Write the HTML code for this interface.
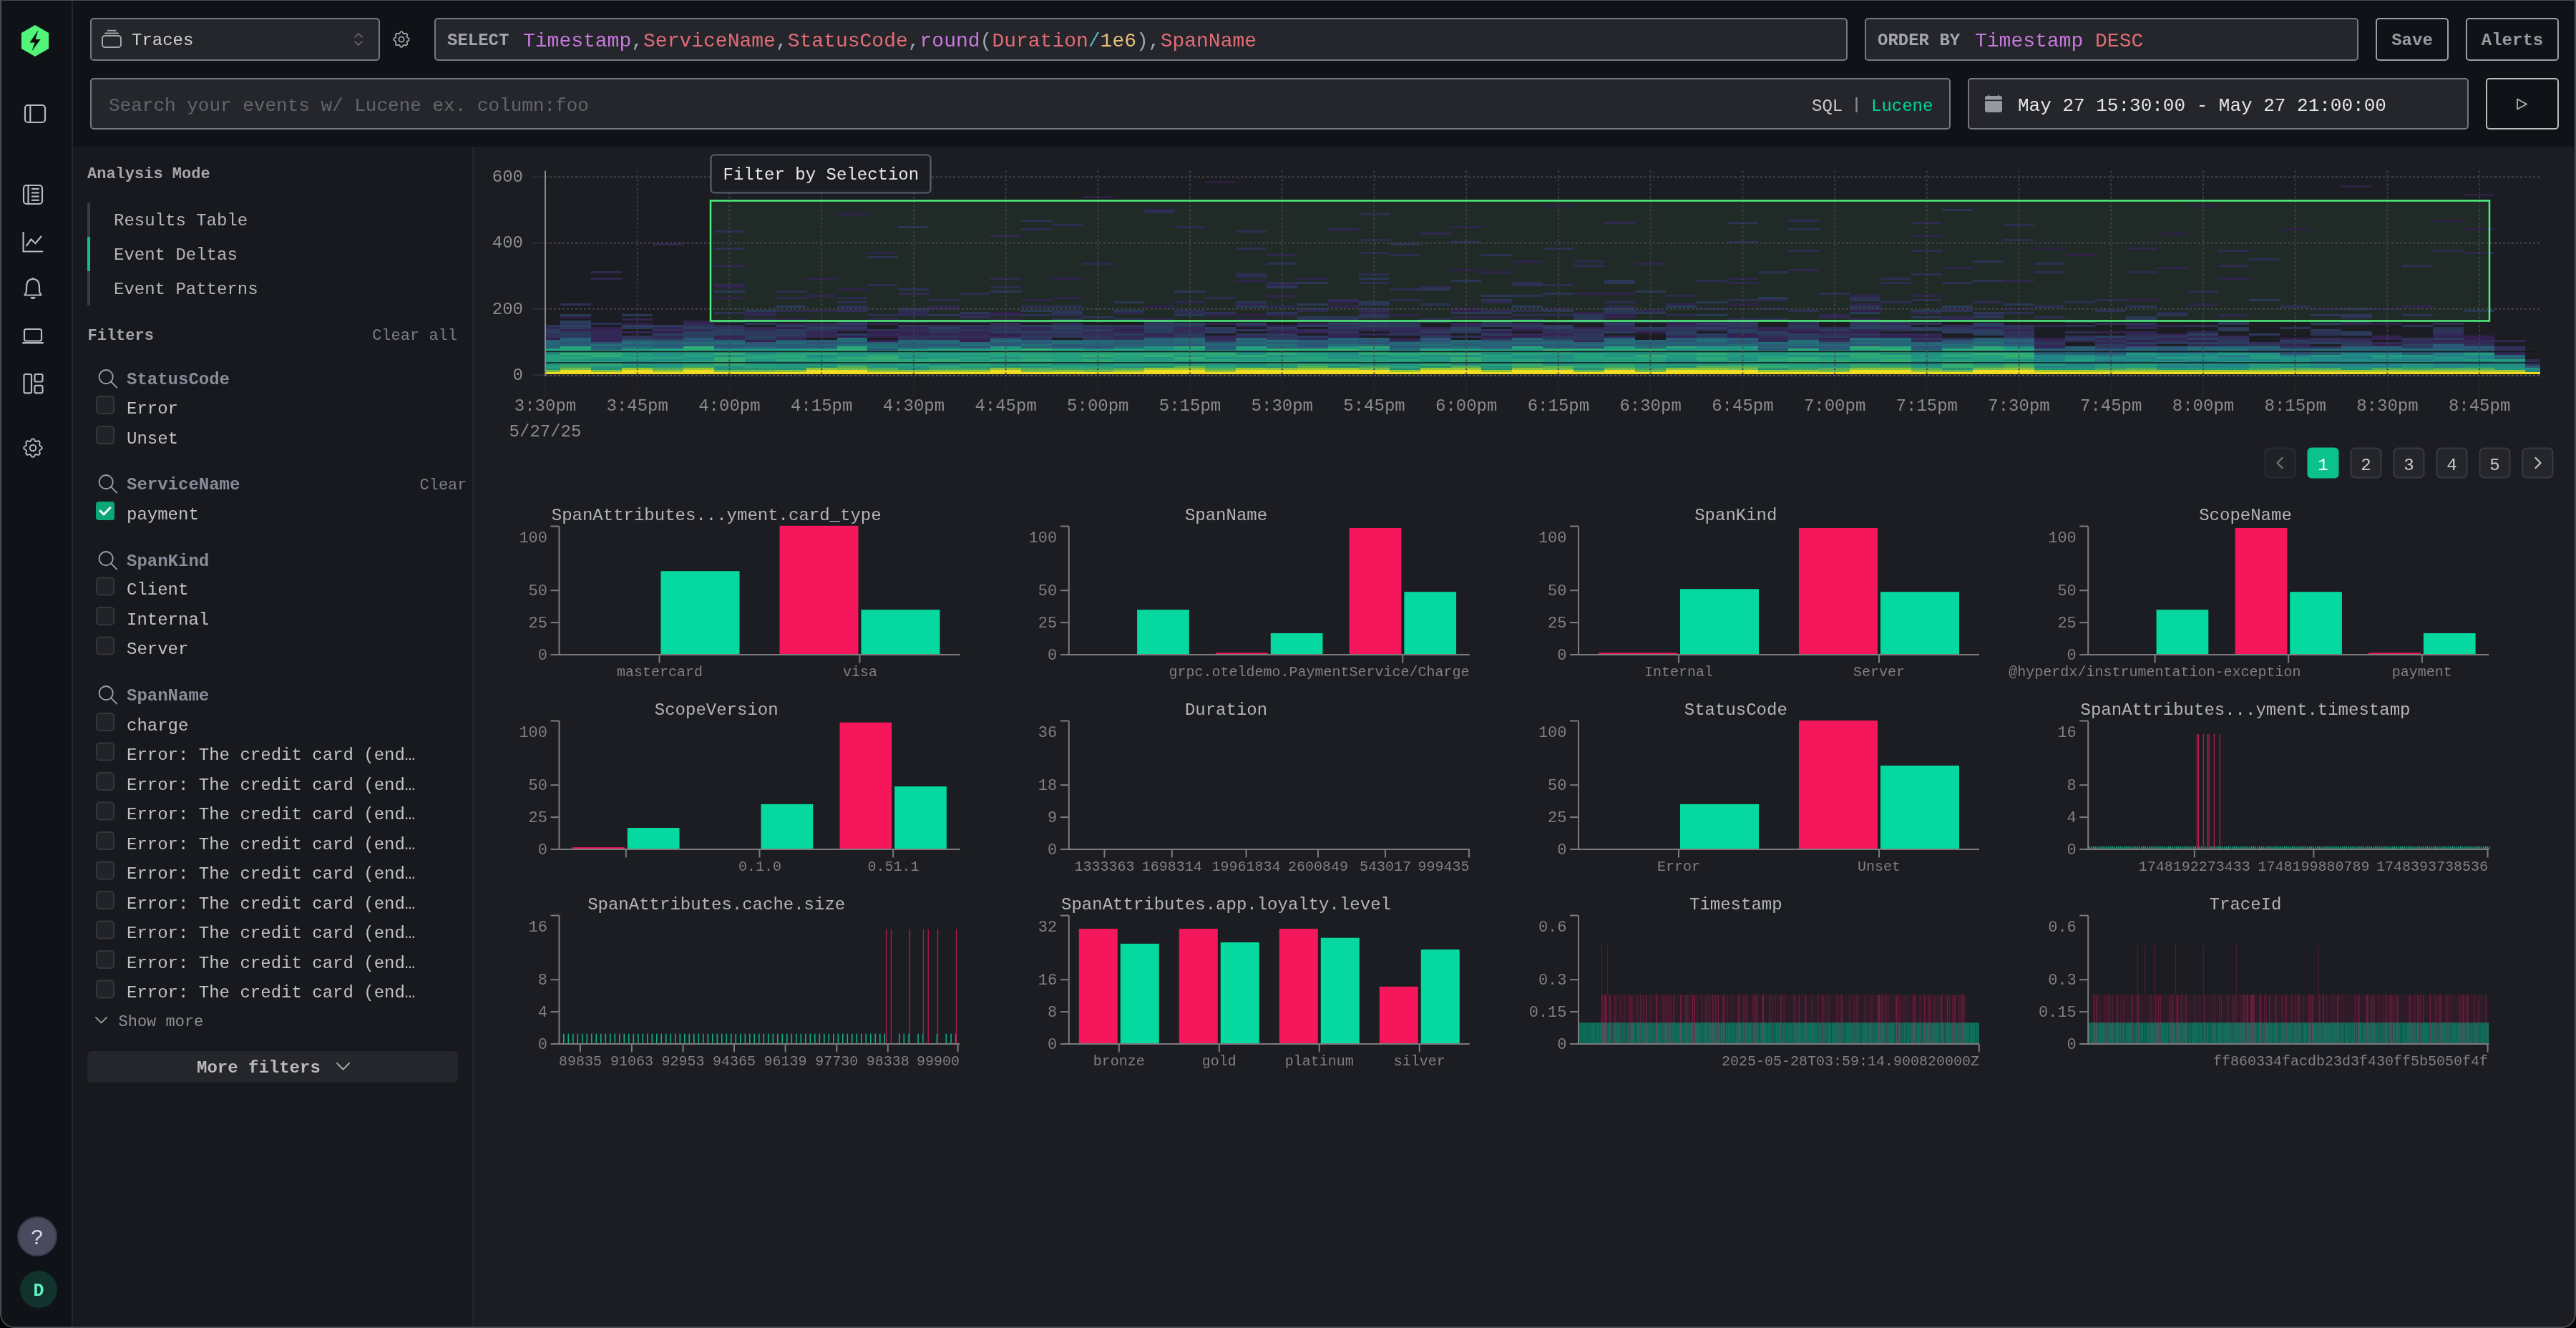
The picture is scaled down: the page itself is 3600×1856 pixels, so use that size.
<!DOCTYPE html>
<html><head><meta charset="utf-8"><title>HyperDX Search</title>
<style>html,body{margin:0;padding:0;background:#000;overflow:hidden;width:100%;height:100%}text{font-family:'Liberation Mono',monospace}</style>
</head><body>
<svg width="100%" height="100%" viewBox="0 0 3600 1856" preserveAspectRatio="xMidYMid meet" style="display:block;will-change:transform"><rect x="0" y="0" width="3600" height="1856" fill="#000"/>
<path d="M0 0 H3600 V1836 A20 20 0 0 1 3580 1856 H20 A20 20 0 0 1 0 1836 Z" fill="#4a4b50"/>
<path d="M2 1 H3598 V1836 A18 18 0 0 1 3580 1854 H20 A18 18 0 0 1 2 1836 Z" fill="#1c1d22"/>
<path d="M2 1 H100 V1854 H20 A18 18 0 0 1 2 1836 Z" fill="#0f1217"/>
<rect x="100.0" y="1.0" width="2.0" height="1853.0" fill="#24262b" stroke="none" stroke-width="0" rx="0" />
<rect x="102.0" y="1.0" width="3496.0" height="204.0" fill="#0f1217" stroke="none" stroke-width="0" rx="0" />
<rect x="102.0" y="205.0" width="558.0" height="1649.0" fill="#18191e" stroke="none" stroke-width="0" rx="0" />
<rect x="660.0" y="205.0" width="2.0" height="1649.0" fill="#24262b" stroke="none" stroke-width="0" rx="0" />
<polygon points="49.0,79.0 29.9,68.0 29.9,46.0 49.0,35.0 68.1,46.0 68.1,68.0" fill="#50f57a"/>
<path d="M53.5 42 L41.5 59.5 L48.5 59.5 L44.5 71.5 L56.5 55 L49.5 55 Z" fill="#0d0f12"/>
<rect x="35.0" y="147.0" width="28.0" height="24.0" fill="none" stroke="#b4bac3" stroke-width="2.2" rx="4" />
<line x1="42.3" y1="147.0" x2="42.3" y2="171.0" stroke="#b4bac3" stroke-width="2.2" />
<rect x="33.0" y="259.0" width="26.0" height="26.0" fill="none" stroke="#b4bac3" stroke-width="2.2" rx="4" />
<line x1="39.5" y1="259.0" x2="39.5" y2="285.0" stroke="#b4bac3" stroke-width="2.2" />
<line x1="44.0" y1="264.0" x2="54.7" y2="264.0" stroke="#b4bac3" stroke-width="2.2" />
<line x1="44.0" y1="269.4" x2="54.7" y2="269.4" stroke="#b4bac3" stroke-width="2.2" />
<line x1="44.0" y1="274.6" x2="54.7" y2="274.6" stroke="#b4bac3" stroke-width="2.2" />
<line x1="44.0" y1="279.8" x2="54.7" y2="279.8" stroke="#b4bac3" stroke-width="2.2" />
<path d="M32.6 324 V351.5 H60.2" fill="none" stroke="#b4bac3" stroke-width="2.2"/>
<path d="M36.7 344.2 L43.4 334.5 L49.5 340.2 L57.9 330" fill="none" stroke="#b4bac3" stroke-width="2.2"/>
<path d="M46 390 C39 390 37 396 37 402 V407 C37 409 35 411 34.5 412.5 H57.5 C57 411 55 409 55 407 V402 C55 396 53 390 46 390 Z" fill="none" stroke="#b4bac3" stroke-width="2.2" stroke-linejoin="round"/>
<circle cx="46" cy="389.5" r="1.6" fill="#b4bac3"/>
<path d="M42.5 415 A3.5 3 0 0 0 49.5 415 Z" fill="#b4bac3"/>
<rect x="34.0" y="460.0" width="24.0" height="16.5" fill="none" stroke="#b4bac3" stroke-width="2.2" rx="2.5" />
<line x1="32.4" y1="479.2" x2="59.7" y2="479.2" stroke="#b4bac3" stroke-width="2.6" stroke-linecap="round"/>
<rect x="33.5" y="523.0" width="10.5" height="26.3" fill="none" stroke="#b4bac3" stroke-width="2.2" rx="2" />
<rect x="48.5" y="523.0" width="11.0" height="10.5" fill="none" stroke="#b4bac3" stroke-width="2.2" rx="2" />
<rect x="48.5" y="538.8" width="11.0" height="10.5" fill="none" stroke="#b4bac3" stroke-width="2.2" rx="2" />
<g transform="translate(28.96,608.96) scale(1.42)" fill="none" stroke="#b4bac3" stroke-width="1.408"><path d="M10.325 4.317c.426 -1.756 2.924 -1.756 3.35 0a1.724 1.724 0 0 0 2.573 1.066c1.543 -.94 3.31 .826 2.37 2.37a1.724 1.724 0 0 0 1.065 2.572c1.756 .426 1.756 2.924 0 3.35a1.724 1.724 0 0 0 -1.066 2.573c.94 1.543 -.826 3.31 -2.37 2.37a1.724 1.724 0 0 0 -2.572 1.065c-.426 1.756 -2.924 1.756 -3.35 0a1.724 1.724 0 0 0 -2.573 -1.066c-1.543 .94 -3.31 -.826 -2.37 -2.37a1.724 1.724 0 0 0 -1.065 -2.572c-1.756 -.426 -1.756 -2.924 0 -3.35a1.724 1.724 0 0 0 1.066 -2.573c-.94 -1.543 .826 -3.31 2.37 -2.37c1 .608 2.296 .07 2.572 -1.065z"/><circle cx="12" cy="12" r="3"/></g>
<circle cx="52" cy="1728" r="27" fill="#4a4a5e" stroke="#38384a" stroke-width="2"/>
<text x="52.0" y="1739.0" font-size="30" fill="#dcdce6" font-weight="normal" text-anchor="middle" font-family="'Liberation Sans', sans-serif" >?</text>
<circle cx="54" cy="1802" r="26" fill="#12332d"/>
<text x="54.0" y="1811.0" font-size="25" fill="#63f0c4" font-weight="bold" text-anchor="middle" font-family="'Liberation Sans', sans-serif" >D</text>
<rect x="127.0" y="26.0" width="403.0" height="58.0" fill="#25262b" stroke="#777682" stroke-width="2" rx="4" />
<rect x="143.0" y="50.0" width="26.0" height="16.0" fill="none" stroke="#a4a5aa" stroke-width="2" rx="3.5" />
<line x1="147.0" y1="46.5" x2="165.0" y2="46.5" stroke="#a4a5aa" stroke-width="2" stroke-linecap="round"/>
<line x1="150.5" y1="42.8" x2="161.5" y2="42.8" stroke="#a4a5aa" stroke-width="2" stroke-linecap="round"/>
<text x="184.0" y="63.0" font-size="24" fill="#d0d1d4" font-weight="normal" text-anchor="start" font-family="'Liberation Mono', monospace" >Traces</text>
<path d="M496 52 L501 47 L506 52 M496 58 L501 63 L506 58" fill="none" stroke="#74757c" stroke-width="1.4" stroke-linecap="round" stroke-linejoin="round"/>
<g transform="translate(546.60,40.60) scale(1.2)" fill="none" stroke="#a4a5aa" stroke-width="1.500"><path d="M10.325 4.317c.426 -1.756 2.924 -1.756 3.35 0a1.724 1.724 0 0 0 2.573 1.066c1.543 -.94 3.31 .826 2.37 2.37a1.724 1.724 0 0 0 1.065 2.572c1.756 .426 1.756 2.924 0 3.35a1.724 1.724 0 0 0 -1.066 2.573c.94 1.543 -.826 3.31 -2.37 2.37a1.724 1.724 0 0 0 -2.572 1.065c-.426 1.756 -2.924 1.756 -3.35 0a1.724 1.724 0 0 0 -2.573 -1.066c-1.543 .94 -3.31 -.826 -2.37 -2.37a1.724 1.724 0 0 0 -1.065 -2.572c-1.756 -.426 -1.756 -2.924 0 -3.35a1.724 1.724 0 0 0 1.066 -2.573c-.94 -1.543 .826 -3.31 2.37 -2.37c1 .608 2.296 .07 2.572 -1.065z"/><circle cx="12" cy="12" r="3"/></g>
<rect x="608.0" y="26.0" width="1973.0" height="58.0" fill="#25262b" stroke="#777682" stroke-width="2" rx="4" />
<text x="625.0" y="62.5" font-size="24" fill="#a5a6ad" font-weight="bold" text-anchor="start" font-family="'Liberation Mono', monospace" >SELECT</text>
<text x="731" y="64.5" font-size="28" font-family="'Liberation Mono', monospace" xml:space="preserve"><tspan fill="#c678dd">Timestamp</tspan><tspan fill="#9da5b4">,</tspan><tspan fill="#e06c75">ServiceName</tspan><tspan fill="#9da5b4">,</tspan><tspan fill="#e06c75">StatusCode</tspan><tspan fill="#9da5b4">,</tspan><tspan fill="#c678dd">round</tspan><tspan fill="#9da5b4">(</tspan><tspan fill="#e06c75">Duration</tspan><tspan fill="#56b6c2">/</tspan><tspan fill="#e5c07b">1e6</tspan><tspan fill="#9da5b4">)</tspan><tspan fill="#9da5b4">,</tspan><tspan fill="#e06c75">SpanName</tspan></text>
<rect x="2607.0" y="26.0" width="688.0" height="58.0" fill="#25262b" stroke="#777682" stroke-width="2" rx="4" />
<text x="2624.0" y="62.5" font-size="24" fill="#a5a6ad" font-weight="bold" text-anchor="start" font-family="'Liberation Mono', monospace" >ORDER BY</text>
<text x="2760" y="64.5" font-size="28" font-family="'Liberation Mono', monospace" xml:space="preserve"><tspan fill="#c678dd">Timestamp </tspan><tspan fill="#e06c75">DESC</tspan></text>
<rect x="3321.0" y="26.0" width="100.0" height="58.0" fill="#0f1217" stroke="#9c9ea3" stroke-width="2" rx="4" />
<text x="3371.0" y="62.5" font-size="24" fill="#9a9ca1" font-weight="bold" text-anchor="middle" font-family="'Liberation Mono', monospace" >Save</text>
<rect x="3447.0" y="26.0" width="128.0" height="58.0" fill="#0f1217" stroke="#9c9ea3" stroke-width="2" rx="4" />
<text x="3511.0" y="62.5" font-size="24" fill="#9a9ca1" font-weight="bold" text-anchor="middle" font-family="'Liberation Mono', monospace" >Alerts</text>
<rect x="127.0" y="110.0" width="2598.0" height="70.0" fill="#25262b" stroke="#777682" stroke-width="2" rx="4" />
<text x="152.0" y="155.0" font-size="26" fill="#63656b" font-weight="normal" text-anchor="start" font-family="'Liberation Mono', monospace" >Search your events w/ Lucene ex. column:foo</text>
<text x="2532.0" y="155.0" font-size="24" fill="#c9cacd" font-weight="normal" text-anchor="start" font-family="'Liberation Mono', monospace" >SQL</text>
<line x1="2594.5" y1="136.0" x2="2594.5" y2="157.0" stroke="#85868b" stroke-width="2.5" />
<text x="2615.0" y="155.0" font-size="24" fill="#00d69a" font-weight="normal" text-anchor="start" font-family="'Liberation Mono', monospace" >Lucene</text>
<rect x="2751.0" y="110.0" width="698.0" height="70.0" fill="#25262b" stroke="#777682" stroke-width="2" rx="4" />
<rect x="2774.0" y="134.0" width="24.0" height="23.0" fill="#96989d" stroke="none" stroke-width="0" rx="3" />
<rect x="2774.0" y="139.5" width="24.0" height="1.6" fill="#25262b" stroke="none" stroke-width="0" rx="0" />
<rect x="2778.5" y="132.5" width="1.6" height="3.0" fill="#96989d" stroke="none" stroke-width="0" rx="0" />
<rect x="2792.0" y="132.5" width="1.6" height="3.0" fill="#96989d" stroke="none" stroke-width="0" rx="0" />
<text x="2820.0" y="155.0" font-size="26" fill="#e4e5e8" font-weight="normal" text-anchor="start" font-family="'Liberation Mono', monospace" >May 27 15:30:00 - May 27 21:00:00</text>
<rect x="3475.0" y="110.0" width="100.0" height="70.0" fill="#0f1217" stroke="#b9bbbf" stroke-width="2" rx="4" />
<path d="M3518 138.5 L3531 145.5 L3518 152.5 Z" fill="none" stroke="#b0b2b6" stroke-width="1.8" stroke-linejoin="round"/>
<text x="122.0" y="248.5" font-size="22" fill="#a5a6ab" font-weight="bold" text-anchor="start" font-family="'Liberation Mono', monospace" >Analysis Mode</text>
<rect x="122.0" y="283.0" width="4.0" height="144.0" fill="#3a3b40" stroke="none" stroke-width="0" rx="0" />
<rect x="122.0" y="331.0" width="4.0" height="48.0" fill="#0bc18e" stroke="none" stroke-width="0" rx="0" />
<text x="159.0" y="315.0" font-size="24" fill="#b5b6ba" font-weight="normal" text-anchor="start" font-family="'Liberation Mono', monospace" >Results Table</text>
<text x="159.0" y="363.0" font-size="24" fill="#b5b6ba" font-weight="normal" text-anchor="start" font-family="'Liberation Mono', monospace" >Event Deltas</text>
<text x="159.0" y="411.0" font-size="24" fill="#b5b6ba" font-weight="normal" text-anchor="start" font-family="'Liberation Mono', monospace" >Event Patterns</text>
<text x="122.5" y="475.0" font-size="22" fill="#a5a6ab" font-weight="bold" text-anchor="start" font-family="'Liberation Mono', monospace" >Filters</text>
<text x="639.0" y="475.0" font-size="22" fill="#7c7e84" font-weight="normal" text-anchor="end" font-family="'Liberation Mono', monospace" >Clear all</text>
<g transform="translate(134.49,512.89) scale(1.37)" fill="none" stroke="#9c9ea6" stroke-width="1.387" stroke-linecap="round"><circle cx="10" cy="10" r="7"/><path d="M21 21l-6 -6"/></g>
<text x="177.0" y="536.5" font-size="24" fill="#8a8c9a" font-weight="bold" text-anchor="start" font-family="'Liberation Mono', monospace" >StatusCode</text>
<rect x="135.0" y="554.0" width="24.0" height="24.0" fill="#222328" stroke="#34363b" stroke-width="2" rx="4" />
<text x="177.0" y="577.5" font-size="24" fill="#c1c2c5" font-weight="normal" text-anchor="start" font-family="'Liberation Mono', monospace" >Error</text>
<rect x="135.0" y="596.0" width="24.0" height="24.0" fill="#222328" stroke="#34363b" stroke-width="2" rx="4" />
<text x="177.0" y="619.5" font-size="24" fill="#c1c2c5" font-weight="normal" text-anchor="start" font-family="'Liberation Mono', monospace" >Unset</text>
<g transform="translate(134.49,659.89) scale(1.37)" fill="none" stroke="#9c9ea6" stroke-width="1.387" stroke-linecap="round"><circle cx="10" cy="10" r="7"/><path d="M21 21l-6 -6"/></g>
<text x="177.0" y="683.5" font-size="24" fill="#8a8c9a" font-weight="bold" text-anchor="start" font-family="'Liberation Mono', monospace" >ServiceName</text>
<text x="652.5" y="683.5" font-size="22" fill="#7c7e84" font-weight="normal" text-anchor="end" font-family="'Liberation Mono', monospace" >Clear</text>
<rect x="134.0" y="701.0" width="26.0" height="26.0" fill="#0ca678" stroke="none" stroke-width="0" rx="4" />
<path d="M140 714 L145 719 L154 709.5" fill="none" stroke="#fff" stroke-width="3" stroke-linecap="round" stroke-linejoin="round"/>
<text x="177.0" y="725.5" font-size="24" fill="#c1c2c5" font-weight="normal" text-anchor="start" font-family="'Liberation Mono', monospace" >payment</text>
<g transform="translate(134.49,766.89) scale(1.37)" fill="none" stroke="#9c9ea6" stroke-width="1.387" stroke-linecap="round"><circle cx="10" cy="10" r="7"/><path d="M21 21l-6 -6"/></g>
<text x="177.0" y="790.5" font-size="24" fill="#8a8c9a" font-weight="bold" text-anchor="start" font-family="'Liberation Mono', monospace" >SpanKind</text>
<rect x="135.0" y="807.5" width="24.0" height="24.0" fill="#222328" stroke="#34363b" stroke-width="2" rx="4" />
<text x="177.0" y="831.0" font-size="24" fill="#c1c2c5" font-weight="normal" text-anchor="start" font-family="'Liberation Mono', monospace" >Client</text>
<rect x="135.0" y="849.0" width="24.0" height="24.0" fill="#222328" stroke="#34363b" stroke-width="2" rx="4" />
<text x="177.0" y="872.5" font-size="24" fill="#c1c2c5" font-weight="normal" text-anchor="start" font-family="'Liberation Mono', monospace" >Internal</text>
<rect x="135.0" y="890.5" width="24.0" height="24.0" fill="#222328" stroke="#34363b" stroke-width="2" rx="4" />
<text x="177.0" y="914.0" font-size="24" fill="#c1c2c5" font-weight="normal" text-anchor="start" font-family="'Liberation Mono', monospace" >Server</text>
<g transform="translate(134.49,954.89) scale(1.37)" fill="none" stroke="#9c9ea6" stroke-width="1.387" stroke-linecap="round"><circle cx="10" cy="10" r="7"/><path d="M21 21l-6 -6"/></g>
<text x="177.0" y="978.5" font-size="24" fill="#8a8c9a" font-weight="bold" text-anchor="start" font-family="'Liberation Mono', monospace" >SpanName</text>
<rect x="135.0" y="997.0" width="24.0" height="24.0" fill="#222328" stroke="#34363b" stroke-width="2" rx="4" />
<text x="177.0" y="1020.5" font-size="24" fill="#c1c2c5" font-weight="normal" text-anchor="start" font-family="'Liberation Mono', monospace" >charge</text>
<rect x="135.0" y="1038.5" width="24.0" height="24.0" fill="#222328" stroke="#34363b" stroke-width="2" rx="4" />
<text x="177.0" y="1062.0" font-size="24" fill="#c1c2c5" font-weight="normal" text-anchor="start" font-family="'Liberation Mono', monospace" >Error: The credit card (end…</text>
<rect x="135.0" y="1080.0" width="24.0" height="24.0" fill="#222328" stroke="#34363b" stroke-width="2" rx="4" />
<text x="177.0" y="1103.5" font-size="24" fill="#c1c2c5" font-weight="normal" text-anchor="start" font-family="'Liberation Mono', monospace" >Error: The credit card (end…</text>
<rect x="135.0" y="1121.5" width="24.0" height="24.0" fill="#222328" stroke="#34363b" stroke-width="2" rx="4" />
<text x="177.0" y="1145.0" font-size="24" fill="#c1c2c5" font-weight="normal" text-anchor="start" font-family="'Liberation Mono', monospace" >Error: The credit card (end…</text>
<rect x="135.0" y="1163.0" width="24.0" height="24.0" fill="#222328" stroke="#34363b" stroke-width="2" rx="4" />
<text x="177.0" y="1186.5" font-size="24" fill="#c1c2c5" font-weight="normal" text-anchor="start" font-family="'Liberation Mono', monospace" >Error: The credit card (end…</text>
<rect x="135.0" y="1204.5" width="24.0" height="24.0" fill="#222328" stroke="#34363b" stroke-width="2" rx="4" />
<text x="177.0" y="1228.0" font-size="24" fill="#c1c2c5" font-weight="normal" text-anchor="start" font-family="'Liberation Mono', monospace" >Error: The credit card (end…</text>
<rect x="135.0" y="1246.0" width="24.0" height="24.0" fill="#222328" stroke="#34363b" stroke-width="2" rx="4" />
<text x="177.0" y="1269.5" font-size="24" fill="#c1c2c5" font-weight="normal" text-anchor="start" font-family="'Liberation Mono', monospace" >Error: The credit card (end…</text>
<rect x="135.0" y="1287.5" width="24.0" height="24.0" fill="#222328" stroke="#34363b" stroke-width="2" rx="4" />
<text x="177.0" y="1311.0" font-size="24" fill="#c1c2c5" font-weight="normal" text-anchor="start" font-family="'Liberation Mono', monospace" >Error: The credit card (end…</text>
<rect x="135.0" y="1329.0" width="24.0" height="24.0" fill="#222328" stroke="#34363b" stroke-width="2" rx="4" />
<text x="177.0" y="1352.5" font-size="24" fill="#c1c2c5" font-weight="normal" text-anchor="start" font-family="'Liberation Mono', monospace" >Error: The credit card (end…</text>
<rect x="135.0" y="1370.5" width="24.0" height="24.0" fill="#222328" stroke="#34363b" stroke-width="2" rx="4" />
<text x="177.0" y="1394.0" font-size="24" fill="#c1c2c5" font-weight="normal" text-anchor="start" font-family="'Liberation Mono', monospace" >Error: The credit card (end…</text>
<path d="M134 1422 L141.5 1429.5 L149 1422" fill="none" stroke="#909296" stroke-width="2" stroke-linecap="round" stroke-linejoin="round"/>
<text x="165.5" y="1433.5" font-size="22" fill="#8e9095" font-weight="normal" text-anchor="start" font-family="'Liberation Mono', monospace" >Show more</text>
<rect x="122.0" y="1469.0" width="518.0" height="44.0" fill="#25262b" stroke="none" stroke-width="0" rx="6" />
<text x="275.0" y="1499.0" font-size="24" fill="#b9babe" font-weight="bold" text-anchor="start" font-family="'Liberation Mono', monospace" >More filters</text>
<path d="M471 1486 L479.5 1494.5 L488 1486" fill="none" stroke="#a6a7ab" stroke-width="2" stroke-linecap="round" stroke-linejoin="round"/>
<line x1="743.0" y1="247.4" x2="762.0" y2="247.4" stroke="#2a2c31" stroke-width="2" />
<line x1="743.0" y1="339.5" x2="762.0" y2="339.5" stroke="#2a2c31" stroke-width="2" />
<line x1="743.0" y1="431.7" x2="762.0" y2="431.7" stroke="#2a2c31" stroke-width="2" />
<line x1="743.0" y1="524.0" x2="762.0" y2="524.0" stroke="#2a2c31" stroke-width="2" />
<rect x="993.0" y="280.5" width="2486.0" height="168.0" fill="rgba(80,245,120,0.07)" stroke="none" stroke-width="0" rx="0" />
<g shape-rendering="crispEdges"><rect x="762.0" y="520.0" width="21.4" height="3.0" fill="#f1dc24"/><rect x="762.0" y="517.0" width="21.4" height="3.0" fill="#70bd4b"/><rect x="762.0" y="514.0" width="21.4" height="3.0" fill="#249472"/><rect x="762.0" y="511.0" width="21.4" height="3.0" fill="#24a07e"/><rect x="762.0" y="508.0" width="21.4" height="3.0" fill="#229482"/><rect x="762.0" y="505.0" width="21.4" height="3.0" fill="#239b7f"/><rect x="762.0" y="502.0" width="21.4" height="3.0" fill="#249f7e"/><rect x="762.0" y="499.0" width="21.4" height="3.0" fill="#24a07e"/><rect x="762.0" y="496.0" width="21.4" height="3.0" fill="#25a17d"/><rect x="762.0" y="493.0" width="21.4" height="3.0" fill="#218f84"/><rect x="762.0" y="490.0" width="21.4" height="3.0" fill="#218f84"/><rect x="762.0" y="487.0" width="21.4" height="3.0" fill="#24a07e"/><rect x="762.0" y="484.0" width="21.4" height="3.0" fill="#285f77"/><rect x="762.0" y="481.0" width="21.4" height="3.0" fill="#276477"/><rect x="762.0" y="478.0" width="21.4" height="3.0" fill="#256777"/><rect x="762.0" y="475.0" width="21.4" height="3.0" fill="#276477"/><rect x="762.0" y="472.0" width="21.4" height="3.0" fill="#332251"/><rect x="762.0" y="469.0" width="21.4" height="3.0" fill="#2f335a"/><rect x="762.0" y="466.0" width="21.4" height="3.0" fill="#303159"/><rect x="762.0" y="463.0" width="21.4" height="3.0" fill="#2c3b5e"/><rect x="762.0" y="460.0" width="21.4" height="3.0" fill="#2a3f5e"/><rect x="762.0" y="457.0" width="21.4" height="3.0" fill="#332855"/><rect x="762.0" y="454.0" width="21.4" height="3.0" fill="#2a3755"/><rect x="783.4" y="520.0" width="42.9" height="3.0" fill="#f1dc24"/><rect x="783.4" y="517.0" width="42.9" height="3.0" fill="#f1dc24"/><rect x="783.4" y="514.0" width="42.9" height="3.0" fill="#70bd4b"/><rect x="783.4" y="511.0" width="42.9" height="3.0" fill="#3ea363"/><rect x="783.4" y="508.0" width="42.9" height="3.0" fill="#25a17d"/><rect x="783.4" y="505.0" width="42.9" height="3.0" fill="#27a57b"/><rect x="783.4" y="502.0" width="42.9" height="3.0" fill="#229581"/><rect x="783.4" y="499.0" width="42.9" height="3.0" fill="#2aa779"/><rect x="783.4" y="496.0" width="42.9" height="3.0" fill="#249d7f"/><rect x="783.4" y="493.0" width="42.9" height="3.0" fill="#35ad72"/><rect x="783.4" y="490.0" width="42.9" height="3.0" fill="#249d7f"/><rect x="783.4" y="487.0" width="42.9" height="3.0" fill="#25a17d"/><rect x="783.4" y="484.0" width="42.9" height="3.0" fill="#2aa779"/><rect x="783.4" y="481.0" width="42.9" height="3.0" fill="#295d77"/><rect x="783.4" y="478.0" width="42.9" height="3.0" fill="#2c5676"/><rect x="783.4" y="475.0" width="42.9" height="3.0" fill="#276077"/><rect x="783.4" y="472.0" width="42.9" height="3.0" fill="#276077"/><rect x="783.4" y="469.0" width="42.9" height="3.0" fill="#2e355b"/><rect x="783.4" y="466.0" width="42.9" height="3.0" fill="#2b3e5e"/><rect x="783.4" y="463.0" width="42.9" height="3.0" fill="#2e365b"/><rect x="783.4" y="460.0" width="42.9" height="3.0" fill="#332453"/><rect x="783.4" y="457.0" width="42.9" height="3.0" fill="#2d395c"/><rect x="783.4" y="454.0" width="42.9" height="3.0" fill="#2b3e5e"/><rect x="783.4" y="451.0" width="42.9" height="3.0" fill="#2e365b"/><rect x="783.4" y="448.0" width="42.9" height="3.0" fill="#2a3f5e"/><rect x="783.4" y="442.0" width="42.9" height="3.0" fill="#30214b"/><rect x="783.4" y="439.0" width="42.9" height="3.0" fill="#283c56"/><rect x="783.4" y="424.0" width="42.9" height="3.0" fill="#2d3052"/><rect x="826.3" y="520.0" width="42.9" height="3.0" fill="#f1dc24"/><rect x="826.3" y="517.0" width="42.9" height="3.0" fill="#8bc43a"/><rect x="826.3" y="514.0" width="42.9" height="3.0" fill="#249472"/><rect x="826.3" y="511.0" width="42.9" height="3.0" fill="#229681"/><rect x="826.3" y="508.0" width="42.9" height="3.0" fill="#31ab75"/><rect x="826.3" y="505.0" width="42.9" height="3.0" fill="#25a37c"/><rect x="826.3" y="502.0" width="42.9" height="3.0" fill="#218f84"/><rect x="826.3" y="499.0" width="42.9" height="3.0" fill="#239b7f"/><rect x="826.3" y="496.0" width="42.9" height="3.0" fill="#32ab74"/><rect x="826.3" y="493.0" width="42.9" height="3.0" fill="#2aa779"/><rect x="826.3" y="490.0" width="42.9" height="3.0" fill="#2ea977"/><rect x="826.3" y="487.0" width="42.9" height="3.0" fill="#236c77"/><rect x="826.3" y="484.0" width="42.9" height="3.0" fill="#295c77"/><rect x="826.3" y="481.0" width="42.9" height="3.0" fill="#236e77"/><rect x="826.3" y="478.0" width="42.9" height="3.0" fill="#2b5777"/><rect x="826.3" y="475.0" width="42.9" height="3.0" fill="#332855"/><rect x="826.3" y="472.0" width="42.9" height="3.0" fill="#332554"/><rect x="826.3" y="469.0" width="42.9" height="3.0" fill="#332754"/><rect x="826.3" y="466.0" width="42.9" height="3.0" fill="#322a56"/><rect x="826.3" y="463.0" width="42.9" height="3.0" fill="#322955"/><rect x="826.3" y="460.0" width="42.9" height="3.0" fill="#332554"/><rect x="826.3" y="457.0" width="42.9" height="3.0" fill="#33204f"/><rect x="826.3" y="451.0" width="42.9" height="3.0" fill="#2c3052"/><rect x="826.3" y="388.0" width="42.9" height="3.0" fill="#2f284e"/><rect x="826.3" y="379.0" width="42.9" height="3.0" fill="#2e2b50"/><rect x="869.2" y="520.0" width="42.9" height="3.0" fill="#f1dc24"/><rect x="869.2" y="517.0" width="42.9" height="3.0" fill="#f1dc24"/><rect x="869.2" y="514.0" width="42.9" height="3.0" fill="#9bc830"/><rect x="869.2" y="511.0" width="42.9" height="3.0" fill="#249472"/><rect x="869.2" y="508.0" width="42.9" height="3.0" fill="#239780"/><rect x="869.2" y="505.0" width="42.9" height="3.0" fill="#218e84"/><rect x="869.2" y="502.0" width="42.9" height="3.0" fill="#229681"/><rect x="869.2" y="499.0" width="42.9" height="3.0" fill="#25a37c"/><rect x="869.2" y="496.0" width="42.9" height="3.0" fill="#229781"/><rect x="869.2" y="493.0" width="42.9" height="3.0" fill="#249d7f"/><rect x="869.2" y="490.0" width="42.9" height="3.0" fill="#219183"/><rect x="869.2" y="487.0" width="42.9" height="3.0" fill="#229482"/><rect x="869.2" y="484.0" width="42.9" height="3.0" fill="#236e77"/><rect x="869.2" y="481.0" width="42.9" height="3.0" fill="#276077"/><rect x="869.2" y="478.0" width="42.9" height="3.0" fill="#236f77"/><rect x="869.2" y="475.0" width="42.9" height="3.0" fill="#2a5b77"/><rect x="869.2" y="472.0" width="42.9" height="3.0" fill="#2a3f5e"/><rect x="869.2" y="469.0" width="42.9" height="3.0" fill="#2f345b"/><rect x="869.2" y="463.0" width="42.9" height="3.0" fill="#332453"/><rect x="869.2" y="457.0" width="42.9" height="3.0" fill="#2d395c"/><rect x="869.2" y="454.0" width="42.9" height="3.0" fill="#2b3e5e"/><rect x="869.2" y="451.0" width="42.9" height="3.0" fill="#301f49"/><rect x="869.2" y="445.0" width="42.9" height="3.0" fill="#2f284f"/><rect x="869.2" y="439.0" width="42.9" height="3.0" fill="#293855"/><rect x="912.1" y="520.0" width="42.9" height="3.0" fill="#f1dc24"/><rect x="912.1" y="517.0" width="42.9" height="3.0" fill="#9bc830"/><rect x="912.1" y="514.0" width="42.9" height="3.0" fill="#52ae58"/><rect x="912.1" y="511.0" width="42.9" height="3.0" fill="#239780"/><rect x="912.1" y="508.0" width="42.9" height="3.0" fill="#229581"/><rect x="912.1" y="505.0" width="42.9" height="3.0" fill="#25a37c"/><rect x="912.1" y="502.0" width="42.9" height="3.0" fill="#218f84"/><rect x="912.1" y="499.0" width="42.9" height="3.0" fill="#24a07e"/><rect x="912.1" y="496.0" width="42.9" height="3.0" fill="#229482"/><rect x="912.1" y="493.0" width="42.9" height="3.0" fill="#208e85"/><rect x="912.1" y="490.0" width="42.9" height="3.0" fill="#249c7f"/><rect x="912.1" y="487.0" width="42.9" height="3.0" fill="#25a27d"/><rect x="912.1" y="484.0" width="42.9" height="3.0" fill="#276077"/><rect x="912.1" y="481.0" width="42.9" height="3.0" fill="#2a5a77"/><rect x="912.1" y="478.0" width="42.9" height="3.0" fill="#256777"/><rect x="912.1" y="475.0" width="42.9" height="3.0" fill="#2d5476"/><rect x="912.1" y="472.0" width="42.9" height="3.0" fill="#2e375c"/><rect x="912.1" y="469.0" width="42.9" height="3.0" fill="#322855"/><rect x="912.1" y="466.0" width="42.9" height="3.0" fill="#2a3f5e"/><rect x="912.1" y="463.0" width="42.9" height="3.0" fill="#332050"/><rect x="912.1" y="460.0" width="42.9" height="3.0" fill="#312e58"/><rect x="912.1" y="457.0" width="42.9" height="3.0" fill="#332654"/><rect x="912.1" y="454.0" width="42.9" height="3.0" fill="#2d3a5d"/><rect x="912.1" y="340.0" width="42.9" height="3.0" fill="#30264e"/><rect x="955.0" y="520.0" width="42.9" height="3.0" fill="#f1dc24"/><rect x="955.0" y="517.0" width="42.9" height="3.0" fill="#f1dc24"/><rect x="955.0" y="514.0" width="42.9" height="3.0" fill="#9bc830"/><rect x="955.0" y="511.0" width="42.9" height="3.0" fill="#3ea363"/><rect x="955.0" y="508.0" width="42.9" height="3.0" fill="#24a07e"/><rect x="955.0" y="505.0" width="42.9" height="3.0" fill="#26a57b"/><rect x="955.0" y="502.0" width="42.9" height="3.0" fill="#229581"/><rect x="955.0" y="499.0" width="42.9" height="3.0" fill="#219283"/><rect x="955.0" y="496.0" width="42.9" height="3.0" fill="#24a07e"/><rect x="955.0" y="493.0" width="42.9" height="3.0" fill="#239a7f"/><rect x="955.0" y="490.0" width="42.9" height="3.0" fill="#249e7f"/><rect x="955.0" y="487.0" width="42.9" height="3.0" fill="#2aa779"/><rect x="955.0" y="484.0" width="42.9" height="3.0" fill="#36ad72"/><rect x="955.0" y="481.0" width="42.9" height="3.0" fill="#276077"/><rect x="955.0" y="478.0" width="42.9" height="3.0" fill="#236b77"/><rect x="955.0" y="475.0" width="42.9" height="3.0" fill="#2d5476"/><rect x="955.0" y="472.0" width="42.9" height="3.0" fill="#2b5777"/><rect x="955.0" y="469.0" width="42.9" height="3.0" fill="#2a405e"/><rect x="955.0" y="466.0" width="42.9" height="3.0" fill="#2a3f5e"/><rect x="955.0" y="463.0" width="42.9" height="3.0" fill="#2b3d5e"/><rect x="955.0" y="460.0" width="42.9" height="3.0" fill="#322855"/><rect x="955.0" y="457.0" width="42.9" height="3.0" fill="#2a3f5e"/><rect x="955.0" y="454.0" width="42.9" height="3.0" fill="#2f345b"/><rect x="955.0" y="451.0" width="42.9" height="3.0" fill="#332754"/><rect x="955.0" y="448.0" width="42.9" height="3.0" fill="#30234c"/><rect x="997.9" y="520.0" width="42.9" height="3.0" fill="#f1dc24"/><rect x="997.9" y="517.0" width="42.9" height="3.0" fill="#70bd4b"/><rect x="997.9" y="514.0" width="42.9" height="3.0" fill="#249472"/><rect x="997.9" y="511.0" width="42.9" height="3.0" fill="#219283"/><rect x="997.9" y="508.0" width="42.9" height="3.0" fill="#36ad72"/><rect x="997.9" y="505.0" width="42.9" height="3.0" fill="#2ba778"/><rect x="997.9" y="502.0" width="42.9" height="3.0" fill="#35ad72"/><rect x="997.9" y="499.0" width="42.9" height="3.0" fill="#33ac73"/><rect x="997.9" y="496.0" width="42.9" height="3.0" fill="#229282"/><rect x="997.9" y="493.0" width="42.9" height="3.0" fill="#32ab74"/><rect x="997.9" y="490.0" width="42.9" height="3.0" fill="#239980"/><rect x="997.9" y="487.0" width="42.9" height="3.0" fill="#229282"/><rect x="997.9" y="484.0" width="42.9" height="3.0" fill="#2a5b77"/><rect x="997.9" y="481.0" width="42.9" height="3.0" fill="#2b5877"/><rect x="997.9" y="478.0" width="42.9" height="3.0" fill="#236d77"/><rect x="997.9" y="475.0" width="42.9" height="3.0" fill="#2a5b77"/><rect x="997.9" y="472.0" width="42.9" height="3.0" fill="#322b56"/><rect x="997.9" y="469.0" width="42.9" height="3.0" fill="#332554"/><rect x="997.9" y="466.0" width="42.9" height="3.0" fill="#2a3f5e"/><rect x="997.9" y="463.0" width="42.9" height="3.0" fill="#2b3e5e"/><rect x="997.9" y="460.0" width="42.9" height="3.0" fill="#2c3b5e"/><rect x="997.9" y="457.0" width="42.9" height="3.0" fill="#2f3259"/><rect x="997.9" y="454.0" width="42.9" height="3.0" fill="#312c57"/><rect x="997.9" y="448.0" width="42.9" height="3.0" fill="#293955"/><rect x="997.9" y="436.0" width="42.9" height="3.0" fill="#2c3153"/><rect x="997.9" y="415.0" width="42.9" height="3.0" fill="#30224b"/><rect x="997.9" y="406.0" width="42.9" height="3.0" fill="#2a3755"/><rect x="997.9" y="400.0" width="42.9" height="3.0" fill="#30224c"/><rect x="997.9" y="397.0" width="42.9" height="3.0" fill="#2e2a50"/><rect x="997.9" y="370.0" width="42.9" height="3.0" fill="#30264e"/><rect x="997.9" y="346.0" width="42.9" height="3.0" fill="#2c3052"/><rect x="997.9" y="322.0" width="42.9" height="3.0" fill="#2d2f52"/><rect x="1040.8" y="520.0" width="42.9" height="3.0" fill="#f1dc24"/><rect x="1040.8" y="517.0" width="42.9" height="3.0" fill="#70bd4b"/><rect x="1040.8" y="514.0" width="42.9" height="3.0" fill="#249472"/><rect x="1040.8" y="511.0" width="42.9" height="3.0" fill="#249f7e"/><rect x="1040.8" y="508.0" width="42.9" height="3.0" fill="#249f7e"/><rect x="1040.8" y="505.0" width="42.9" height="3.0" fill="#218e84"/><rect x="1040.8" y="502.0" width="42.9" height="3.0" fill="#229581"/><rect x="1040.8" y="499.0" width="42.9" height="3.0" fill="#29a679"/><rect x="1040.8" y="496.0" width="42.9" height="3.0" fill="#24a17e"/><rect x="1040.8" y="493.0" width="42.9" height="3.0" fill="#229382"/><rect x="1040.8" y="490.0" width="42.9" height="3.0" fill="#219183"/><rect x="1040.8" y="487.0" width="42.9" height="3.0" fill="#229282"/><rect x="1040.8" y="484.0" width="42.9" height="3.0" fill="#256777"/><rect x="1040.8" y="481.0" width="42.9" height="3.0" fill="#2b5877"/><rect x="1040.8" y="478.0" width="42.9" height="3.0" fill="#2d5476"/><rect x="1040.8" y="475.0" width="42.9" height="3.0" fill="#332150"/><rect x="1040.8" y="472.0" width="42.9" height="3.0" fill="#2c3a5e"/><rect x="1040.8" y="469.0" width="42.9" height="3.0" fill="#2a405e"/><rect x="1040.8" y="466.0" width="42.9" height="3.0" fill="#2e375c"/><rect x="1040.8" y="463.0" width="42.9" height="3.0" fill="#2c3a5e"/><rect x="1040.8" y="460.0" width="42.9" height="3.0" fill="#312d57"/><rect x="1040.8" y="457.0" width="42.9" height="3.0" fill="#332754"/><rect x="1040.8" y="451.0" width="42.9" height="3.0" fill="#2a3655"/><rect x="1040.8" y="445.0" width="42.9" height="3.0" fill="#2d2e51"/><rect x="1040.8" y="439.0" width="42.9" height="3.0" fill="#2f284f"/><rect x="1040.8" y="436.0" width="42.9" height="3.0" fill="#2f274e"/><rect x="1040.8" y="433.0" width="42.9" height="3.0" fill="#283a55"/><rect x="1083.7" y="520.0" width="42.9" height="3.0" fill="#f1dc24"/><rect x="1083.7" y="517.0" width="42.9" height="3.0" fill="#8bc43a"/><rect x="1083.7" y="514.0" width="42.9" height="3.0" fill="#249472"/><rect x="1083.7" y="511.0" width="42.9" height="3.0" fill="#229781"/><rect x="1083.7" y="508.0" width="42.9" height="3.0" fill="#229681"/><rect x="1083.7" y="505.0" width="42.9" height="3.0" fill="#208e85"/><rect x="1083.7" y="502.0" width="42.9" height="3.0" fill="#2da977"/><rect x="1083.7" y="499.0" width="42.9" height="3.0" fill="#24a17e"/><rect x="1083.7" y="496.0" width="42.9" height="3.0" fill="#2da877"/><rect x="1083.7" y="493.0" width="42.9" height="3.0" fill="#25a27d"/><rect x="1083.7" y="490.0" width="42.9" height="3.0" fill="#25a17d"/><rect x="1083.7" y="487.0" width="42.9" height="3.0" fill="#229581"/><rect x="1083.7" y="484.0" width="42.9" height="3.0" fill="#2b5777"/><rect x="1083.7" y="481.0" width="42.9" height="3.0" fill="#2a5b77"/><rect x="1083.7" y="478.0" width="42.9" height="3.0" fill="#236c77"/><rect x="1083.7" y="475.0" width="42.9" height="3.0" fill="#285f77"/><rect x="1083.7" y="472.0" width="42.9" height="3.0" fill="#332554"/><rect x="1083.7" y="469.0" width="42.9" height="3.0" fill="#303059"/><rect x="1083.7" y="466.0" width="42.9" height="3.0" fill="#2b3d5e"/><rect x="1083.7" y="463.0" width="42.9" height="3.0" fill="#2e375c"/><rect x="1083.7" y="460.0" width="42.9" height="3.0" fill="#2b3e5e"/><rect x="1083.7" y="457.0" width="42.9" height="3.0" fill="#331f4e"/><rect x="1083.7" y="454.0" width="42.9" height="3.0" fill="#2b3e5e"/><rect x="1083.7" y="451.0" width="42.9" height="3.0" fill="#2f274e"/><rect x="1083.7" y="445.0" width="42.9" height="3.0" fill="#30254d"/><rect x="1083.7" y="433.0" width="42.9" height="3.0" fill="#2e2a50"/><rect x="1083.7" y="427.0" width="42.9" height="3.0" fill="#283c56"/><rect x="1083.7" y="415.0" width="42.9" height="3.0" fill="#2e2b50"/><rect x="1083.7" y="406.0" width="42.9" height="3.0" fill="#2d2f52"/><rect x="1126.6" y="520.0" width="42.9" height="3.0" fill="#f1dc24"/><rect x="1126.6" y="517.0" width="42.9" height="3.0" fill="#f1dc24"/><rect x="1126.6" y="514.0" width="42.9" height="3.0" fill="#8bc43a"/><rect x="1126.6" y="511.0" width="42.9" height="3.0" fill="#249472"/><rect x="1126.6" y="508.0" width="42.9" height="3.0" fill="#229781"/><rect x="1126.6" y="505.0" width="42.9" height="3.0" fill="#239b7f"/><rect x="1126.6" y="502.0" width="42.9" height="3.0" fill="#25a37c"/><rect x="1126.6" y="499.0" width="42.9" height="3.0" fill="#239980"/><rect x="1126.6" y="496.0" width="42.9" height="3.0" fill="#218e84"/><rect x="1126.6" y="493.0" width="42.9" height="3.0" fill="#26a57b"/><rect x="1126.6" y="490.0" width="42.9" height="3.0" fill="#2aa779"/><rect x="1126.6" y="487.0" width="42.9" height="3.0" fill="#249d7f"/><rect x="1126.6" y="484.0" width="42.9" height="3.0" fill="#2b5877"/><rect x="1126.6" y="481.0" width="42.9" height="3.0" fill="#285f77"/><rect x="1126.6" y="478.0" width="42.9" height="3.0" fill="#2c5676"/><rect x="1126.6" y="475.0" width="42.9" height="3.0" fill="#295c77"/><rect x="1126.6" y="469.0" width="42.9" height="3.0" fill="#322955"/><rect x="1126.6" y="466.0" width="42.9" height="3.0" fill="#322855"/><rect x="1126.6" y="463.0" width="42.9" height="3.0" fill="#322955"/><rect x="1126.6" y="460.0" width="42.9" height="3.0" fill="#303159"/><rect x="1126.6" y="457.0" width="42.9" height="3.0" fill="#2a415e"/><rect x="1126.6" y="454.0" width="42.9" height="3.0" fill="#322c57"/><rect x="1126.6" y="451.0" width="42.9" height="3.0" fill="#2d2e51"/><rect x="1126.6" y="433.0" width="42.9" height="3.0" fill="#2e2b50"/><rect x="1126.6" y="412.0" width="42.9" height="3.0" fill="#30244d"/><rect x="1126.6" y="388.0" width="42.9" height="3.0" fill="#30244d"/><rect x="1169.5" y="520.0" width="42.9" height="3.0" fill="#f1dc24"/><rect x="1169.5" y="517.0" width="42.9" height="3.0" fill="#f1dc24"/><rect x="1169.5" y="514.0" width="42.9" height="3.0" fill="#70bd4b"/><rect x="1169.5" y="511.0" width="42.9" height="3.0" fill="#52ae58"/><rect x="1169.5" y="508.0" width="42.9" height="3.0" fill="#239780"/><rect x="1169.5" y="505.0" width="42.9" height="3.0" fill="#2faa76"/><rect x="1169.5" y="502.0" width="42.9" height="3.0" fill="#25a37c"/><rect x="1169.5" y="499.0" width="42.9" height="3.0" fill="#2faa75"/><rect x="1169.5" y="496.0" width="42.9" height="3.0" fill="#229681"/><rect x="1169.5" y="493.0" width="42.9" height="3.0" fill="#229681"/><rect x="1169.5" y="490.0" width="42.9" height="3.0" fill="#24a17e"/><rect x="1169.5" y="487.0" width="42.9" height="3.0" fill="#2faa76"/><rect x="1169.5" y="484.0" width="42.9" height="3.0" fill="#2ca878"/><rect x="1169.5" y="481.0" width="42.9" height="3.0" fill="#236c77"/><rect x="1169.5" y="478.0" width="42.9" height="3.0" fill="#2a5b77"/><rect x="1169.5" y="475.0" width="42.9" height="3.0" fill="#246a77"/><rect x="1169.5" y="472.0" width="42.9" height="3.0" fill="#236d77"/><rect x="1169.5" y="469.0" width="42.9" height="3.0" fill="#332251"/><rect x="1169.5" y="466.0" width="42.9" height="3.0" fill="#2c3b5e"/><rect x="1169.5" y="460.0" width="42.9" height="3.0" fill="#332855"/><rect x="1169.5" y="457.0" width="42.9" height="3.0" fill="#2e375c"/><rect x="1169.5" y="454.0" width="42.9" height="3.0" fill="#332754"/><rect x="1169.5" y="451.0" width="42.9" height="3.0" fill="#2c3a5e"/><rect x="1169.5" y="448.0" width="42.9" height="3.0" fill="#2d2d51"/><rect x="1169.5" y="433.0" width="42.9" height="3.0" fill="#2c3153"/><rect x="1169.5" y="430.0" width="42.9" height="3.0" fill="#30254d"/><rect x="1169.5" y="427.0" width="42.9" height="3.0" fill="#2b3454"/><rect x="1169.5" y="421.0" width="42.9" height="3.0" fill="#2d2f52"/><rect x="1169.5" y="415.0" width="42.9" height="3.0" fill="#2e2b50"/><rect x="1169.5" y="403.0" width="42.9" height="3.0" fill="#30224b"/><rect x="1169.5" y="298.0" width="42.9" height="3.0" fill="#30244d"/><rect x="1212.4" y="520.0" width="42.9" height="3.0" fill="#f1dc24"/><rect x="1212.4" y="517.0" width="42.9" height="3.0" fill="#8bc43a"/><rect x="1212.4" y="514.0" width="42.9" height="3.0" fill="#52ae58"/><rect x="1212.4" y="511.0" width="42.9" height="3.0" fill="#229681"/><rect x="1212.4" y="508.0" width="42.9" height="3.0" fill="#239880"/><rect x="1212.4" y="505.0" width="42.9" height="3.0" fill="#249d7f"/><rect x="1212.4" y="502.0" width="42.9" height="3.0" fill="#30aa75"/><rect x="1212.4" y="499.0" width="42.9" height="3.0" fill="#35ad72"/><rect x="1212.4" y="496.0" width="42.9" height="3.0" fill="#2faa75"/><rect x="1212.4" y="493.0" width="42.9" height="3.0" fill="#229482"/><rect x="1212.4" y="490.0" width="42.9" height="3.0" fill="#229781"/><rect x="1212.4" y="487.0" width="42.9" height="3.0" fill="#2b5977"/><rect x="1212.4" y="484.0" width="42.9" height="3.0" fill="#227077"/><rect x="1212.4" y="481.0" width="42.9" height="3.0" fill="#236d77"/><rect x="1212.4" y="478.0" width="42.9" height="3.0" fill="#2a5c77"/><rect x="1212.4" y="475.0" width="42.9" height="3.0" fill="#332150"/><rect x="1212.4" y="469.0" width="42.9" height="3.0" fill="#33204f"/><rect x="1212.4" y="466.0" width="42.9" height="3.0" fill="#322b57"/><rect x="1212.4" y="463.0" width="42.9" height="3.0" fill="#331f4e"/><rect x="1212.4" y="460.0" width="42.9" height="3.0" fill="#2f3259"/><rect x="1212.4" y="451.0" width="42.9" height="3.0" fill="#30234c"/><rect x="1212.4" y="445.0" width="42.9" height="3.0" fill="#30254d"/><rect x="1212.4" y="439.0" width="42.9" height="3.0" fill="#2d2e51"/><rect x="1212.4" y="397.0" width="42.9" height="3.0" fill="#2e2c51"/><rect x="1212.4" y="358.0" width="42.9" height="3.0" fill="#2c3153"/><rect x="1212.4" y="352.0" width="42.9" height="3.0" fill="#30244d"/><rect x="1255.3" y="520.0" width="42.9" height="3.0" fill="#f1dc24"/><rect x="1255.3" y="517.0" width="42.9" height="3.0" fill="#8bc43a"/><rect x="1255.3" y="514.0" width="42.9" height="3.0" fill="#249472"/><rect x="1255.3" y="511.0" width="42.9" height="3.0" fill="#219283"/><rect x="1255.3" y="508.0" width="42.9" height="3.0" fill="#28a67a"/><rect x="1255.3" y="505.0" width="42.9" height="3.0" fill="#25a17d"/><rect x="1255.3" y="502.0" width="42.9" height="3.0" fill="#2faa76"/><rect x="1255.3" y="499.0" width="42.9" height="3.0" fill="#218e84"/><rect x="1255.3" y="496.0" width="42.9" height="3.0" fill="#229681"/><rect x="1255.3" y="493.0" width="42.9" height="3.0" fill="#229681"/><rect x="1255.3" y="490.0" width="42.9" height="3.0" fill="#31ab74"/><rect x="1255.3" y="487.0" width="42.9" height="3.0" fill="#229581"/><rect x="1255.3" y="484.0" width="42.9" height="3.0" fill="#276077"/><rect x="1255.3" y="481.0" width="42.9" height="3.0" fill="#2a5c77"/><rect x="1255.3" y="478.0" width="42.9" height="3.0" fill="#266577"/><rect x="1255.3" y="475.0" width="42.9" height="3.0" fill="#266477"/><rect x="1255.3" y="472.0" width="42.9" height="3.0" fill="#2f3259"/><rect x="1255.3" y="469.0" width="42.9" height="3.0" fill="#303058"/><rect x="1255.3" y="466.0" width="42.9" height="3.0" fill="#332453"/><rect x="1255.3" y="463.0" width="42.9" height="3.0" fill="#332453"/><rect x="1255.3" y="460.0" width="42.9" height="3.0" fill="#312d58"/><rect x="1255.3" y="457.0" width="42.9" height="3.0" fill="#332855"/><rect x="1255.3" y="454.0" width="42.9" height="3.0" fill="#2f335a"/><rect x="1255.3" y="448.0" width="42.9" height="3.0" fill="#2b3354"/><rect x="1255.3" y="439.0" width="42.9" height="3.0" fill="#2d2d51"/><rect x="1255.3" y="436.0" width="42.9" height="3.0" fill="#30264e"/><rect x="1255.3" y="433.0" width="42.9" height="3.0" fill="#2d2f52"/><rect x="1255.3" y="430.0" width="42.9" height="3.0" fill="#2c3153"/><rect x="1255.3" y="409.0" width="42.9" height="3.0" fill="#2e2c50"/><rect x="1255.3" y="403.0" width="42.9" height="3.0" fill="#2b3354"/><rect x="1255.3" y="316.0" width="42.9" height="3.0" fill="#2c3353"/><rect x="1298.2" y="520.0" width="42.9" height="3.0" fill="#f1dc24"/><rect x="1298.2" y="517.0" width="42.9" height="3.0" fill="#9bc830"/><rect x="1298.2" y="514.0" width="42.9" height="3.0" fill="#3ea363"/><rect x="1298.2" y="511.0" width="42.9" height="3.0" fill="#2ca878"/><rect x="1298.2" y="508.0" width="42.9" height="3.0" fill="#219183"/><rect x="1298.2" y="505.0" width="42.9" height="3.0" fill="#25a37c"/><rect x="1298.2" y="502.0" width="42.9" height="3.0" fill="#36ad72"/><rect x="1298.2" y="499.0" width="42.9" height="3.0" fill="#239b7f"/><rect x="1298.2" y="496.0" width="42.9" height="3.0" fill="#229781"/><rect x="1298.2" y="493.0" width="42.9" height="3.0" fill="#249e7f"/><rect x="1298.2" y="490.0" width="42.9" height="3.0" fill="#229382"/><rect x="1298.2" y="487.0" width="42.9" height="3.0" fill="#25a17d"/><rect x="1298.2" y="484.0" width="42.9" height="3.0" fill="#227077"/><rect x="1298.2" y="481.0" width="42.9" height="3.0" fill="#2d5476"/><rect x="1298.2" y="478.0" width="42.9" height="3.0" fill="#246977"/><rect x="1298.2" y="475.0" width="42.9" height="3.0" fill="#256777"/><rect x="1298.2" y="472.0" width="42.9" height="3.0" fill="#322a56"/><rect x="1298.2" y="469.0" width="42.9" height="3.0" fill="#2f345b"/><rect x="1298.2" y="466.0" width="42.9" height="3.0" fill="#332654"/><rect x="1298.2" y="463.0" width="42.9" height="3.0" fill="#2f335a"/><rect x="1298.2" y="460.0" width="42.9" height="3.0" fill="#2e365c"/><rect x="1298.2" y="457.0" width="42.9" height="3.0" fill="#2a415e"/><rect x="1298.2" y="454.0" width="42.9" height="3.0" fill="#312e58"/><rect x="1298.2" y="448.0" width="42.9" height="3.0" fill="#30224b"/><rect x="1298.2" y="439.0" width="42.9" height="3.0" fill="#2a3755"/><rect x="1298.2" y="430.0" width="42.9" height="3.0" fill="#2e2a4f"/><rect x="1298.2" y="427.0" width="42.9" height="3.0" fill="#2f274e"/><rect x="1298.2" y="418.0" width="42.9" height="3.0" fill="#2e2b50"/><rect x="1341.1" y="520.0" width="42.9" height="3.0" fill="#f1dc24"/><rect x="1341.1" y="517.0" width="42.9" height="3.0" fill="#9bc830"/><rect x="1341.1" y="514.0" width="42.9" height="3.0" fill="#3ea363"/><rect x="1341.1" y="511.0" width="42.9" height="3.0" fill="#239a7f"/><rect x="1341.1" y="508.0" width="42.9" height="3.0" fill="#28a67a"/><rect x="1341.1" y="505.0" width="42.9" height="3.0" fill="#2ea977"/><rect x="1341.1" y="502.0" width="42.9" height="3.0" fill="#229681"/><rect x="1341.1" y="499.0" width="42.9" height="3.0" fill="#25a37c"/><rect x="1341.1" y="496.0" width="42.9" height="3.0" fill="#239980"/><rect x="1341.1" y="493.0" width="42.9" height="3.0" fill="#25a27d"/><rect x="1341.1" y="490.0" width="42.9" height="3.0" fill="#229581"/><rect x="1341.1" y="487.0" width="42.9" height="3.0" fill="#239980"/><rect x="1341.1" y="484.0" width="42.9" height="3.0" fill="#2b5877"/><rect x="1341.1" y="481.0" width="42.9" height="3.0" fill="#236d77"/><rect x="1341.1" y="478.0" width="42.9" height="3.0" fill="#256877"/><rect x="1341.1" y="475.0" width="42.9" height="3.0" fill="#332050"/><rect x="1341.1" y="472.0" width="42.9" height="3.0" fill="#332654"/><rect x="1341.1" y="469.0" width="42.9" height="3.0" fill="#312d57"/><rect x="1341.1" y="466.0" width="42.9" height="3.0" fill="#322a56"/><rect x="1341.1" y="463.0" width="42.9" height="3.0" fill="#332554"/><rect x="1341.1" y="460.0" width="42.9" height="3.0" fill="#2f335a"/><rect x="1341.1" y="457.0" width="42.9" height="3.0" fill="#322855"/><rect x="1341.1" y="454.0" width="42.9" height="3.0" fill="#2b3454"/><rect x="1341.1" y="448.0" width="42.9" height="3.0" fill="#2a3755"/><rect x="1341.1" y="442.0" width="42.9" height="3.0" fill="#2c3253"/><rect x="1341.1" y="439.0" width="42.9" height="3.0" fill="#30264e"/><rect x="1341.1" y="436.0" width="42.9" height="3.0" fill="#2a3755"/><rect x="1341.1" y="409.0" width="42.9" height="3.0" fill="#2e2c51"/><rect x="1384.0" y="520.0" width="42.9" height="3.0" fill="#f1dc24"/><rect x="1384.0" y="517.0" width="42.9" height="3.0" fill="#f1dc24"/><rect x="1384.0" y="514.0" width="42.9" height="3.0" fill="#8bc43a"/><rect x="1384.0" y="511.0" width="42.9" height="3.0" fill="#249472"/><rect x="1384.0" y="508.0" width="42.9" height="3.0" fill="#239880"/><rect x="1384.0" y="505.0" width="42.9" height="3.0" fill="#249f7e"/><rect x="1384.0" y="502.0" width="42.9" height="3.0" fill="#2ca878"/><rect x="1384.0" y="499.0" width="42.9" height="3.0" fill="#218e84"/><rect x="1384.0" y="496.0" width="42.9" height="3.0" fill="#25a17d"/><rect x="1384.0" y="493.0" width="42.9" height="3.0" fill="#25a47c"/><rect x="1384.0" y="490.0" width="42.9" height="3.0" fill="#33ac74"/><rect x="1384.0" y="487.0" width="42.9" height="3.0" fill="#249e7f"/><rect x="1384.0" y="484.0" width="42.9" height="3.0" fill="#229781"/><rect x="1384.0" y="481.0" width="42.9" height="3.0" fill="#2c5576"/><rect x="1384.0" y="478.0" width="42.9" height="3.0" fill="#2b5877"/><rect x="1384.0" y="475.0" width="42.9" height="3.0" fill="#236f77"/><rect x="1384.0" y="472.0" width="42.9" height="3.0" fill="#2d5476"/><rect x="1384.0" y="469.0" width="42.9" height="3.0" fill="#332654"/><rect x="1384.0" y="466.0" width="42.9" height="3.0" fill="#331f4e"/><rect x="1384.0" y="463.0" width="42.9" height="3.0" fill="#2b3d5e"/><rect x="1384.0" y="460.0" width="42.9" height="3.0" fill="#312e58"/><rect x="1384.0" y="457.0" width="42.9" height="3.0" fill="#2e375c"/><rect x="1384.0" y="454.0" width="42.9" height="3.0" fill="#312e58"/><rect x="1384.0" y="451.0" width="42.9" height="3.0" fill="#312f58"/><rect x="1384.0" y="445.0" width="42.9" height="3.0" fill="#30244d"/><rect x="1384.0" y="439.0" width="42.9" height="3.0" fill="#2f2a4f"/><rect x="1384.0" y="436.0" width="42.9" height="3.0" fill="#30214b"/><rect x="1384.0" y="406.0" width="42.9" height="3.0" fill="#2a3655"/><rect x="1384.0" y="400.0" width="42.9" height="3.0" fill="#2e2c51"/><rect x="1384.0" y="388.0" width="42.9" height="3.0" fill="#2e2b50"/><rect x="1384.0" y="328.0" width="42.9" height="3.0" fill="#2f284f"/><rect x="1426.9" y="520.0" width="42.9" height="3.0" fill="#f1dc24"/><rect x="1426.9" y="517.0" width="42.9" height="3.0" fill="#70bd4b"/><rect x="1426.9" y="514.0" width="42.9" height="3.0" fill="#52ae58"/><rect x="1426.9" y="511.0" width="42.9" height="3.0" fill="#229581"/><rect x="1426.9" y="508.0" width="42.9" height="3.0" fill="#27a57a"/><rect x="1426.9" y="505.0" width="42.9" height="3.0" fill="#239c7f"/><rect x="1426.9" y="502.0" width="42.9" height="3.0" fill="#36ad72"/><rect x="1426.9" y="499.0" width="42.9" height="3.0" fill="#249d7f"/><rect x="1426.9" y="496.0" width="42.9" height="3.0" fill="#2ca878"/><rect x="1426.9" y="493.0" width="42.9" height="3.0" fill="#25a17d"/><rect x="1426.9" y="490.0" width="42.9" height="3.0" fill="#25a17d"/><rect x="1426.9" y="487.0" width="42.9" height="3.0" fill="#34ac73"/><rect x="1426.9" y="484.0" width="42.9" height="3.0" fill="#276077"/><rect x="1426.9" y="481.0" width="42.9" height="3.0" fill="#236f77"/><rect x="1426.9" y="478.0" width="42.9" height="3.0" fill="#295d77"/><rect x="1426.9" y="475.0" width="42.9" height="3.0" fill="#295c77"/><rect x="1426.9" y="472.0" width="42.9" height="3.0" fill="#2e365b"/><rect x="1426.9" y="469.0" width="42.9" height="3.0" fill="#2c3c5e"/><rect x="1426.9" y="466.0" width="42.9" height="3.0" fill="#322b57"/><rect x="1426.9" y="463.0" width="42.9" height="3.0" fill="#2a3f5e"/><rect x="1426.9" y="460.0" width="42.9" height="3.0" fill="#322b57"/><rect x="1426.9" y="457.0" width="42.9" height="3.0" fill="#332755"/><rect x="1426.9" y="454.0" width="42.9" height="3.0" fill="#2b3e5e"/><rect x="1426.9" y="448.0" width="42.9" height="3.0" fill="#30234c"/><rect x="1426.9" y="439.0" width="42.9" height="3.0" fill="#2c3153"/><rect x="1426.9" y="433.0" width="42.9" height="3.0" fill="#293a55"/><rect x="1426.9" y="427.0" width="42.9" height="3.0" fill="#2c3152"/><rect x="1426.9" y="418.0" width="42.9" height="3.0" fill="#30254d"/><rect x="1426.9" y="319.0" width="42.9" height="3.0" fill="#2d2f52"/><rect x="1426.9" y="307.0" width="42.9" height="3.0" fill="#2c3253"/><rect x="1469.8" y="520.0" width="42.9" height="3.0" fill="#f1dc24"/><rect x="1469.8" y="517.0" width="42.9" height="3.0" fill="#8bc43a"/><rect x="1469.8" y="514.0" width="42.9" height="3.0" fill="#3ea363"/><rect x="1469.8" y="511.0" width="42.9" height="3.0" fill="#25a37c"/><rect x="1469.8" y="508.0" width="42.9" height="3.0" fill="#219283"/><rect x="1469.8" y="505.0" width="42.9" height="3.0" fill="#24a07e"/><rect x="1469.8" y="502.0" width="42.9" height="3.0" fill="#25a17d"/><rect x="1469.8" y="499.0" width="42.9" height="3.0" fill="#249d7f"/><rect x="1469.8" y="496.0" width="42.9" height="3.0" fill="#25a27d"/><rect x="1469.8" y="493.0" width="42.9" height="3.0" fill="#249f7e"/><rect x="1469.8" y="490.0" width="42.9" height="3.0" fill="#24a07e"/><rect x="1469.8" y="487.0" width="42.9" height="3.0" fill="#249f7e"/><rect x="1469.8" y="484.0" width="42.9" height="3.0" fill="#2a5a77"/><rect x="1469.8" y="481.0" width="42.9" height="3.0" fill="#2c5676"/><rect x="1469.8" y="478.0" width="42.9" height="3.0" fill="#226f77"/><rect x="1469.8" y="475.0" width="42.9" height="3.0" fill="#266577"/><rect x="1469.8" y="469.0" width="42.9" height="3.0" fill="#2e365b"/><rect x="1469.8" y="466.0" width="42.9" height="3.0" fill="#2f335a"/><rect x="1469.8" y="463.0" width="42.9" height="3.0" fill="#2c3b5e"/><rect x="1469.8" y="460.0" width="42.9" height="3.0" fill="#2e355b"/><rect x="1469.8" y="457.0" width="42.9" height="3.0" fill="#2b3e5e"/><rect x="1469.8" y="454.0" width="42.9" height="3.0" fill="#2b3d5e"/><rect x="1469.8" y="451.0" width="42.9" height="3.0" fill="#2d2f52"/><rect x="1469.8" y="445.0" width="42.9" height="3.0" fill="#293955"/><rect x="1469.8" y="439.0" width="42.9" height="3.0" fill="#2e2b50"/><rect x="1469.8" y="436.0" width="42.9" height="3.0" fill="#2a3755"/><rect x="1469.8" y="433.0" width="42.9" height="3.0" fill="#2b3354"/><rect x="1469.8" y="427.0" width="42.9" height="3.0" fill="#2b3454"/><rect x="1469.8" y="415.0" width="42.9" height="3.0" fill="#30234c"/><rect x="1469.8" y="388.0" width="42.9" height="3.0" fill="#30224b"/><rect x="1469.8" y="313.0" width="42.9" height="3.0" fill="#2e2b50"/><rect x="1512.7" y="520.0" width="42.9" height="3.0" fill="#f1dc24"/><rect x="1512.7" y="517.0" width="42.9" height="3.0" fill="#70bd4b"/><rect x="1512.7" y="514.0" width="42.9" height="3.0" fill="#3ea363"/><rect x="1512.7" y="511.0" width="42.9" height="3.0" fill="#249f7e"/><rect x="1512.7" y="508.0" width="42.9" height="3.0" fill="#219283"/><rect x="1512.7" y="505.0" width="42.9" height="3.0" fill="#2eaa76"/><rect x="1512.7" y="502.0" width="42.9" height="3.0" fill="#2faa75"/><rect x="1512.7" y="499.0" width="42.9" height="3.0" fill="#229581"/><rect x="1512.7" y="496.0" width="42.9" height="3.0" fill="#35ad72"/><rect x="1512.7" y="493.0" width="42.9" height="3.0" fill="#25a47c"/><rect x="1512.7" y="490.0" width="42.9" height="3.0" fill="#2ca878"/><rect x="1512.7" y="487.0" width="42.9" height="3.0" fill="#219083"/><rect x="1512.7" y="484.0" width="42.9" height="3.0" fill="#2d5476"/><rect x="1512.7" y="481.0" width="42.9" height="3.0" fill="#285f77"/><rect x="1512.7" y="478.0" width="42.9" height="3.0" fill="#256777"/><rect x="1512.7" y="475.0" width="42.9" height="3.0" fill="#256677"/><rect x="1512.7" y="472.0" width="42.9" height="3.0" fill="#2f345b"/><rect x="1512.7" y="469.0" width="42.9" height="3.0" fill="#2e365c"/><rect x="1512.7" y="466.0" width="42.9" height="3.0" fill="#322b57"/><rect x="1512.7" y="463.0" width="42.9" height="3.0" fill="#312d57"/><rect x="1512.7" y="460.0" width="42.9" height="3.0" fill="#2c3b5e"/><rect x="1512.7" y="457.0" width="42.9" height="3.0" fill="#312c57"/><rect x="1512.7" y="454.0" width="42.9" height="3.0" fill="#283c56"/><rect x="1512.7" y="442.0" width="42.9" height="3.0" fill="#2a3655"/><rect x="1512.7" y="367.0" width="42.9" height="3.0" fill="#2e2c50"/><rect x="1512.7" y="274.0" width="42.9" height="3.0" fill="#2c2042"/><rect x="1555.6" y="520.0" width="42.9" height="3.0" fill="#f1dc24"/><rect x="1555.6" y="517.0" width="42.9" height="3.0" fill="#9bc830"/><rect x="1555.6" y="514.0" width="42.9" height="3.0" fill="#52ae58"/><rect x="1555.6" y="511.0" width="42.9" height="3.0" fill="#219083"/><rect x="1555.6" y="508.0" width="42.9" height="3.0" fill="#24a07e"/><rect x="1555.6" y="505.0" width="42.9" height="3.0" fill="#25a37c"/><rect x="1555.6" y="502.0" width="42.9" height="3.0" fill="#249d7f"/><rect x="1555.6" y="499.0" width="42.9" height="3.0" fill="#25a37c"/><rect x="1555.6" y="496.0" width="42.9" height="3.0" fill="#24a17e"/><rect x="1555.6" y="493.0" width="42.9" height="3.0" fill="#2ba778"/><rect x="1555.6" y="490.0" width="42.9" height="3.0" fill="#219283"/><rect x="1555.6" y="487.0" width="42.9" height="3.0" fill="#249e7e"/><rect x="1555.6" y="484.0" width="42.9" height="3.0" fill="#227077"/><rect x="1555.6" y="481.0" width="42.9" height="3.0" fill="#2a5b77"/><rect x="1555.6" y="478.0" width="42.9" height="3.0" fill="#2a5b77"/><rect x="1555.6" y="475.0" width="42.9" height="3.0" fill="#276377"/><rect x="1555.6" y="472.0" width="42.9" height="3.0" fill="#312e58"/><rect x="1555.6" y="469.0" width="42.9" height="3.0" fill="#322a56"/><rect x="1555.6" y="466.0" width="42.9" height="3.0" fill="#2c3b5e"/><rect x="1555.6" y="463.0" width="42.9" height="3.0" fill="#322855"/><rect x="1555.6" y="460.0" width="42.9" height="3.0" fill="#332150"/><rect x="1555.6" y="457.0" width="42.9" height="3.0" fill="#312c57"/><rect x="1555.6" y="454.0" width="42.9" height="3.0" fill="#303059"/><rect x="1555.6" y="445.0" width="42.9" height="3.0" fill="#2c3052"/><rect x="1555.6" y="436.0" width="42.9" height="3.0" fill="#2f294f"/><rect x="1555.6" y="433.0" width="42.9" height="3.0" fill="#2a3755"/><rect x="1555.6" y="421.0" width="42.9" height="3.0" fill="#2a3655"/><rect x="1598.5" y="520.0" width="42.9" height="3.0" fill="#f1dc24"/><rect x="1598.5" y="517.0" width="42.9" height="3.0" fill="#f1dc24"/><rect x="1598.5" y="514.0" width="42.9" height="3.0" fill="#9bc830"/><rect x="1598.5" y="511.0" width="42.9" height="3.0" fill="#249472"/><rect x="1598.5" y="508.0" width="42.9" height="3.0" fill="#25a27d"/><rect x="1598.5" y="505.0" width="42.9" height="3.0" fill="#24a07e"/><rect x="1598.5" y="502.0" width="42.9" height="3.0" fill="#239a7f"/><rect x="1598.5" y="499.0" width="42.9" height="3.0" fill="#229282"/><rect x="1598.5" y="496.0" width="42.9" height="3.0" fill="#32ac74"/><rect x="1598.5" y="493.0" width="42.9" height="3.0" fill="#2da877"/><rect x="1598.5" y="490.0" width="42.9" height="3.0" fill="#249d7f"/><rect x="1598.5" y="487.0" width="42.9" height="3.0" fill="#219083"/><rect x="1598.5" y="484.0" width="42.9" height="3.0" fill="#219183"/><rect x="1598.5" y="481.0" width="42.9" height="3.0" fill="#276277"/><rect x="1598.5" y="478.0" width="42.9" height="3.0" fill="#276077"/><rect x="1598.5" y="475.0" width="42.9" height="3.0" fill="#276277"/><rect x="1598.5" y="472.0" width="42.9" height="3.0" fill="#285d77"/><rect x="1598.5" y="469.0" width="42.9" height="3.0" fill="#312d58"/><rect x="1598.5" y="466.0" width="42.9" height="3.0" fill="#332453"/><rect x="1598.5" y="463.0" width="42.9" height="3.0" fill="#2b3d5e"/><rect x="1598.5" y="460.0" width="42.9" height="3.0" fill="#2b3e5e"/><rect x="1598.5" y="457.0" width="42.9" height="3.0" fill="#2a3f5e"/><rect x="1598.5" y="454.0" width="42.9" height="3.0" fill="#2c3b5e"/><rect x="1598.5" y="451.0" width="42.9" height="3.0" fill="#2e385c"/><rect x="1598.5" y="448.0" width="42.9" height="3.0" fill="#2a3655"/><rect x="1598.5" y="445.0" width="42.9" height="3.0" fill="#2f274e"/><rect x="1598.5" y="427.0" width="42.9" height="3.0" fill="#30214a"/><rect x="1598.5" y="295.0" width="42.9" height="3.0" fill="#2c3052"/><rect x="1598.5" y="292.0" width="42.9" height="3.0" fill="#2e2a50"/><rect x="1641.4" y="520.0" width="42.9" height="3.0" fill="#f1dc24"/><rect x="1641.4" y="517.0" width="42.9" height="3.0" fill="#f1dc24"/><rect x="1641.4" y="514.0" width="42.9" height="3.0" fill="#9bc830"/><rect x="1641.4" y="511.0" width="42.9" height="3.0" fill="#52ae58"/><rect x="1641.4" y="508.0" width="42.9" height="3.0" fill="#239880"/><rect x="1641.4" y="505.0" width="42.9" height="3.0" fill="#229382"/><rect x="1641.4" y="502.0" width="42.9" height="3.0" fill="#2ba778"/><rect x="1641.4" y="499.0" width="42.9" height="3.0" fill="#34ac73"/><rect x="1641.4" y="496.0" width="42.9" height="3.0" fill="#239880"/><rect x="1641.4" y="493.0" width="42.9" height="3.0" fill="#29a679"/><rect x="1641.4" y="490.0" width="42.9" height="3.0" fill="#2ea977"/><rect x="1641.4" y="487.0" width="42.9" height="3.0" fill="#239a7f"/><rect x="1641.4" y="484.0" width="42.9" height="3.0" fill="#2da977"/><rect x="1641.4" y="481.0" width="42.9" height="3.0" fill="#2a5a77"/><rect x="1641.4" y="478.0" width="42.9" height="3.0" fill="#266677"/><rect x="1641.4" y="475.0" width="42.9" height="3.0" fill="#256677"/><rect x="1641.4" y="472.0" width="42.9" height="3.0" fill="#256877"/><rect x="1641.4" y="469.0" width="42.9" height="3.0" fill="#2e375c"/><rect x="1641.4" y="466.0" width="42.9" height="3.0" fill="#2c3a5e"/><rect x="1641.4" y="463.0" width="42.9" height="3.0" fill="#312e58"/><rect x="1641.4" y="460.0" width="42.9" height="3.0" fill="#322b57"/><rect x="1641.4" y="457.0" width="42.9" height="3.0" fill="#322956"/><rect x="1641.4" y="454.0" width="42.9" height="3.0" fill="#2d395c"/><rect x="1641.4" y="451.0" width="42.9" height="3.0" fill="#2a3f5e"/><rect x="1641.4" y="439.0" width="42.9" height="3.0" fill="#293955"/><rect x="1641.4" y="436.0" width="42.9" height="3.0" fill="#2e2b50"/><rect x="1641.4" y="433.0" width="42.9" height="3.0" fill="#2d2f52"/><rect x="1641.4" y="421.0" width="42.9" height="3.0" fill="#2f274e"/><rect x="1641.4" y="406.0" width="42.9" height="3.0" fill="#2b3454"/><rect x="1641.4" y="316.0" width="42.9" height="3.0" fill="#2f294f"/><rect x="1684.3" y="520.0" width="42.9" height="3.0" fill="#f1dc24"/><rect x="1684.3" y="517.0" width="42.9" height="3.0" fill="#8bc43a"/><rect x="1684.3" y="514.0" width="42.9" height="3.0" fill="#52ae58"/><rect x="1684.3" y="511.0" width="42.9" height="3.0" fill="#25a27c"/><rect x="1684.3" y="508.0" width="42.9" height="3.0" fill="#239a7f"/><rect x="1684.3" y="505.0" width="42.9" height="3.0" fill="#229681"/><rect x="1684.3" y="502.0" width="42.9" height="3.0" fill="#29a679"/><rect x="1684.3" y="499.0" width="42.9" height="3.0" fill="#219283"/><rect x="1684.3" y="496.0" width="42.9" height="3.0" fill="#27a57b"/><rect x="1684.3" y="493.0" width="42.9" height="3.0" fill="#2faa75"/><rect x="1684.3" y="490.0" width="42.9" height="3.0" fill="#26a57b"/><rect x="1684.3" y="487.0" width="42.9" height="3.0" fill="#266577"/><rect x="1684.3" y="484.0" width="42.9" height="3.0" fill="#2b5777"/><rect x="1684.3" y="481.0" width="42.9" height="3.0" fill="#256777"/><rect x="1684.3" y="478.0" width="42.9" height="3.0" fill="#2a5b77"/><rect x="1684.3" y="475.0" width="42.9" height="3.0" fill="#2e345b"/><rect x="1684.3" y="472.0" width="42.9" height="3.0" fill="#322955"/><rect x="1684.3" y="469.0" width="42.9" height="3.0" fill="#332755"/><rect x="1684.3" y="463.0" width="42.9" height="3.0" fill="#2c3b5e"/><rect x="1684.3" y="460.0" width="42.9" height="3.0" fill="#2e385c"/><rect x="1684.3" y="457.0" width="42.9" height="3.0" fill="#2b3d5e"/><rect x="1684.3" y="451.0" width="42.9" height="3.0" fill="#30234c"/><rect x="1684.3" y="439.0" width="42.9" height="3.0" fill="#30224b"/><rect x="1684.3" y="436.0" width="42.9" height="3.0" fill="#2c3253"/><rect x="1684.3" y="415.0" width="42.9" height="3.0" fill="#2e2c50"/><rect x="1684.3" y="253.0" width="42.9" height="3.0" fill="#2c2042"/><rect x="1727.2" y="520.0" width="42.9" height="3.0" fill="#f1dc24"/><rect x="1727.2" y="517.0" width="42.9" height="3.0" fill="#f1dc24"/><rect x="1727.2" y="514.0" width="42.9" height="3.0" fill="#9bc830"/><rect x="1727.2" y="511.0" width="42.9" height="3.0" fill="#249472"/><rect x="1727.2" y="508.0" width="42.9" height="3.0" fill="#218f84"/><rect x="1727.2" y="505.0" width="42.9" height="3.0" fill="#25a17d"/><rect x="1727.2" y="502.0" width="42.9" height="3.0" fill="#249d7f"/><rect x="1727.2" y="499.0" width="42.9" height="3.0" fill="#229482"/><rect x="1727.2" y="496.0" width="42.9" height="3.0" fill="#30aa75"/><rect x="1727.2" y="493.0" width="42.9" height="3.0" fill="#219083"/><rect x="1727.2" y="490.0" width="42.9" height="3.0" fill="#219183"/><rect x="1727.2" y="487.0" width="42.9" height="3.0" fill="#249c7f"/><rect x="1727.2" y="484.0" width="42.9" height="3.0" fill="#25a17d"/><rect x="1727.2" y="481.0" width="42.9" height="3.0" fill="#276077"/><rect x="1727.2" y="478.0" width="42.9" height="3.0" fill="#256877"/><rect x="1727.2" y="475.0" width="42.9" height="3.0" fill="#276077"/><rect x="1727.2" y="472.0" width="42.9" height="3.0" fill="#256677"/><rect x="1727.2" y="469.0" width="42.9" height="3.0" fill="#332855"/><rect x="1727.2" y="466.0" width="42.9" height="3.0" fill="#2e385c"/><rect x="1727.2" y="460.0" width="42.9" height="3.0" fill="#2f345b"/><rect x="1727.2" y="454.0" width="42.9" height="3.0" fill="#332755"/><rect x="1727.2" y="451.0" width="42.9" height="3.0" fill="#2c3b5e"/><rect x="1727.2" y="445.0" width="42.9" height="3.0" fill="#302049"/><rect x="1727.2" y="439.0" width="42.9" height="3.0" fill="#302049"/><rect x="1727.2" y="427.0" width="42.9" height="3.0" fill="#293a55"/><rect x="1727.2" y="424.0" width="42.9" height="3.0" fill="#30244d"/><rect x="1727.2" y="421.0" width="42.9" height="3.0" fill="#2a3655"/><rect x="1727.2" y="391.0" width="42.9" height="3.0" fill="#30244d"/><rect x="1727.2" y="385.0" width="42.9" height="3.0" fill="#2e2b50"/><rect x="1727.2" y="382.0" width="42.9" height="3.0" fill="#2d2f52"/><rect x="1727.2" y="346.0" width="42.9" height="3.0" fill="#2d3052"/><rect x="1727.2" y="322.0" width="42.9" height="3.0" fill="#2d2f52"/><rect x="1770.1" y="520.0" width="42.9" height="3.0" fill="#f1dc24"/><rect x="1770.1" y="517.0" width="42.9" height="3.0" fill="#f1dc24"/><rect x="1770.1" y="514.0" width="42.9" height="3.0" fill="#8bc43a"/><rect x="1770.1" y="511.0" width="42.9" height="3.0" fill="#249472"/><rect x="1770.1" y="508.0" width="42.9" height="3.0" fill="#25a27c"/><rect x="1770.1" y="505.0" width="42.9" height="3.0" fill="#31ab75"/><rect x="1770.1" y="502.0" width="42.9" height="3.0" fill="#249e7e"/><rect x="1770.1" y="499.0" width="42.9" height="3.0" fill="#25a17d"/><rect x="1770.1" y="496.0" width="42.9" height="3.0" fill="#229482"/><rect x="1770.1" y="493.0" width="42.9" height="3.0" fill="#2faa76"/><rect x="1770.1" y="490.0" width="42.9" height="3.0" fill="#239b7f"/><rect x="1770.1" y="487.0" width="42.9" height="3.0" fill="#33ac73"/><rect x="1770.1" y="484.0" width="42.9" height="3.0" fill="#266477"/><rect x="1770.1" y="481.0" width="42.9" height="3.0" fill="#236e77"/><rect x="1770.1" y="478.0" width="42.9" height="3.0" fill="#285e77"/><rect x="1770.1" y="475.0" width="42.9" height="3.0" fill="#236f77"/><rect x="1770.1" y="472.0" width="42.9" height="3.0" fill="#2b3d5e"/><rect x="1770.1" y="469.0" width="42.9" height="3.0" fill="#2e355b"/><rect x="1770.1" y="466.0" width="42.9" height="3.0" fill="#2d3a5d"/><rect x="1770.1" y="463.0" width="42.9" height="3.0" fill="#332151"/><rect x="1770.1" y="460.0" width="42.9" height="3.0" fill="#312d57"/><rect x="1770.1" y="457.0" width="42.9" height="3.0" fill="#2d395d"/><rect x="1770.1" y="454.0" width="42.9" height="3.0" fill="#332151"/><rect x="1770.1" y="439.0" width="42.9" height="3.0" fill="#2f274e"/><rect x="1770.1" y="436.0" width="42.9" height="3.0" fill="#2b3454"/><rect x="1770.1" y="427.0" width="42.9" height="3.0" fill="#2f294f"/><rect x="1770.1" y="412.0" width="42.9" height="3.0" fill="#30244d"/><rect x="1770.1" y="400.0" width="42.9" height="3.0" fill="#2b3555"/><rect x="1770.1" y="397.0" width="42.9" height="3.0" fill="#2f284e"/><rect x="1770.1" y="394.0" width="42.9" height="3.0" fill="#2d2f52"/><rect x="1770.1" y="367.0" width="42.9" height="3.0" fill="#2b3354"/><rect x="1770.1" y="355.0" width="42.9" height="3.0" fill="#30264e"/><rect x="1813.0" y="520.0" width="42.9" height="3.0" fill="#f1dc24"/><rect x="1813.0" y="517.0" width="42.9" height="3.0" fill="#f1dc24"/><rect x="1813.0" y="514.0" width="42.9" height="3.0" fill="#9bc830"/><rect x="1813.0" y="511.0" width="42.9" height="3.0" fill="#52ae58"/><rect x="1813.0" y="508.0" width="42.9" height="3.0" fill="#2faa76"/><rect x="1813.0" y="505.0" width="42.9" height="3.0" fill="#218e84"/><rect x="1813.0" y="502.0" width="42.9" height="3.0" fill="#25a27d"/><rect x="1813.0" y="499.0" width="42.9" height="3.0" fill="#25a37c"/><rect x="1813.0" y="496.0" width="42.9" height="3.0" fill="#249c7f"/><rect x="1813.0" y="493.0" width="42.9" height="3.0" fill="#249c7f"/><rect x="1813.0" y="490.0" width="42.9" height="3.0" fill="#229781"/><rect x="1813.0" y="487.0" width="42.9" height="3.0" fill="#2da878"/><rect x="1813.0" y="484.0" width="42.9" height="3.0" fill="#295c77"/><rect x="1813.0" y="481.0" width="42.9" height="3.0" fill="#2c5576"/><rect x="1813.0" y="478.0" width="42.9" height="3.0" fill="#2b5877"/><rect x="1813.0" y="475.0" width="42.9" height="3.0" fill="#276177"/><rect x="1813.0" y="472.0" width="42.9" height="3.0" fill="#312c57"/><rect x="1813.0" y="469.0" width="42.9" height="3.0" fill="#2d3a5d"/><rect x="1813.0" y="463.0" width="42.9" height="3.0" fill="#332654"/><rect x="1813.0" y="460.0" width="42.9" height="3.0" fill="#322a56"/><rect x="1813.0" y="454.0" width="42.9" height="3.0" fill="#2c3a5e"/><rect x="1813.0" y="451.0" width="42.9" height="3.0" fill="#332554"/><rect x="1813.0" y="445.0" width="42.9" height="3.0" fill="#2a3655"/><rect x="1813.0" y="442.0" width="42.9" height="3.0" fill="#293855"/><rect x="1813.0" y="433.0" width="42.9" height="3.0" fill="#2e2b50"/><rect x="1813.0" y="430.0" width="42.9" height="3.0" fill="#2c3052"/><rect x="1813.0" y="424.0" width="42.9" height="3.0" fill="#283c56"/><rect x="1813.0" y="394.0" width="42.9" height="3.0" fill="#2a3755"/><rect x="1813.0" y="388.0" width="42.9" height="3.0" fill="#30254d"/><rect x="1855.9" y="520.0" width="42.9" height="3.0" fill="#f1dc24"/><rect x="1855.9" y="517.0" width="42.9" height="3.0" fill="#f1dc24"/><rect x="1855.9" y="514.0" width="42.9" height="3.0" fill="#9bc830"/><rect x="1855.9" y="511.0" width="42.9" height="3.0" fill="#249472"/><rect x="1855.9" y="508.0" width="42.9" height="3.0" fill="#24a17e"/><rect x="1855.9" y="505.0" width="42.9" height="3.0" fill="#218e84"/><rect x="1855.9" y="502.0" width="42.9" height="3.0" fill="#25a47c"/><rect x="1855.9" y="499.0" width="42.9" height="3.0" fill="#218f84"/><rect x="1855.9" y="496.0" width="42.9" height="3.0" fill="#229382"/><rect x="1855.9" y="493.0" width="42.9" height="3.0" fill="#208e85"/><rect x="1855.9" y="490.0" width="42.9" height="3.0" fill="#229681"/><rect x="1855.9" y="487.0" width="42.9" height="3.0" fill="#35ad72"/><rect x="1855.9" y="484.0" width="42.9" height="3.0" fill="#219183"/><rect x="1855.9" y="481.0" width="42.9" height="3.0" fill="#236f77"/><rect x="1855.9" y="478.0" width="42.9" height="3.0" fill="#295c77"/><rect x="1855.9" y="475.0" width="42.9" height="3.0" fill="#295c77"/><rect x="1855.9" y="472.0" width="42.9" height="3.0" fill="#276077"/><rect x="1855.9" y="469.0" width="42.9" height="3.0" fill="#332150"/><rect x="1855.9" y="466.0" width="42.9" height="3.0" fill="#332554"/><rect x="1855.9" y="463.0" width="42.9" height="3.0" fill="#2e365b"/><rect x="1855.9" y="460.0" width="42.9" height="3.0" fill="#322855"/><rect x="1855.9" y="457.0" width="42.9" height="3.0" fill="#2d395d"/><rect x="1855.9" y="454.0" width="42.9" height="3.0" fill="#303159"/><rect x="1855.9" y="451.0" width="42.9" height="3.0" fill="#2a3f5e"/><rect x="1855.9" y="448.0" width="42.9" height="3.0" fill="#30204a"/><rect x="1855.9" y="445.0" width="42.9" height="3.0" fill="#2b3454"/><rect x="1855.9" y="442.0" width="42.9" height="3.0" fill="#2b3555"/><rect x="1855.9" y="427.0" width="42.9" height="3.0" fill="#30264e"/><rect x="1855.9" y="421.0" width="42.9" height="3.0" fill="#30234c"/><rect x="1855.9" y="418.0" width="42.9" height="3.0" fill="#2d2f52"/><rect x="1855.9" y="319.0" width="42.9" height="3.0" fill="#30264e"/><rect x="1898.8" y="520.0" width="42.9" height="3.0" fill="#f1dc24"/><rect x="1898.8" y="517.0" width="42.9" height="3.0" fill="#f1dc24"/><rect x="1898.8" y="514.0" width="42.9" height="3.0" fill="#70bd4b"/><rect x="1898.8" y="511.0" width="42.9" height="3.0" fill="#3ea363"/><rect x="1898.8" y="508.0" width="42.9" height="3.0" fill="#229482"/><rect x="1898.8" y="505.0" width="42.9" height="3.0" fill="#27a57b"/><rect x="1898.8" y="502.0" width="42.9" height="3.0" fill="#249d7f"/><rect x="1898.8" y="499.0" width="42.9" height="3.0" fill="#249e7f"/><rect x="1898.8" y="496.0" width="42.9" height="3.0" fill="#218e84"/><rect x="1898.8" y="493.0" width="42.9" height="3.0" fill="#2ba778"/><rect x="1898.8" y="490.0" width="42.9" height="3.0" fill="#35ad72"/><rect x="1898.8" y="487.0" width="42.9" height="3.0" fill="#239780"/><rect x="1898.8" y="484.0" width="42.9" height="3.0" fill="#2da877"/><rect x="1898.8" y="481.0" width="42.9" height="3.0" fill="#266677"/><rect x="1898.8" y="478.0" width="42.9" height="3.0" fill="#2d5476"/><rect x="1898.8" y="475.0" width="42.9" height="3.0" fill="#295d77"/><rect x="1898.8" y="472.0" width="42.9" height="3.0" fill="#2a5a77"/><rect x="1898.8" y="466.0" width="42.9" height="3.0" fill="#332755"/><rect x="1898.8" y="460.0" width="42.9" height="3.0" fill="#322a56"/><rect x="1898.8" y="457.0" width="42.9" height="3.0" fill="#312d57"/><rect x="1898.8" y="454.0" width="42.9" height="3.0" fill="#2a3f5e"/><rect x="1898.8" y="451.0" width="42.9" height="3.0" fill="#2e375c"/><rect x="1898.8" y="448.0" width="42.9" height="3.0" fill="#2c3a5e"/><rect x="1898.8" y="442.0" width="42.9" height="3.0" fill="#2c3354"/><rect x="1898.8" y="439.0" width="42.9" height="3.0" fill="#293955"/><rect x="1898.8" y="436.0" width="42.9" height="3.0" fill="#30244d"/><rect x="1898.8" y="433.0" width="42.9" height="3.0" fill="#2d2e52"/><rect x="1898.8" y="430.0" width="42.9" height="3.0" fill="#2e2c51"/><rect x="1898.8" y="424.0" width="42.9" height="3.0" fill="#2b3454"/><rect x="1898.8" y="421.0" width="42.9" height="3.0" fill="#293a55"/><rect x="1898.8" y="394.0" width="42.9" height="3.0" fill="#2e2a50"/><rect x="1898.8" y="388.0" width="42.9" height="3.0" fill="#2a3755"/><rect x="1898.8" y="382.0" width="42.9" height="3.0" fill="#2d2d51"/><rect x="1898.8" y="352.0" width="42.9" height="3.0" fill="#2f294f"/><rect x="1898.8" y="334.0" width="42.9" height="3.0" fill="#2e2c50"/><rect x="1898.8" y="298.0" width="42.9" height="3.0" fill="#2d2f52"/><rect x="1941.7" y="520.0" width="42.9" height="3.0" fill="#f1dc24"/><rect x="1941.7" y="517.0" width="42.9" height="3.0" fill="#9bc830"/><rect x="1941.7" y="514.0" width="42.9" height="3.0" fill="#249472"/><rect x="1941.7" y="511.0" width="42.9" height="3.0" fill="#25a17d"/><rect x="1941.7" y="508.0" width="42.9" height="3.0" fill="#229482"/><rect x="1941.7" y="505.0" width="42.9" height="3.0" fill="#218f84"/><rect x="1941.7" y="502.0" width="42.9" height="3.0" fill="#2aa779"/><rect x="1941.7" y="499.0" width="42.9" height="3.0" fill="#229282"/><rect x="1941.7" y="496.0" width="42.9" height="3.0" fill="#249f7e"/><rect x="1941.7" y="493.0" width="42.9" height="3.0" fill="#2ba778"/><rect x="1941.7" y="490.0" width="42.9" height="3.0" fill="#229382"/><rect x="1941.7" y="487.0" width="42.9" height="3.0" fill="#226f77"/><rect x="1941.7" y="484.0" width="42.9" height="3.0" fill="#2c5776"/><rect x="1941.7" y="481.0" width="42.9" height="3.0" fill="#266477"/><rect x="1941.7" y="478.0" width="42.9" height="3.0" fill="#236b77"/><rect x="1941.7" y="475.0" width="42.9" height="3.0" fill="#2f3259"/><rect x="1941.7" y="472.0" width="42.9" height="3.0" fill="#331f4e"/><rect x="1941.7" y="466.0" width="42.9" height="3.0" fill="#2f335a"/><rect x="1941.7" y="463.0" width="42.9" height="3.0" fill="#322b56"/><rect x="1941.7" y="460.0" width="42.9" height="3.0" fill="#332754"/><rect x="1941.7" y="457.0" width="42.9" height="3.0" fill="#312d58"/><rect x="1941.7" y="454.0" width="42.9" height="3.0" fill="#283c56"/><rect x="1941.7" y="451.0" width="42.9" height="3.0" fill="#293955"/><rect x="1941.7" y="448.0" width="42.9" height="3.0" fill="#2e2c51"/><rect x="1941.7" y="439.0" width="42.9" height="3.0" fill="#30234c"/><rect x="1941.7" y="418.0" width="42.9" height="3.0" fill="#2e2b50"/><rect x="1941.7" y="403.0" width="42.9" height="3.0" fill="#2d2f52"/><rect x="1941.7" y="355.0" width="42.9" height="3.0" fill="#2e2b50"/><rect x="1941.7" y="340.0" width="42.9" height="3.0" fill="#2c3253"/><rect x="1984.6" y="520.0" width="42.9" height="3.0" fill="#f1dc24"/><rect x="1984.6" y="517.0" width="42.9" height="3.0" fill="#f1dc24"/><rect x="1984.6" y="514.0" width="42.9" height="3.0" fill="#9bc830"/><rect x="1984.6" y="511.0" width="42.9" height="3.0" fill="#249472"/><rect x="1984.6" y="508.0" width="42.9" height="3.0" fill="#32ac74"/><rect x="1984.6" y="505.0" width="42.9" height="3.0" fill="#219183"/><rect x="1984.6" y="502.0" width="42.9" height="3.0" fill="#239880"/><rect x="1984.6" y="499.0" width="42.9" height="3.0" fill="#249c7f"/><rect x="1984.6" y="496.0" width="42.9" height="3.0" fill="#218e84"/><rect x="1984.6" y="493.0" width="42.9" height="3.0" fill="#30aa75"/><rect x="1984.6" y="490.0" width="42.9" height="3.0" fill="#2faa76"/><rect x="1984.6" y="487.0" width="42.9" height="3.0" fill="#25a17d"/><rect x="1984.6" y="484.0" width="42.9" height="3.0" fill="#276077"/><rect x="1984.6" y="481.0" width="42.9" height="3.0" fill="#236d77"/><rect x="1984.6" y="478.0" width="42.9" height="3.0" fill="#276377"/><rect x="1984.6" y="475.0" width="42.9" height="3.0" fill="#2d5476"/><rect x="1984.6" y="472.0" width="42.9" height="3.0" fill="#2d5476"/><rect x="1984.6" y="469.0" width="42.9" height="3.0" fill="#2e375c"/><rect x="1984.6" y="466.0" width="42.9" height="3.0" fill="#332453"/><rect x="1984.6" y="463.0" width="42.9" height="3.0" fill="#2c3b5e"/><rect x="1984.6" y="460.0" width="42.9" height="3.0" fill="#303159"/><rect x="1984.6" y="457.0" width="42.9" height="3.0" fill="#332554"/><rect x="1984.6" y="448.0" width="42.9" height="3.0" fill="#293855"/><rect x="1984.6" y="445.0" width="42.9" height="3.0" fill="#2b3554"/><rect x="1984.6" y="424.0" width="42.9" height="3.0" fill="#2c3253"/><rect x="1984.6" y="403.0" width="42.9" height="3.0" fill="#2b3555"/><rect x="1984.6" y="400.0" width="42.9" height="3.0" fill="#2e2c50"/><rect x="1984.6" y="325.0" width="42.9" height="3.0" fill="#2f294f"/><rect x="2027.5" y="520.0" width="42.9" height="3.0" fill="#f1dc24"/><rect x="2027.5" y="517.0" width="42.9" height="3.0" fill="#f1dc24"/><rect x="2027.5" y="514.0" width="42.9" height="3.0" fill="#9bc830"/><rect x="2027.5" y="511.0" width="42.9" height="3.0" fill="#52ae58"/><rect x="2027.5" y="508.0" width="42.9" height="3.0" fill="#219183"/><rect x="2027.5" y="505.0" width="42.9" height="3.0" fill="#2faa76"/><rect x="2027.5" y="502.0" width="42.9" height="3.0" fill="#2faa75"/><rect x="2027.5" y="499.0" width="42.9" height="3.0" fill="#32ab74"/><rect x="2027.5" y="496.0" width="42.9" height="3.0" fill="#219083"/><rect x="2027.5" y="493.0" width="42.9" height="3.0" fill="#34ad72"/><rect x="2027.5" y="490.0" width="42.9" height="3.0" fill="#239880"/><rect x="2027.5" y="487.0" width="42.9" height="3.0" fill="#239a7f"/><rect x="2027.5" y="484.0" width="42.9" height="3.0" fill="#236f77"/><rect x="2027.5" y="481.0" width="42.9" height="3.0" fill="#2a5b77"/><rect x="2027.5" y="478.0" width="42.9" height="3.0" fill="#276477"/><rect x="2027.5" y="475.0" width="42.9" height="3.0" fill="#246977"/><rect x="2027.5" y="469.0" width="42.9" height="3.0" fill="#302f58"/><rect x="2027.5" y="463.0" width="42.9" height="3.0" fill="#2e385c"/><rect x="2027.5" y="460.0" width="42.9" height="3.0" fill="#2a3f5e"/><rect x="2027.5" y="457.0" width="42.9" height="3.0" fill="#2a405e"/><rect x="2027.5" y="454.0" width="42.9" height="3.0" fill="#332554"/><rect x="2027.5" y="451.0" width="42.9" height="3.0" fill="#332654"/><rect x="2027.5" y="442.0" width="42.9" height="3.0" fill="#30254d"/><rect x="2027.5" y="436.0" width="42.9" height="3.0" fill="#2a3655"/><rect x="2027.5" y="433.0" width="42.9" height="3.0" fill="#30224b"/><rect x="2027.5" y="430.0" width="42.9" height="3.0" fill="#30224b"/><rect x="2027.5" y="391.0" width="42.9" height="3.0" fill="#293855"/><rect x="2027.5" y="376.0" width="42.9" height="3.0" fill="#30214a"/><rect x="2027.5" y="337.0" width="42.9" height="3.0" fill="#2b3354"/><rect x="2027.5" y="316.0" width="42.9" height="3.0" fill="#30254d"/><rect x="2070.4" y="520.0" width="42.9" height="3.0" fill="#f1dc24"/><rect x="2070.4" y="517.0" width="42.9" height="3.0" fill="#9bc830"/><rect x="2070.4" y="514.0" width="42.9" height="3.0" fill="#249472"/><rect x="2070.4" y="511.0" width="42.9" height="3.0" fill="#229581"/><rect x="2070.4" y="508.0" width="42.9" height="3.0" fill="#25a37c"/><rect x="2070.4" y="505.0" width="42.9" height="3.0" fill="#219083"/><rect x="2070.4" y="502.0" width="42.9" height="3.0" fill="#249f7e"/><rect x="2070.4" y="499.0" width="42.9" height="3.0" fill="#239980"/><rect x="2070.4" y="496.0" width="42.9" height="3.0" fill="#25a27c"/><rect x="2070.4" y="493.0" width="42.9" height="3.0" fill="#218e84"/><rect x="2070.4" y="490.0" width="42.9" height="3.0" fill="#2da877"/><rect x="2070.4" y="487.0" width="42.9" height="3.0" fill="#219083"/><rect x="2070.4" y="484.0" width="42.9" height="3.0" fill="#2b5877"/><rect x="2070.4" y="481.0" width="42.9" height="3.0" fill="#266577"/><rect x="2070.4" y="478.0" width="42.9" height="3.0" fill="#256777"/><rect x="2070.4" y="475.0" width="42.9" height="3.0" fill="#2c5676"/><rect x="2070.4" y="472.0" width="42.9" height="3.0" fill="#2f335a"/><rect x="2070.4" y="469.0" width="42.9" height="3.0" fill="#332150"/><rect x="2070.4" y="466.0" width="42.9" height="3.0" fill="#2b3e5e"/><rect x="2070.4" y="463.0" width="42.9" height="3.0" fill="#332151"/><rect x="2070.4" y="460.0" width="42.9" height="3.0" fill="#2e375c"/><rect x="2070.4" y="454.0" width="42.9" height="3.0" fill="#2d395d"/><rect x="2070.4" y="451.0" width="42.9" height="3.0" fill="#2a3755"/><rect x="2070.4" y="448.0" width="42.9" height="3.0" fill="#2a3755"/><rect x="2070.4" y="442.0" width="42.9" height="3.0" fill="#2f274e"/><rect x="2070.4" y="436.0" width="42.9" height="3.0" fill="#2a3855"/><rect x="2070.4" y="433.0" width="42.9" height="3.0" fill="#2e2c51"/><rect x="2070.4" y="421.0" width="42.9" height="3.0" fill="#2f284f"/><rect x="2070.4" y="418.0" width="42.9" height="3.0" fill="#2b3554"/><rect x="2070.4" y="412.0" width="42.9" height="3.0" fill="#2a3655"/><rect x="2070.4" y="379.0" width="42.9" height="3.0" fill="#30234c"/><rect x="2070.4" y="355.0" width="42.9" height="3.0" fill="#2c3153"/><rect x="2113.3" y="520.0" width="42.9" height="3.0" fill="#f1dc24"/><rect x="2113.3" y="517.0" width="42.9" height="3.0" fill="#f1dc24"/><rect x="2113.3" y="514.0" width="42.9" height="3.0" fill="#8bc43a"/><rect x="2113.3" y="511.0" width="42.9" height="3.0" fill="#3ea363"/><rect x="2113.3" y="508.0" width="42.9" height="3.0" fill="#35ad72"/><rect x="2113.3" y="505.0" width="42.9" height="3.0" fill="#239a7f"/><rect x="2113.3" y="502.0" width="42.9" height="3.0" fill="#29a67a"/><rect x="2113.3" y="499.0" width="42.9" height="3.0" fill="#219183"/><rect x="2113.3" y="496.0" width="42.9" height="3.0" fill="#219183"/><rect x="2113.3" y="493.0" width="42.9" height="3.0" fill="#25a47c"/><rect x="2113.3" y="490.0" width="42.9" height="3.0" fill="#24a07e"/><rect x="2113.3" y="487.0" width="42.9" height="3.0" fill="#229581"/><rect x="2113.3" y="484.0" width="42.9" height="3.0" fill="#25a47c"/><rect x="2113.3" y="481.0" width="42.9" height="3.0" fill="#2b5a77"/><rect x="2113.3" y="478.0" width="42.9" height="3.0" fill="#246977"/><rect x="2113.3" y="475.0" width="42.9" height="3.0" fill="#2b5777"/><rect x="2113.3" y="472.0" width="42.9" height="3.0" fill="#276277"/><rect x="2113.3" y="469.0" width="42.9" height="3.0" fill="#332251"/><rect x="2113.3" y="466.0" width="42.9" height="3.0" fill="#332855"/><rect x="2113.3" y="460.0" width="42.9" height="3.0" fill="#33204f"/><rect x="2113.3" y="457.0" width="42.9" height="3.0" fill="#322b57"/><rect x="2113.3" y="454.0" width="42.9" height="3.0" fill="#2e375c"/><rect x="2113.3" y="451.0" width="42.9" height="3.0" fill="#322b57"/><rect x="2113.3" y="445.0" width="42.9" height="3.0" fill="#2c3052"/><rect x="2113.3" y="439.0" width="42.9" height="3.0" fill="#2d2d51"/><rect x="2113.3" y="433.0" width="42.9" height="3.0" fill="#2c3153"/><rect x="2113.3" y="427.0" width="42.9" height="3.0" fill="#283b55"/><rect x="2113.3" y="412.0" width="42.9" height="3.0" fill="#2c3253"/><rect x="2113.3" y="397.0" width="42.9" height="3.0" fill="#2c3253"/><rect x="2113.3" y="394.0" width="42.9" height="3.0" fill="#2d2e51"/><rect x="2113.3" y="364.0" width="42.9" height="3.0" fill="#30244d"/><rect x="2156.2" y="520.0" width="42.9" height="3.0" fill="#f1dc24"/><rect x="2156.2" y="517.0" width="42.9" height="3.0" fill="#f1dc24"/><rect x="2156.2" y="514.0" width="42.9" height="3.0" fill="#70bd4b"/><rect x="2156.2" y="511.0" width="42.9" height="3.0" fill="#52ae58"/><rect x="2156.2" y="508.0" width="42.9" height="3.0" fill="#229482"/><rect x="2156.2" y="505.0" width="42.9" height="3.0" fill="#239880"/><rect x="2156.2" y="502.0" width="42.9" height="3.0" fill="#239880"/><rect x="2156.2" y="499.0" width="42.9" height="3.0" fill="#218f84"/><rect x="2156.2" y="496.0" width="42.9" height="3.0" fill="#219183"/><rect x="2156.2" y="493.0" width="42.9" height="3.0" fill="#229781"/><rect x="2156.2" y="490.0" width="42.9" height="3.0" fill="#31ab74"/><rect x="2156.2" y="487.0" width="42.9" height="3.0" fill="#2ea976"/><rect x="2156.2" y="484.0" width="42.9" height="3.0" fill="#276077"/><rect x="2156.2" y="481.0" width="42.9" height="3.0" fill="#2a5b77"/><rect x="2156.2" y="478.0" width="42.9" height="3.0" fill="#246a77"/><rect x="2156.2" y="475.0" width="42.9" height="3.0" fill="#2b5a77"/><rect x="2156.2" y="472.0" width="42.9" height="3.0" fill="#2a3f5e"/><rect x="2156.2" y="469.0" width="42.9" height="3.0" fill="#2e355b"/><rect x="2156.2" y="466.0" width="42.9" height="3.0" fill="#332453"/><rect x="2156.2" y="463.0" width="42.9" height="3.0" fill="#303058"/><rect x="2156.2" y="460.0" width="42.9" height="3.0" fill="#302f58"/><rect x="2156.2" y="457.0" width="42.9" height="3.0" fill="#2a405e"/><rect x="2156.2" y="454.0" width="42.9" height="3.0" fill="#2d3a5d"/><rect x="2156.2" y="448.0" width="42.9" height="3.0" fill="#2e2b50"/><rect x="2156.2" y="439.0" width="42.9" height="3.0" fill="#2d2e51"/><rect x="2156.2" y="433.0" width="42.9" height="3.0" fill="#293955"/><rect x="2156.2" y="430.0" width="42.9" height="3.0" fill="#30254d"/><rect x="2156.2" y="409.0" width="42.9" height="3.0" fill="#2b3554"/><rect x="2156.2" y="397.0" width="42.9" height="3.0" fill="#2e2c50"/><rect x="2156.2" y="346.0" width="42.9" height="3.0" fill="#2c3153"/><rect x="2156.2" y="286.0" width="42.9" height="3.0" fill="#2c2042"/><rect x="2199.1" y="520.0" width="42.9" height="3.0" fill="#f1dc24"/><rect x="2199.1" y="517.0" width="42.9" height="3.0" fill="#70bd4b"/><rect x="2199.1" y="514.0" width="42.9" height="3.0" fill="#249472"/><rect x="2199.1" y="511.0" width="42.9" height="3.0" fill="#28a67a"/><rect x="2199.1" y="508.0" width="42.9" height="3.0" fill="#249d7f"/><rect x="2199.1" y="505.0" width="42.9" height="3.0" fill="#239b7f"/><rect x="2199.1" y="502.0" width="42.9" height="3.0" fill="#239b7f"/><rect x="2199.1" y="499.0" width="42.9" height="3.0" fill="#24a07e"/><rect x="2199.1" y="496.0" width="42.9" height="3.0" fill="#24a07e"/><rect x="2199.1" y="493.0" width="42.9" height="3.0" fill="#24a07e"/><rect x="2199.1" y="490.0" width="42.9" height="3.0" fill="#219084"/><rect x="2199.1" y="487.0" width="42.9" height="3.0" fill="#2ea976"/><rect x="2199.1" y="484.0" width="42.9" height="3.0" fill="#2d5476"/><rect x="2199.1" y="481.0" width="42.9" height="3.0" fill="#266577"/><rect x="2199.1" y="478.0" width="42.9" height="3.0" fill="#276077"/><rect x="2199.1" y="475.0" width="42.9" height="3.0" fill="#322a56"/><rect x="2199.1" y="472.0" width="42.9" height="3.0" fill="#2d395d"/><rect x="2199.1" y="469.0" width="42.9" height="3.0" fill="#2e365b"/><rect x="2199.1" y="466.0" width="42.9" height="3.0" fill="#2e375c"/><rect x="2199.1" y="463.0" width="42.9" height="3.0" fill="#312f58"/><rect x="2199.1" y="460.0" width="42.9" height="3.0" fill="#2f345b"/><rect x="2199.1" y="457.0" width="42.9" height="3.0" fill="#332453"/><rect x="2199.1" y="448.0" width="42.9" height="3.0" fill="#2a3755"/><rect x="2199.1" y="445.0" width="42.9" height="3.0" fill="#2b3555"/><rect x="2199.1" y="442.0" width="42.9" height="3.0" fill="#283b55"/><rect x="2199.1" y="439.0" width="42.9" height="3.0" fill="#2b3555"/><rect x="2199.1" y="436.0" width="42.9" height="3.0" fill="#30244d"/><rect x="2199.1" y="409.0" width="42.9" height="3.0" fill="#30244d"/><rect x="2199.1" y="370.0" width="42.9" height="3.0" fill="#2d2f52"/><rect x="2199.1" y="364.0" width="42.9" height="3.0" fill="#2e2a4f"/><rect x="2242.0" y="520.0" width="42.9" height="3.0" fill="#f1dc24"/><rect x="2242.0" y="517.0" width="42.9" height="3.0" fill="#f1dc24"/><rect x="2242.0" y="514.0" width="42.9" height="3.0" fill="#70bd4b"/><rect x="2242.0" y="511.0" width="42.9" height="3.0" fill="#3ea363"/><rect x="2242.0" y="508.0" width="42.9" height="3.0" fill="#25a47c"/><rect x="2242.0" y="505.0" width="42.9" height="3.0" fill="#25a27d"/><rect x="2242.0" y="502.0" width="42.9" height="3.0" fill="#249d7f"/><rect x="2242.0" y="499.0" width="42.9" height="3.0" fill="#25a37c"/><rect x="2242.0" y="496.0" width="42.9" height="3.0" fill="#229382"/><rect x="2242.0" y="493.0" width="42.9" height="3.0" fill="#239a7f"/><rect x="2242.0" y="490.0" width="42.9" height="3.0" fill="#23997f"/><rect x="2242.0" y="487.0" width="42.9" height="3.0" fill="#26a57b"/><rect x="2242.0" y="484.0" width="42.9" height="3.0" fill="#239a7f"/><rect x="2242.0" y="481.0" width="42.9" height="3.0" fill="#276277"/><rect x="2242.0" y="478.0" width="42.9" height="3.0" fill="#236e77"/><rect x="2242.0" y="475.0" width="42.9" height="3.0" fill="#246977"/><rect x="2242.0" y="472.0" width="42.9" height="3.0" fill="#276077"/><rect x="2242.0" y="469.0" width="42.9" height="3.0" fill="#332855"/><rect x="2242.0" y="463.0" width="42.9" height="3.0" fill="#2c3d5e"/><rect x="2242.0" y="460.0" width="42.9" height="3.0" fill="#322955"/><rect x="2242.0" y="457.0" width="42.9" height="3.0" fill="#303059"/><rect x="2242.0" y="454.0" width="42.9" height="3.0" fill="#312c57"/><rect x="2242.0" y="451.0" width="42.9" height="3.0" fill="#2b3d5e"/><rect x="2242.0" y="448.0" width="42.9" height="3.0" fill="#2b3454"/><rect x="2242.0" y="442.0" width="42.9" height="3.0" fill="#30254d"/><rect x="2242.0" y="439.0" width="42.9" height="3.0" fill="#30224b"/><rect x="2242.0" y="436.0" width="42.9" height="3.0" fill="#2b3555"/><rect x="2242.0" y="433.0" width="42.9" height="3.0" fill="#293855"/><rect x="2242.0" y="430.0" width="42.9" height="3.0" fill="#293855"/><rect x="2242.0" y="427.0" width="42.9" height="3.0" fill="#2f274e"/><rect x="2242.0" y="421.0" width="42.9" height="3.0" fill="#2e2b50"/><rect x="2242.0" y="409.0" width="42.9" height="3.0" fill="#30224c"/><rect x="2242.0" y="394.0" width="42.9" height="3.0" fill="#2a3655"/><rect x="2242.0" y="391.0" width="42.9" height="3.0" fill="#2b3655"/><rect x="2242.0" y="310.0" width="42.9" height="3.0" fill="#2f294f"/><rect x="2284.9" y="520.0" width="42.9" height="3.0" fill="#f1dc24"/><rect x="2284.9" y="517.0" width="42.9" height="3.0" fill="#70bd4b"/><rect x="2284.9" y="514.0" width="42.9" height="3.0" fill="#3ea363"/><rect x="2284.9" y="511.0" width="42.9" height="3.0" fill="#239a7f"/><rect x="2284.9" y="508.0" width="42.9" height="3.0" fill="#239a7f"/><rect x="2284.9" y="505.0" width="42.9" height="3.0" fill="#25a47c"/><rect x="2284.9" y="502.0" width="42.9" height="3.0" fill="#25a17d"/><rect x="2284.9" y="499.0" width="42.9" height="3.0" fill="#25a17d"/><rect x="2284.9" y="496.0" width="42.9" height="3.0" fill="#35ad72"/><rect x="2284.9" y="493.0" width="42.9" height="3.0" fill="#218e84"/><rect x="2284.9" y="490.0" width="42.9" height="3.0" fill="#25a27c"/><rect x="2284.9" y="487.0" width="42.9" height="3.0" fill="#31ab74"/><rect x="2284.9" y="484.0" width="42.9" height="3.0" fill="#236c77"/><rect x="2284.9" y="481.0" width="42.9" height="3.0" fill="#276477"/><rect x="2284.9" y="478.0" width="42.9" height="3.0" fill="#2a5c77"/><rect x="2284.9" y="475.0" width="42.9" height="3.0" fill="#266477"/><rect x="2284.9" y="463.0" width="42.9" height="3.0" fill="#33204f"/><rect x="2284.9" y="460.0" width="42.9" height="3.0" fill="#2f335a"/><rect x="2284.9" y="457.0" width="42.9" height="3.0" fill="#2a405e"/><rect x="2284.9" y="448.0" width="42.9" height="3.0" fill="#283b55"/><rect x="2284.9" y="436.0" width="42.9" height="3.0" fill="#2a3755"/><rect x="2284.9" y="433.0" width="42.9" height="3.0" fill="#2e2b50"/><rect x="2284.9" y="406.0" width="42.9" height="3.0" fill="#2a3755"/><rect x="2284.9" y="367.0" width="42.9" height="3.0" fill="#30254d"/><rect x="2327.8" y="520.0" width="42.9" height="3.0" fill="#f1dc24"/><rect x="2327.8" y="517.0" width="42.9" height="3.0" fill="#f1dc24"/><rect x="2327.8" y="514.0" width="42.9" height="3.0" fill="#8bc43a"/><rect x="2327.8" y="511.0" width="42.9" height="3.0" fill="#249472"/><rect x="2327.8" y="508.0" width="42.9" height="3.0" fill="#239780"/><rect x="2327.8" y="505.0" width="42.9" height="3.0" fill="#219083"/><rect x="2327.8" y="502.0" width="42.9" height="3.0" fill="#218f84"/><rect x="2327.8" y="499.0" width="42.9" height="3.0" fill="#239b7f"/><rect x="2327.8" y="496.0" width="42.9" height="3.0" fill="#239a7f"/><rect x="2327.8" y="493.0" width="42.9" height="3.0" fill="#25a37c"/><rect x="2327.8" y="490.0" width="42.9" height="3.0" fill="#249e7f"/><rect x="2327.8" y="487.0" width="42.9" height="3.0" fill="#208e85"/><rect x="2327.8" y="484.0" width="42.9" height="3.0" fill="#2ca878"/><rect x="2327.8" y="481.0" width="42.9" height="3.0" fill="#295d77"/><rect x="2327.8" y="478.0" width="42.9" height="3.0" fill="#276377"/><rect x="2327.8" y="475.0" width="42.9" height="3.0" fill="#2c5676"/><rect x="2327.8" y="472.0" width="42.9" height="3.0" fill="#2b5877"/><rect x="2327.8" y="469.0" width="42.9" height="3.0" fill="#332453"/><rect x="2327.8" y="466.0" width="42.9" height="3.0" fill="#2c3c5e"/><rect x="2327.8" y="463.0" width="42.9" height="3.0" fill="#2b3d5e"/><rect x="2327.8" y="460.0" width="42.9" height="3.0" fill="#2f345b"/><rect x="2327.8" y="457.0" width="42.9" height="3.0" fill="#2e365b"/><rect x="2327.8" y="454.0" width="42.9" height="3.0" fill="#322855"/><rect x="2327.8" y="451.0" width="42.9" height="3.0" fill="#33204f"/><rect x="2327.8" y="448.0" width="42.9" height="3.0" fill="#2a3755"/><rect x="2327.8" y="439.0" width="42.9" height="3.0" fill="#2e2c50"/><rect x="2327.8" y="427.0" width="42.9" height="3.0" fill="#283c56"/><rect x="2327.8" y="424.0" width="42.9" height="3.0" fill="#30254d"/><rect x="2327.8" y="412.0" width="42.9" height="3.0" fill="#2f294f"/><rect x="2370.7" y="520.0" width="42.9" height="3.0" fill="#f1dc24"/><rect x="2370.7" y="517.0" width="42.9" height="3.0" fill="#f1dc24"/><rect x="2370.7" y="514.0" width="42.9" height="3.0" fill="#8bc43a"/><rect x="2370.7" y="511.0" width="42.9" height="3.0" fill="#52ae58"/><rect x="2370.7" y="508.0" width="42.9" height="3.0" fill="#229781"/><rect x="2370.7" y="505.0" width="42.9" height="3.0" fill="#219283"/><rect x="2370.7" y="502.0" width="42.9" height="3.0" fill="#2aa779"/><rect x="2370.7" y="499.0" width="42.9" height="3.0" fill="#2da877"/><rect x="2370.7" y="496.0" width="42.9" height="3.0" fill="#249d7f"/><rect x="2370.7" y="493.0" width="42.9" height="3.0" fill="#30aa75"/><rect x="2370.7" y="490.0" width="42.9" height="3.0" fill="#239a7f"/><rect x="2370.7" y="487.0" width="42.9" height="3.0" fill="#229781"/><rect x="2370.7" y="484.0" width="42.9" height="3.0" fill="#229382"/><rect x="2370.7" y="481.0" width="42.9" height="3.0" fill="#285f77"/><rect x="2370.7" y="478.0" width="42.9" height="3.0" fill="#285e77"/><rect x="2370.7" y="475.0" width="42.9" height="3.0" fill="#236f77"/><rect x="2370.7" y="472.0" width="42.9" height="3.0" fill="#246877"/><rect x="2370.7" y="469.0" width="42.9" height="3.0" fill="#2e365b"/><rect x="2370.7" y="466.0" width="42.9" height="3.0" fill="#2b3e5e"/><rect x="2370.7" y="460.0" width="42.9" height="3.0" fill="#322b57"/><rect x="2370.7" y="457.0" width="42.9" height="3.0" fill="#2a405e"/><rect x="2370.7" y="454.0" width="42.9" height="3.0" fill="#332755"/><rect x="2370.7" y="451.0" width="42.9" height="3.0" fill="#2c3b5e"/><rect x="2370.7" y="448.0" width="42.9" height="3.0" fill="#322855"/><rect x="2370.7" y="439.0" width="42.9" height="3.0" fill="#283b55"/><rect x="2370.7" y="430.0" width="42.9" height="3.0" fill="#2e2c50"/><rect x="2370.7" y="421.0" width="42.9" height="3.0" fill="#2a3855"/><rect x="2370.7" y="391.0" width="42.9" height="3.0" fill="#2e2b50"/><rect x="2413.6" y="520.0" width="42.9" height="3.0" fill="#f1dc24"/><rect x="2413.6" y="517.0" width="42.9" height="3.0" fill="#f1dc24"/><rect x="2413.6" y="514.0" width="42.9" height="3.0" fill="#70bd4b"/><rect x="2413.6" y="511.0" width="42.9" height="3.0" fill="#52ae58"/><rect x="2413.6" y="508.0" width="42.9" height="3.0" fill="#24a17e"/><rect x="2413.6" y="505.0" width="42.9" height="3.0" fill="#2ea976"/><rect x="2413.6" y="502.0" width="42.9" height="3.0" fill="#219283"/><rect x="2413.6" y="499.0" width="42.9" height="3.0" fill="#229382"/><rect x="2413.6" y="496.0" width="42.9" height="3.0" fill="#239a7f"/><rect x="2413.6" y="493.0" width="42.9" height="3.0" fill="#249e7f"/><rect x="2413.6" y="490.0" width="42.9" height="3.0" fill="#229681"/><rect x="2413.6" y="487.0" width="42.9" height="3.0" fill="#219183"/><rect x="2413.6" y="484.0" width="42.9" height="3.0" fill="#239980"/><rect x="2413.6" y="481.0" width="42.9" height="3.0" fill="#236c77"/><rect x="2413.6" y="478.0" width="42.9" height="3.0" fill="#2b5877"/><rect x="2413.6" y="475.0" width="42.9" height="3.0" fill="#2b5777"/><rect x="2413.6" y="472.0" width="42.9" height="3.0" fill="#2b5a77"/><rect x="2413.6" y="469.0" width="42.9" height="3.0" fill="#332150"/><rect x="2413.6" y="466.0" width="42.9" height="3.0" fill="#332251"/><rect x="2413.6" y="463.0" width="42.9" height="3.0" fill="#2b3d5e"/><rect x="2413.6" y="460.0" width="42.9" height="3.0" fill="#2b3e5e"/><rect x="2413.6" y="457.0" width="42.9" height="3.0" fill="#312d58"/><rect x="2413.6" y="454.0" width="42.9" height="3.0" fill="#2e365b"/><rect x="2413.6" y="451.0" width="42.9" height="3.0" fill="#2e375c"/><rect x="2413.6" y="448.0" width="42.9" height="3.0" fill="#303059"/><rect x="2413.6" y="445.0" width="42.9" height="3.0" fill="#2c3052"/><rect x="2413.6" y="424.0" width="42.9" height="3.0" fill="#30204a"/><rect x="2413.6" y="418.0" width="42.9" height="3.0" fill="#2e2c50"/><rect x="2413.6" y="394.0" width="42.9" height="3.0" fill="#30264e"/><rect x="2413.6" y="388.0" width="42.9" height="3.0" fill="#30254d"/><rect x="2413.6" y="337.0" width="42.9" height="3.0" fill="#2d2e51"/><rect x="2413.6" y="310.0" width="42.9" height="3.0" fill="#2c3253"/><rect x="2456.5" y="520.0" width="42.9" height="3.0" fill="#f1dc24"/><rect x="2456.5" y="517.0" width="42.9" height="3.0" fill="#9bc830"/><rect x="2456.5" y="514.0" width="42.9" height="3.0" fill="#249472"/><rect x="2456.5" y="511.0" width="42.9" height="3.0" fill="#35ad72"/><rect x="2456.5" y="508.0" width="42.9" height="3.0" fill="#25a37c"/><rect x="2456.5" y="505.0" width="42.9" height="3.0" fill="#229681"/><rect x="2456.5" y="502.0" width="42.9" height="3.0" fill="#2faa76"/><rect x="2456.5" y="499.0" width="42.9" height="3.0" fill="#25a37c"/><rect x="2456.5" y="496.0" width="42.9" height="3.0" fill="#249f7e"/><rect x="2456.5" y="493.0" width="42.9" height="3.0" fill="#229382"/><rect x="2456.5" y="490.0" width="42.9" height="3.0" fill="#25a37c"/><rect x="2456.5" y="487.0" width="42.9" height="3.0" fill="#2d5476"/><rect x="2456.5" y="484.0" width="42.9" height="3.0" fill="#276077"/><rect x="2456.5" y="481.0" width="42.9" height="3.0" fill="#2a5b77"/><rect x="2456.5" y="478.0" width="42.9" height="3.0" fill="#236b77"/><rect x="2456.5" y="475.0" width="42.9" height="3.0" fill="#322b57"/><rect x="2456.5" y="472.0" width="42.9" height="3.0" fill="#322956"/><rect x="2456.5" y="469.0" width="42.9" height="3.0" fill="#322c57"/><rect x="2456.5" y="466.0" width="42.9" height="3.0" fill="#2c3b5e"/><rect x="2456.5" y="463.0" width="42.9" height="3.0" fill="#2b3e5e"/><rect x="2456.5" y="460.0" width="42.9" height="3.0" fill="#332352"/><rect x="2456.5" y="457.0" width="42.9" height="3.0" fill="#332554"/><rect x="2456.5" y="445.0" width="42.9" height="3.0" fill="#2a3655"/><rect x="2456.5" y="430.0" width="42.9" height="3.0" fill="#2f294f"/><rect x="2456.5" y="418.0" width="42.9" height="3.0" fill="#2f284f"/><rect x="2456.5" y="415.0" width="42.9" height="3.0" fill="#293855"/><rect x="2456.5" y="379.0" width="42.9" height="3.0" fill="#2c3153"/><rect x="2499.4" y="520.0" width="42.9" height="3.0" fill="#f1dc24"/><rect x="2499.4" y="517.0" width="42.9" height="3.0" fill="#9bc830"/><rect x="2499.4" y="514.0" width="42.9" height="3.0" fill="#3ea363"/><rect x="2499.4" y="511.0" width="42.9" height="3.0" fill="#25a37c"/><rect x="2499.4" y="508.0" width="42.9" height="3.0" fill="#239b7f"/><rect x="2499.4" y="505.0" width="42.9" height="3.0" fill="#31ab74"/><rect x="2499.4" y="502.0" width="42.9" height="3.0" fill="#31ab75"/><rect x="2499.4" y="499.0" width="42.9" height="3.0" fill="#30ab75"/><rect x="2499.4" y="496.0" width="42.9" height="3.0" fill="#219183"/><rect x="2499.4" y="493.0" width="42.9" height="3.0" fill="#25a37c"/><rect x="2499.4" y="490.0" width="42.9" height="3.0" fill="#239c7f"/><rect x="2499.4" y="487.0" width="42.9" height="3.0" fill="#2ca878"/><rect x="2499.4" y="484.0" width="42.9" height="3.0" fill="#2b5a77"/><rect x="2499.4" y="481.0" width="42.9" height="3.0" fill="#256877"/><rect x="2499.4" y="478.0" width="42.9" height="3.0" fill="#236e77"/><rect x="2499.4" y="475.0" width="42.9" height="3.0" fill="#236c77"/><rect x="2499.4" y="472.0" width="42.9" height="3.0" fill="#2b3d5e"/><rect x="2499.4" y="469.0" width="42.9" height="3.0" fill="#2c3a5e"/><rect x="2499.4" y="466.0" width="42.9" height="3.0" fill="#2a405e"/><rect x="2499.4" y="463.0" width="42.9" height="3.0" fill="#331f4e"/><rect x="2499.4" y="460.0" width="42.9" height="3.0" fill="#332855"/><rect x="2499.4" y="457.0" width="42.9" height="3.0" fill="#2f335a"/><rect x="2499.4" y="454.0" width="42.9" height="3.0" fill="#283a55"/><rect x="2499.4" y="451.0" width="42.9" height="3.0" fill="#2e2c51"/><rect x="2499.4" y="448.0" width="42.9" height="3.0" fill="#2c3253"/><rect x="2499.4" y="433.0" width="42.9" height="3.0" fill="#2c3052"/><rect x="2499.4" y="376.0" width="42.9" height="3.0" fill="#30264e"/><rect x="2499.4" y="349.0" width="42.9" height="3.0" fill="#2e2b50"/><rect x="2499.4" y="319.0" width="42.9" height="3.0" fill="#2c3052"/><rect x="2499.4" y="307.0" width="42.9" height="3.0" fill="#2e2a50"/><rect x="2542.3" y="520.0" width="42.9" height="3.0" fill="#f1dc24"/><rect x="2542.3" y="517.0" width="42.9" height="3.0" fill="#70bd4b"/><rect x="2542.3" y="514.0" width="42.9" height="3.0" fill="#52ae58"/><rect x="2542.3" y="511.0" width="42.9" height="3.0" fill="#239880"/><rect x="2542.3" y="508.0" width="42.9" height="3.0" fill="#229581"/><rect x="2542.3" y="505.0" width="42.9" height="3.0" fill="#33ac73"/><rect x="2542.3" y="502.0" width="42.9" height="3.0" fill="#29a67a"/><rect x="2542.3" y="499.0" width="42.9" height="3.0" fill="#249c7f"/><rect x="2542.3" y="496.0" width="42.9" height="3.0" fill="#229382"/><rect x="2542.3" y="493.0" width="42.9" height="3.0" fill="#2ba779"/><rect x="2542.3" y="490.0" width="42.9" height="3.0" fill="#239880"/><rect x="2542.3" y="487.0" width="42.9" height="3.0" fill="#276077"/><rect x="2542.3" y="484.0" width="42.9" height="3.0" fill="#2a5a77"/><rect x="2542.3" y="481.0" width="42.9" height="3.0" fill="#276477"/><rect x="2542.3" y="478.0" width="42.9" height="3.0" fill="#2c5676"/><rect x="2542.3" y="475.0" width="42.9" height="3.0" fill="#2f335a"/><rect x="2542.3" y="472.0" width="42.9" height="3.0" fill="#332150"/><rect x="2542.3" y="469.0" width="42.9" height="3.0" fill="#2c3c5e"/><rect x="2542.3" y="466.0" width="42.9" height="3.0" fill="#312d58"/><rect x="2542.3" y="463.0" width="42.9" height="3.0" fill="#322956"/><rect x="2542.3" y="460.0" width="42.9" height="3.0" fill="#2e375c"/><rect x="2542.3" y="457.0" width="42.9" height="3.0" fill="#2d3052"/><rect x="2542.3" y="442.0" width="42.9" height="3.0" fill="#2f294f"/><rect x="2542.3" y="439.0" width="42.9" height="3.0" fill="#2f274e"/><rect x="2542.3" y="409.0" width="42.9" height="3.0" fill="#2c3253"/><rect x="2585.2" y="520.0" width="42.9" height="3.0" fill="#f1dc24"/><rect x="2585.2" y="517.0" width="42.9" height="3.0" fill="#f1dc24"/><rect x="2585.2" y="514.0" width="42.9" height="3.0" fill="#8bc43a"/><rect x="2585.2" y="511.0" width="42.9" height="3.0" fill="#3ea363"/><rect x="2585.2" y="508.0" width="42.9" height="3.0" fill="#28a67a"/><rect x="2585.2" y="505.0" width="42.9" height="3.0" fill="#239c7f"/><rect x="2585.2" y="502.0" width="42.9" height="3.0" fill="#249f7e"/><rect x="2585.2" y="499.0" width="42.9" height="3.0" fill="#29a679"/><rect x="2585.2" y="496.0" width="42.9" height="3.0" fill="#2ca878"/><rect x="2585.2" y="493.0" width="42.9" height="3.0" fill="#2eaa76"/><rect x="2585.2" y="490.0" width="42.9" height="3.0" fill="#239a7f"/><rect x="2585.2" y="487.0" width="42.9" height="3.0" fill="#249f7e"/><rect x="2585.2" y="484.0" width="42.9" height="3.0" fill="#33ac73"/><rect x="2585.2" y="481.0" width="42.9" height="3.0" fill="#2b5977"/><rect x="2585.2" y="478.0" width="42.9" height="3.0" fill="#266477"/><rect x="2585.2" y="475.0" width="42.9" height="3.0" fill="#276277"/><rect x="2585.2" y="472.0" width="42.9" height="3.0" fill="#236f77"/><rect x="2585.2" y="469.0" width="42.9" height="3.0" fill="#332554"/><rect x="2585.2" y="466.0" width="42.9" height="3.0" fill="#2e365b"/><rect x="2585.2" y="463.0" width="42.9" height="3.0" fill="#331f4e"/><rect x="2585.2" y="460.0" width="42.9" height="3.0" fill="#332855"/><rect x="2585.2" y="457.0" width="42.9" height="3.0" fill="#2a415e"/><rect x="2585.2" y="454.0" width="42.9" height="3.0" fill="#2b3d5e"/><rect x="2585.2" y="451.0" width="42.9" height="3.0" fill="#2e375c"/><rect x="2585.2" y="448.0" width="42.9" height="3.0" fill="#2a3855"/><rect x="2585.2" y="445.0" width="42.9" height="3.0" fill="#2f284f"/><rect x="2585.2" y="436.0" width="42.9" height="3.0" fill="#283b55"/><rect x="2585.2" y="433.0" width="42.9" height="3.0" fill="#302049"/><rect x="2585.2" y="430.0" width="42.9" height="3.0" fill="#2e2b50"/><rect x="2585.2" y="427.0" width="42.9" height="3.0" fill="#283a55"/><rect x="2585.2" y="424.0" width="42.9" height="3.0" fill="#30224b"/><rect x="2585.2" y="418.0" width="42.9" height="3.0" fill="#2b3655"/><rect x="2585.2" y="415.0" width="42.9" height="3.0" fill="#2c3253"/><rect x="2585.2" y="412.0" width="42.9" height="3.0" fill="#30234c"/><rect x="2628.1" y="520.0" width="42.9" height="3.0" fill="#f1dc24"/><rect x="2628.1" y="517.0" width="42.9" height="3.0" fill="#f1dc24"/><rect x="2628.1" y="514.0" width="42.9" height="3.0" fill="#8bc43a"/><rect x="2628.1" y="511.0" width="42.9" height="3.0" fill="#3ea363"/><rect x="2628.1" y="508.0" width="42.9" height="3.0" fill="#239880"/><rect x="2628.1" y="505.0" width="42.9" height="3.0" fill="#35ad72"/><rect x="2628.1" y="502.0" width="42.9" height="3.0" fill="#31ab74"/><rect x="2628.1" y="499.0" width="42.9" height="3.0" fill="#25a37c"/><rect x="2628.1" y="496.0" width="42.9" height="3.0" fill="#33ac73"/><rect x="2628.1" y="493.0" width="42.9" height="3.0" fill="#219083"/><rect x="2628.1" y="490.0" width="42.9" height="3.0" fill="#32ab74"/><rect x="2628.1" y="487.0" width="42.9" height="3.0" fill="#34ac73"/><rect x="2628.1" y="484.0" width="42.9" height="3.0" fill="#25a47c"/><rect x="2628.1" y="481.0" width="42.9" height="3.0" fill="#276377"/><rect x="2628.1" y="478.0" width="42.9" height="3.0" fill="#256777"/><rect x="2628.1" y="475.0" width="42.9" height="3.0" fill="#256777"/><rect x="2628.1" y="472.0" width="42.9" height="3.0" fill="#246a77"/><rect x="2628.1" y="469.0" width="42.9" height="3.0" fill="#332150"/><rect x="2628.1" y="466.0" width="42.9" height="3.0" fill="#332754"/><rect x="2628.1" y="460.0" width="42.9" height="3.0" fill="#312f58"/><rect x="2628.1" y="457.0" width="42.9" height="3.0" fill="#2d3a5d"/><rect x="2628.1" y="454.0" width="42.9" height="3.0" fill="#2c3b5e"/><rect x="2628.1" y="451.0" width="42.9" height="3.0" fill="#322955"/><rect x="2628.1" y="448.0" width="42.9" height="3.0" fill="#2a405e"/><rect x="2628.1" y="421.0" width="42.9" height="3.0" fill="#2d2e51"/><rect x="2628.1" y="394.0" width="42.9" height="3.0" fill="#2f2a4f"/><rect x="2628.1" y="388.0" width="42.9" height="3.0" fill="#2d2e51"/><rect x="2671.0" y="520.0" width="42.9" height="3.0" fill="#f1dc24"/><rect x="2671.0" y="517.0" width="42.9" height="3.0" fill="#8bc43a"/><rect x="2671.0" y="514.0" width="42.9" height="3.0" fill="#52ae58"/><rect x="2671.0" y="511.0" width="42.9" height="3.0" fill="#229681"/><rect x="2671.0" y="508.0" width="42.9" height="3.0" fill="#218e84"/><rect x="2671.0" y="505.0" width="42.9" height="3.0" fill="#219083"/><rect x="2671.0" y="502.0" width="42.9" height="3.0" fill="#239b7f"/><rect x="2671.0" y="499.0" width="42.9" height="3.0" fill="#229482"/><rect x="2671.0" y="496.0" width="42.9" height="3.0" fill="#229582"/><rect x="2671.0" y="493.0" width="42.9" height="3.0" fill="#219083"/><rect x="2671.0" y="490.0" width="42.9" height="3.0" fill="#239a7f"/><rect x="2671.0" y="487.0" width="42.9" height="3.0" fill="#295d77"/><rect x="2671.0" y="484.0" width="42.9" height="3.0" fill="#2d5476"/><rect x="2671.0" y="481.0" width="42.9" height="3.0" fill="#276377"/><rect x="2671.0" y="478.0" width="42.9" height="3.0" fill="#276477"/><rect x="2671.0" y="475.0" width="42.9" height="3.0" fill="#322b57"/><rect x="2671.0" y="472.0" width="42.9" height="3.0" fill="#2e385c"/><rect x="2671.0" y="469.0" width="42.9" height="3.0" fill="#332352"/><rect x="2671.0" y="466.0" width="42.9" height="3.0" fill="#322855"/><rect x="2671.0" y="460.0" width="42.9" height="3.0" fill="#2b3d5e"/><rect x="2671.0" y="457.0" width="42.9" height="3.0" fill="#2c3b5e"/><rect x="2671.0" y="451.0" width="42.9" height="3.0" fill="#2c3153"/><rect x="2671.0" y="448.0" width="42.9" height="3.0" fill="#30264d"/><rect x="2671.0" y="442.0" width="42.9" height="3.0" fill="#293955"/><rect x="2671.0" y="436.0" width="42.9" height="3.0" fill="#2f274e"/><rect x="2671.0" y="433.0" width="42.9" height="3.0" fill="#293955"/><rect x="2671.0" y="418.0" width="42.9" height="3.0" fill="#2d2e51"/><rect x="2671.0" y="412.0" width="42.9" height="3.0" fill="#30244d"/><rect x="2671.0" y="382.0" width="42.9" height="3.0" fill="#2d2f52"/><rect x="2671.0" y="349.0" width="42.9" height="3.0" fill="#2d2d51"/><rect x="2671.0" y="328.0" width="42.9" height="3.0" fill="#30264d"/><rect x="2671.0" y="310.0" width="42.9" height="3.0" fill="#2e2a50"/><rect x="2713.9" y="520.0" width="42.9" height="3.0" fill="#f1dc24"/><rect x="2713.9" y="517.0" width="42.9" height="3.0" fill="#70bd4b"/><rect x="2713.9" y="514.0" width="42.9" height="3.0" fill="#249472"/><rect x="2713.9" y="511.0" width="42.9" height="3.0" fill="#34ad72"/><rect x="2713.9" y="508.0" width="42.9" height="3.0" fill="#34ac73"/><rect x="2713.9" y="505.0" width="42.9" height="3.0" fill="#25a37c"/><rect x="2713.9" y="502.0" width="42.9" height="3.0" fill="#24a07e"/><rect x="2713.9" y="499.0" width="42.9" height="3.0" fill="#219183"/><rect x="2713.9" y="496.0" width="42.9" height="3.0" fill="#2da877"/><rect x="2713.9" y="493.0" width="42.9" height="3.0" fill="#239c7f"/><rect x="2713.9" y="490.0" width="42.9" height="3.0" fill="#25a17d"/><rect x="2713.9" y="487.0" width="42.9" height="3.0" fill="#27a57b"/><rect x="2713.9" y="484.0" width="42.9" height="3.0" fill="#236d77"/><rect x="2713.9" y="481.0" width="42.9" height="3.0" fill="#236c77"/><rect x="2713.9" y="478.0" width="42.9" height="3.0" fill="#2b5977"/><rect x="2713.9" y="475.0" width="42.9" height="3.0" fill="#2c5676"/><rect x="2713.9" y="472.0" width="42.9" height="3.0" fill="#2f345b"/><rect x="2713.9" y="463.0" width="42.9" height="3.0" fill="#2c3b5e"/><rect x="2713.9" y="460.0" width="42.9" height="3.0" fill="#2d395d"/><rect x="2713.9" y="457.0" width="42.9" height="3.0" fill="#2f335a"/><rect x="2713.9" y="454.0" width="42.9" height="3.0" fill="#322a56"/><rect x="2713.9" y="445.0" width="42.9" height="3.0" fill="#30244d"/><rect x="2713.9" y="442.0" width="42.9" height="3.0" fill="#2e2a50"/><rect x="2713.9" y="433.0" width="42.9" height="3.0" fill="#2c3353"/><rect x="2713.9" y="430.0" width="42.9" height="3.0" fill="#30224b"/><rect x="2713.9" y="427.0" width="42.9" height="3.0" fill="#283c56"/><rect x="2713.9" y="394.0" width="42.9" height="3.0" fill="#2d2e51"/><rect x="2713.9" y="373.0" width="42.9" height="3.0" fill="#30254d"/><rect x="2713.9" y="292.0" width="42.9" height="3.0" fill="#2b3454"/><rect x="2756.8" y="520.0" width="42.9" height="3.0" fill="#f1dc24"/><rect x="2756.8" y="517.0" width="42.9" height="3.0" fill="#f1dc24"/><rect x="2756.8" y="514.0" width="42.9" height="3.0" fill="#70bd4b"/><rect x="2756.8" y="511.0" width="42.9" height="3.0" fill="#3ea363"/><rect x="2756.8" y="508.0" width="42.9" height="3.0" fill="#249d7f"/><rect x="2756.8" y="505.0" width="42.9" height="3.0" fill="#229482"/><rect x="2756.8" y="502.0" width="42.9" height="3.0" fill="#249f7e"/><rect x="2756.8" y="499.0" width="42.9" height="3.0" fill="#249c7f"/><rect x="2756.8" y="496.0" width="42.9" height="3.0" fill="#24a07e"/><rect x="2756.8" y="493.0" width="42.9" height="3.0" fill="#36ad72"/><rect x="2756.8" y="490.0" width="42.9" height="3.0" fill="#218f84"/><rect x="2756.8" y="487.0" width="42.9" height="3.0" fill="#2faa76"/><rect x="2756.8" y="484.0" width="42.9" height="3.0" fill="#2ba778"/><rect x="2756.8" y="481.0" width="42.9" height="3.0" fill="#266677"/><rect x="2756.8" y="478.0" width="42.9" height="3.0" fill="#227077"/><rect x="2756.8" y="475.0" width="42.9" height="3.0" fill="#276277"/><rect x="2756.8" y="472.0" width="42.9" height="3.0" fill="#285f77"/><rect x="2756.8" y="466.0" width="42.9" height="3.0" fill="#2b3d5e"/><rect x="2756.8" y="463.0" width="42.9" height="3.0" fill="#2a415e"/><rect x="2756.8" y="460.0" width="42.9" height="3.0" fill="#2b3d5e"/><rect x="2756.8" y="457.0" width="42.9" height="3.0" fill="#332352"/><rect x="2756.8" y="454.0" width="42.9" height="3.0" fill="#2d395c"/><rect x="2756.8" y="451.0" width="42.9" height="3.0" fill="#2c3b5e"/><rect x="2756.8" y="442.0" width="42.9" height="3.0" fill="#293a55"/><rect x="2756.8" y="439.0" width="42.9" height="3.0" fill="#2f2a4f"/><rect x="2756.8" y="436.0" width="42.9" height="3.0" fill="#2a3855"/><rect x="2756.8" y="421.0" width="42.9" height="3.0" fill="#2f294f"/><rect x="2756.8" y="391.0" width="42.9" height="3.0" fill="#2b3354"/><rect x="2756.8" y="364.0" width="42.9" height="3.0" fill="#2b3454"/><rect x="2799.7" y="520.0" width="42.9" height="3.0" fill="#f1dc24"/><rect x="2799.7" y="517.0" width="42.9" height="3.0" fill="#f1dc24"/><rect x="2799.7" y="514.0" width="42.9" height="3.0" fill="#8bc43a"/><rect x="2799.7" y="511.0" width="42.9" height="3.0" fill="#52ae58"/><rect x="2799.7" y="508.0" width="42.9" height="3.0" fill="#34ac73"/><rect x="2799.7" y="505.0" width="42.9" height="3.0" fill="#24a07e"/><rect x="2799.7" y="502.0" width="42.9" height="3.0" fill="#229382"/><rect x="2799.7" y="499.0" width="42.9" height="3.0" fill="#29a679"/><rect x="2799.7" y="496.0" width="42.9" height="3.0" fill="#35ad72"/><rect x="2799.7" y="493.0" width="42.9" height="3.0" fill="#33ac74"/><rect x="2799.7" y="490.0" width="42.9" height="3.0" fill="#219183"/><rect x="2799.7" y="487.0" width="42.9" height="3.0" fill="#24a17e"/><rect x="2799.7" y="484.0" width="42.9" height="3.0" fill="#218e84"/><rect x="2799.7" y="481.0" width="42.9" height="3.0" fill="#285e77"/><rect x="2799.7" y="478.0" width="42.9" height="3.0" fill="#2c5676"/><rect x="2799.7" y="475.0" width="42.9" height="3.0" fill="#276477"/><rect x="2799.7" y="472.0" width="42.9" height="3.0" fill="#2d5476"/><rect x="2799.7" y="469.0" width="42.9" height="3.0" fill="#2f3159"/><rect x="2799.7" y="466.0" width="42.9" height="3.0" fill="#2f335a"/><rect x="2799.7" y="463.0" width="42.9" height="3.0" fill="#303159"/><rect x="2799.7" y="460.0" width="42.9" height="3.0" fill="#332353"/><rect x="2799.7" y="457.0" width="42.9" height="3.0" fill="#2f3259"/><rect x="2799.7" y="454.0" width="42.9" height="3.0" fill="#303059"/><rect x="2799.7" y="436.0" width="42.9" height="3.0" fill="#2d2f52"/><rect x="2799.7" y="430.0" width="42.9" height="3.0" fill="#30224b"/><rect x="2799.7" y="424.0" width="42.9" height="3.0" fill="#2a3755"/><rect x="2799.7" y="391.0" width="42.9" height="3.0" fill="#2f274e"/><rect x="2799.7" y="334.0" width="42.9" height="3.0" fill="#2d2e51"/><rect x="2799.7" y="313.0" width="42.9" height="3.0" fill="#2e2b50"/><rect x="2842.6" y="520.0" width="42.9" height="3.0" fill="#f1dc24"/><rect x="2842.6" y="517.0" width="42.9" height="3.0" fill="#a7c92d"/><rect x="2842.6" y="514.0" width="42.9" height="3.0" fill="#249472"/><rect x="2842.6" y="511.0" width="42.9" height="3.0" fill="#238187"/><rect x="2842.6" y="508.0" width="42.9" height="3.0" fill="#239980"/><rect x="2842.6" y="505.0" width="42.9" height="3.0" fill="#208e85"/><rect x="2842.6" y="502.0" width="42.9" height="3.0" fill="#218687"/><rect x="2842.6" y="499.0" width="42.9" height="3.0" fill="#228287"/><rect x="2842.6" y="496.0" width="42.9" height="3.0" fill="#218787"/><rect x="2842.6" y="493.0" width="42.9" height="3.0" fill="#276477"/><rect x="2842.6" y="490.0" width="42.9" height="3.0" fill="#2c5676"/><rect x="2842.6" y="487.0" width="42.9" height="3.0" fill="#276177"/><rect x="2842.6" y="484.0" width="42.9" height="3.0" fill="#332855"/><rect x="2842.6" y="481.0" width="42.9" height="3.0" fill="#312d58"/><rect x="2842.6" y="478.0" width="42.9" height="3.0" fill="#2f345b"/><rect x="2842.6" y="475.0" width="42.9" height="3.0" fill="#322a56"/><rect x="2842.6" y="472.0" width="42.9" height="3.0" fill="#33204f"/><rect x="2842.6" y="454.0" width="42.9" height="3.0" fill="#2f274e"/><rect x="2842.6" y="442.0" width="42.9" height="3.0" fill="#2d2f52"/><rect x="2842.6" y="427.0" width="42.9" height="3.0" fill="#2c3052"/><rect x="2842.6" y="379.0" width="42.9" height="3.0" fill="#2d2e51"/><rect x="2842.6" y="367.0" width="42.9" height="3.0" fill="#2c3153"/><rect x="2842.6" y="346.0" width="42.9" height="3.0" fill="#2c2042"/><rect x="2885.5" y="520.0" width="42.9" height="3.0" fill="#f1dc24"/><rect x="2885.5" y="517.0" width="42.9" height="3.0" fill="#a7c92d"/><rect x="2885.5" y="514.0" width="42.9" height="3.0" fill="#249472"/><rect x="2885.5" y="511.0" width="42.9" height="3.0" fill="#208d85"/><rect x="2885.5" y="508.0" width="42.9" height="3.0" fill="#218587"/><rect x="2885.5" y="505.0" width="42.9" height="3.0" fill="#219183"/><rect x="2885.5" y="502.0" width="42.9" height="3.0" fill="#239c7f"/><rect x="2885.5" y="499.0" width="42.9" height="3.0" fill="#229582"/><rect x="2885.5" y="496.0" width="42.9" height="3.0" fill="#219283"/><rect x="2885.5" y="493.0" width="42.9" height="3.0" fill="#266477"/><rect x="2885.5" y="490.0" width="42.9" height="3.0" fill="#236c77"/><rect x="2885.5" y="487.0" width="42.9" height="3.0" fill="#285d77"/><rect x="2885.5" y="484.0" width="42.9" height="3.0" fill="#295d77"/><rect x="2885.5" y="475.0" width="42.9" height="3.0" fill="#322b56"/><rect x="2885.5" y="472.0" width="42.9" height="3.0" fill="#2c3c5e"/><rect x="2885.5" y="469.0" width="42.9" height="3.0" fill="#312f58"/><rect x="2885.5" y="463.0" width="42.9" height="3.0" fill="#2d3052"/><rect x="2885.5" y="454.0" width="42.9" height="3.0" fill="#2d2f52"/><rect x="2885.5" y="448.0" width="42.9" height="3.0" fill="#293855"/><rect x="2885.5" y="421.0" width="42.9" height="3.0" fill="#2c3052"/><rect x="2885.5" y="355.0" width="42.9" height="3.0" fill="#30204a"/><rect x="2928.4" y="520.0" width="42.9" height="3.0" fill="#f1dc24"/><rect x="2928.4" y="517.0" width="42.9" height="3.0" fill="#a7c92d"/><rect x="2928.4" y="514.0" width="42.9" height="3.0" fill="#3ea363"/><rect x="2928.4" y="511.0" width="42.9" height="3.0" fill="#239780"/><rect x="2928.4" y="508.0" width="42.9" height="3.0" fill="#239980"/><rect x="2928.4" y="505.0" width="42.9" height="3.0" fill="#218487"/><rect x="2928.4" y="502.0" width="42.9" height="3.0" fill="#238087"/><rect x="2928.4" y="499.0" width="42.9" height="3.0" fill="#219183"/><rect x="2928.4" y="496.0" width="42.9" height="3.0" fill="#247c87"/><rect x="2928.4" y="493.0" width="42.9" height="3.0" fill="#285f77"/><rect x="2928.4" y="490.0" width="42.9" height="3.0" fill="#2b5877"/><rect x="2928.4" y="487.0" width="42.9" height="3.0" fill="#2c5576"/><rect x="2928.4" y="484.0" width="42.9" height="3.0" fill="#2d3a5d"/><rect x="2928.4" y="481.0" width="42.9" height="3.0" fill="#2d3a5d"/><rect x="2928.4" y="478.0" width="42.9" height="3.0" fill="#332855"/><rect x="2928.4" y="475.0" width="42.9" height="3.0" fill="#2f335a"/><rect x="2928.4" y="472.0" width="42.9" height="3.0" fill="#332654"/><rect x="2928.4" y="469.0" width="42.9" height="3.0" fill="#2b3f5e"/><rect x="2928.4" y="463.0" width="42.9" height="3.0" fill="#30244d"/><rect x="2928.4" y="451.0" width="42.9" height="3.0" fill="#2f294f"/><rect x="2928.4" y="433.0" width="42.9" height="3.0" fill="#2c3354"/><rect x="2928.4" y="418.0" width="42.9" height="3.0" fill="#2d2e51"/><rect x="2971.3" y="520.0" width="42.9" height="3.0" fill="#f1dc24"/><rect x="2971.3" y="517.0" width="42.9" height="3.0" fill="#a7c92d"/><rect x="2971.3" y="514.0" width="42.9" height="3.0" fill="#52ae58"/><rect x="2971.3" y="511.0" width="42.9" height="3.0" fill="#239a7f"/><rect x="2971.3" y="508.0" width="42.9" height="3.0" fill="#249c7f"/><rect x="2971.3" y="505.0" width="42.9" height="3.0" fill="#218787"/><rect x="2971.3" y="502.0" width="42.9" height="3.0" fill="#208e85"/><rect x="2971.3" y="499.0" width="42.9" height="3.0" fill="#228187"/><rect x="2971.3" y="496.0" width="42.9" height="3.0" fill="#218e84"/><rect x="2971.3" y="493.0" width="42.9" height="3.0" fill="#229681"/><rect x="2971.3" y="490.0" width="42.9" height="3.0" fill="#266477"/><rect x="2971.3" y="487.0" width="42.9" height="3.0" fill="#266477"/><rect x="2971.3" y="484.0" width="42.9" height="3.0" fill="#2d5476"/><rect x="2971.3" y="481.0" width="42.9" height="3.0" fill="#332855"/><rect x="2971.3" y="478.0" width="42.9" height="3.0" fill="#2a3f5e"/><rect x="2971.3" y="475.0" width="42.9" height="3.0" fill="#33204f"/><rect x="2971.3" y="472.0" width="42.9" height="3.0" fill="#2d395c"/><rect x="2971.3" y="469.0" width="42.9" height="3.0" fill="#2f335a"/><rect x="2971.3" y="466.0" width="42.9" height="3.0" fill="#312d57"/><rect x="2971.3" y="463.0" width="42.9" height="3.0" fill="#30234c"/><rect x="2971.3" y="457.0" width="42.9" height="3.0" fill="#2f284e"/><rect x="2971.3" y="454.0" width="42.9" height="3.0" fill="#301f48"/><rect x="2971.3" y="451.0" width="42.9" height="3.0" fill="#2b3555"/><rect x="2971.3" y="445.0" width="42.9" height="3.0" fill="#283b55"/><rect x="2971.3" y="442.0" width="42.9" height="3.0" fill="#283a55"/><rect x="2971.3" y="427.0" width="42.9" height="3.0" fill="#2b3555"/><rect x="2971.3" y="418.0" width="42.9" height="3.0" fill="#30224b"/><rect x="2971.3" y="379.0" width="42.9" height="3.0" fill="#2e2a50"/><rect x="2971.3" y="346.0" width="42.9" height="3.0" fill="#2f274e"/><rect x="3014.2" y="520.0" width="42.9" height="3.0" fill="#f1dc24"/><rect x="3014.2" y="517.0" width="42.9" height="3.0" fill="#a7c92d"/><rect x="3014.2" y="514.0" width="42.9" height="3.0" fill="#249472"/><rect x="3014.2" y="511.0" width="42.9" height="3.0" fill="#247e87"/><rect x="3014.2" y="508.0" width="42.9" height="3.0" fill="#208d85"/><rect x="3014.2" y="505.0" width="42.9" height="3.0" fill="#239880"/><rect x="3014.2" y="502.0" width="42.9" height="3.0" fill="#228187"/><rect x="3014.2" y="499.0" width="42.9" height="3.0" fill="#249c7f"/><rect x="3014.2" y="496.0" width="42.9" height="3.0" fill="#218487"/><rect x="3014.2" y="493.0" width="42.9" height="3.0" fill="#208787"/><rect x="3014.2" y="490.0" width="42.9" height="3.0" fill="#2d5476"/><rect x="3014.2" y="487.0" width="42.9" height="3.0" fill="#295c77"/><rect x="3014.2" y="484.0" width="42.9" height="3.0" fill="#2c5676"/><rect x="3014.2" y="478.0" width="42.9" height="3.0" fill="#2c3b5e"/><rect x="3014.2" y="475.0" width="42.9" height="3.0" fill="#303059"/><rect x="3014.2" y="472.0" width="42.9" height="3.0" fill="#332453"/><rect x="3014.2" y="469.0" width="42.9" height="3.0" fill="#2d3a5d"/><rect x="3014.2" y="466.0" width="42.9" height="3.0" fill="#332453"/><rect x="3014.2" y="454.0" width="42.9" height="3.0" fill="#30254d"/><rect x="3014.2" y="439.0" width="42.9" height="3.0" fill="#2a3855"/><rect x="3014.2" y="436.0" width="42.9" height="3.0" fill="#2d2d51"/><rect x="3014.2" y="373.0" width="42.9" height="3.0" fill="#30254d"/><rect x="3014.2" y="325.0" width="42.9" height="3.0" fill="#2c2042"/><rect x="3057.1" y="520.0" width="42.9" height="3.0" fill="#f1dc24"/><rect x="3057.1" y="517.0" width="42.9" height="3.0" fill="#a7c92d"/><rect x="3057.1" y="514.0" width="42.9" height="3.0" fill="#249472"/><rect x="3057.1" y="511.0" width="42.9" height="3.0" fill="#218687"/><rect x="3057.1" y="508.0" width="42.9" height="3.0" fill="#219283"/><rect x="3057.1" y="505.0" width="42.9" height="3.0" fill="#238087"/><rect x="3057.1" y="502.0" width="42.9" height="3.0" fill="#208987"/><rect x="3057.1" y="499.0" width="42.9" height="3.0" fill="#229482"/><rect x="3057.1" y="496.0" width="42.9" height="3.0" fill="#219083"/><rect x="3057.1" y="493.0" width="42.9" height="3.0" fill="#208787"/><rect x="3057.1" y="490.0" width="42.9" height="3.0" fill="#2c5676"/><rect x="3057.1" y="487.0" width="42.9" height="3.0" fill="#236e77"/><rect x="3057.1" y="484.0" width="42.9" height="3.0" fill="#266577"/><rect x="3057.1" y="481.0" width="42.9" height="3.0" fill="#322955"/><rect x="3057.1" y="478.0" width="42.9" height="3.0" fill="#2b3e5e"/><rect x="3057.1" y="475.0" width="42.9" height="3.0" fill="#332151"/><rect x="3057.1" y="472.0" width="42.9" height="3.0" fill="#2a3f5e"/><rect x="3057.1" y="469.0" width="42.9" height="3.0" fill="#332755"/><rect x="3057.1" y="466.0" width="42.9" height="3.0" fill="#2b3f5e"/><rect x="3057.1" y="463.0" width="42.9" height="3.0" fill="#2f294f"/><rect x="3057.1" y="454.0" width="42.9" height="3.0" fill="#2d2f52"/><rect x="3057.1" y="424.0" width="42.9" height="3.0" fill="#30244d"/><rect x="3057.1" y="406.0" width="42.9" height="3.0" fill="#2d2e51"/><rect x="3057.1" y="286.0" width="42.9" height="3.0" fill="#2c2042"/><rect x="3100.0" y="520.0" width="42.9" height="3.0" fill="#f1dc24"/><rect x="3100.0" y="517.0" width="42.9" height="3.0" fill="#a7c92d"/><rect x="3100.0" y="514.0" width="42.9" height="3.0" fill="#249472"/><rect x="3100.0" y="511.0" width="42.9" height="3.0" fill="#208987"/><rect x="3100.0" y="508.0" width="42.9" height="3.0" fill="#208987"/><rect x="3100.0" y="505.0" width="42.9" height="3.0" fill="#239b7f"/><rect x="3100.0" y="502.0" width="42.9" height="3.0" fill="#208987"/><rect x="3100.0" y="499.0" width="42.9" height="3.0" fill="#208b86"/><rect x="3100.0" y="496.0" width="42.9" height="3.0" fill="#257b87"/><rect x="3100.0" y="493.0" width="42.9" height="3.0" fill="#239a7f"/><rect x="3100.0" y="490.0" width="42.9" height="3.0" fill="#236c77"/><rect x="3100.0" y="487.0" width="42.9" height="3.0" fill="#227077"/><rect x="3100.0" y="484.0" width="42.9" height="3.0" fill="#256877"/><rect x="3100.0" y="481.0" width="42.9" height="3.0" fill="#312e58"/><rect x="3100.0" y="478.0" width="42.9" height="3.0" fill="#2b3d5e"/><rect x="3100.0" y="475.0" width="42.9" height="3.0" fill="#2d395d"/><rect x="3100.0" y="472.0" width="42.9" height="3.0" fill="#303159"/><rect x="3100.0" y="469.0" width="42.9" height="3.0" fill="#312c57"/><rect x="3100.0" y="460.0" width="42.9" height="3.0" fill="#293a55"/><rect x="3100.0" y="457.0" width="42.9" height="3.0" fill="#2a3755"/><rect x="3100.0" y="451.0" width="42.9" height="3.0" fill="#2b3655"/><rect x="3100.0" y="448.0" width="42.9" height="3.0" fill="#2b3454"/><rect x="3100.0" y="439.0" width="42.9" height="3.0" fill="#2f284f"/><rect x="3100.0" y="388.0" width="42.9" height="3.0" fill="#30244d"/><rect x="3100.0" y="370.0" width="42.9" height="3.0" fill="#2f284f"/><rect x="3100.0" y="349.0" width="42.9" height="3.0" fill="#2e2c51"/><rect x="3142.9" y="520.0" width="42.9" height="3.0" fill="#f1dc24"/><rect x="3142.9" y="517.0" width="42.9" height="3.0" fill="#a7c92d"/><rect x="3142.9" y="514.0" width="42.9" height="3.0" fill="#3ea363"/><rect x="3142.9" y="511.0" width="42.9" height="3.0" fill="#239a7f"/><rect x="3142.9" y="508.0" width="42.9" height="3.0" fill="#239980"/><rect x="3142.9" y="505.0" width="42.9" height="3.0" fill="#208e85"/><rect x="3142.9" y="502.0" width="42.9" height="3.0" fill="#208787"/><rect x="3142.9" y="499.0" width="42.9" height="3.0" fill="#239980"/><rect x="3142.9" y="496.0" width="42.9" height="3.0" fill="#239a7f"/><rect x="3142.9" y="493.0" width="42.9" height="3.0" fill="#219183"/><rect x="3142.9" y="490.0" width="42.9" height="3.0" fill="#2c5776"/><rect x="3142.9" y="487.0" width="42.9" height="3.0" fill="#2a5a77"/><rect x="3142.9" y="484.0" width="42.9" height="3.0" fill="#266577"/><rect x="3142.9" y="481.0" width="42.9" height="3.0" fill="#2e365b"/><rect x="3142.9" y="478.0" width="42.9" height="3.0" fill="#303059"/><rect x="3142.9" y="466.0" width="42.9" height="3.0" fill="#2d395d"/><rect x="3142.9" y="418.0" width="42.9" height="3.0" fill="#293855"/><rect x="3142.9" y="361.0" width="42.9" height="3.0" fill="#2c3153"/><rect x="3185.8" y="520.0" width="42.9" height="3.0" fill="#f1dc24"/><rect x="3185.8" y="517.0" width="42.9" height="3.0" fill="#a7c92d"/><rect x="3185.8" y="514.0" width="42.9" height="3.0" fill="#52ae58"/><rect x="3185.8" y="511.0" width="42.9" height="3.0" fill="#218e84"/><rect x="3185.8" y="508.0" width="42.9" height="3.0" fill="#239a7f"/><rect x="3185.8" y="505.0" width="42.9" height="3.0" fill="#229282"/><rect x="3185.8" y="502.0" width="42.9" height="3.0" fill="#219183"/><rect x="3185.8" y="499.0" width="42.9" height="3.0" fill="#219283"/><rect x="3185.8" y="496.0" width="42.9" height="3.0" fill="#228287"/><rect x="3185.8" y="493.0" width="42.9" height="3.0" fill="#2c5576"/><rect x="3185.8" y="490.0" width="42.9" height="3.0" fill="#2c5676"/><rect x="3185.8" y="487.0" width="42.9" height="3.0" fill="#285f77"/><rect x="3185.8" y="484.0" width="42.9" height="3.0" fill="#2d3a5d"/><rect x="3185.8" y="481.0" width="42.9" height="3.0" fill="#332654"/><rect x="3185.8" y="478.0" width="42.9" height="3.0" fill="#2e355b"/><rect x="3185.8" y="475.0" width="42.9" height="3.0" fill="#2b3e5e"/><rect x="3185.8" y="472.0" width="42.9" height="3.0" fill="#33204f"/><rect x="3185.8" y="457.0" width="42.9" height="3.0" fill="#2b3354"/><rect x="3185.8" y="427.0" width="42.9" height="3.0" fill="#2c3153"/><rect x="3185.8" y="319.0" width="42.9" height="3.0" fill="#2c2042"/><rect x="3228.7" y="520.0" width="42.9" height="3.0" fill="#f1dc24"/><rect x="3228.7" y="517.0" width="42.9" height="3.0" fill="#a7c92d"/><rect x="3228.7" y="514.0" width="42.9" height="3.0" fill="#52ae58"/><rect x="3228.7" y="511.0" width="42.9" height="3.0" fill="#218587"/><rect x="3228.7" y="508.0" width="42.9" height="3.0" fill="#208d85"/><rect x="3228.7" y="505.0" width="42.9" height="3.0" fill="#257b87"/><rect x="3228.7" y="502.0" width="42.9" height="3.0" fill="#208a86"/><rect x="3228.7" y="499.0" width="42.9" height="3.0" fill="#208787"/><rect x="3228.7" y="496.0" width="42.9" height="3.0" fill="#239a7f"/><rect x="3228.7" y="493.0" width="42.9" height="3.0" fill="#2a5b77"/><rect x="3228.7" y="490.0" width="42.9" height="3.0" fill="#236f77"/><rect x="3228.7" y="487.0" width="42.9" height="3.0" fill="#256877"/><rect x="3228.7" y="484.0" width="42.9" height="3.0" fill="#2f345b"/><rect x="3228.7" y="478.0" width="42.9" height="3.0" fill="#2b3e5e"/><rect x="3228.7" y="475.0" width="42.9" height="3.0" fill="#312e58"/><rect x="3228.7" y="472.0" width="42.9" height="3.0" fill="#303058"/><rect x="3228.7" y="466.0" width="42.9" height="3.0" fill="#2b3454"/><rect x="3228.7" y="463.0" width="42.9" height="3.0" fill="#2c3153"/><rect x="3228.7" y="460.0" width="42.9" height="3.0" fill="#2b3555"/><rect x="3228.7" y="451.0" width="42.9" height="3.0" fill="#293955"/><rect x="3228.7" y="439.0" width="42.9" height="3.0" fill="#2a3755"/><rect x="3228.7" y="430.0" width="42.9" height="3.0" fill="#30264e"/><rect x="3271.6" y="520.0" width="42.9" height="3.0" fill="#f1dc24"/><rect x="3271.6" y="517.0" width="42.9" height="3.0" fill="#a7c92d"/><rect x="3271.6" y="514.0" width="42.9" height="3.0" fill="#249472"/><rect x="3271.6" y="511.0" width="42.9" height="3.0" fill="#218e84"/><rect x="3271.6" y="508.0" width="42.9" height="3.0" fill="#238087"/><rect x="3271.6" y="505.0" width="42.9" height="3.0" fill="#229282"/><rect x="3271.6" y="502.0" width="42.9" height="3.0" fill="#208c86"/><rect x="3271.6" y="499.0" width="42.9" height="3.0" fill="#237e87"/><rect x="3271.6" y="496.0" width="42.9" height="3.0" fill="#208787"/><rect x="3271.6" y="493.0" width="42.9" height="3.0" fill="#218687"/><rect x="3271.6" y="490.0" width="42.9" height="3.0" fill="#2a5b77"/><rect x="3271.6" y="487.0" width="42.9" height="3.0" fill="#256877"/><rect x="3271.6" y="484.0" width="42.9" height="3.0" fill="#285f77"/><rect x="3271.6" y="481.0" width="42.9" height="3.0" fill="#2c3b5e"/><rect x="3271.6" y="478.0" width="42.9" height="3.0" fill="#2d395d"/><rect x="3271.6" y="475.0" width="42.9" height="3.0" fill="#312f58"/><rect x="3271.6" y="472.0" width="42.9" height="3.0" fill="#332755"/><rect x="3271.6" y="466.0" width="42.9" height="3.0" fill="#2c3b5e"/><rect x="3271.6" y="463.0" width="42.9" height="3.0" fill="#283c56"/><rect x="3271.6" y="451.0" width="42.9" height="3.0" fill="#2f274e"/><rect x="3271.6" y="448.0" width="42.9" height="3.0" fill="#2d2d51"/><rect x="3271.6" y="442.0" width="42.9" height="3.0" fill="#2c3253"/><rect x="3271.6" y="439.0" width="42.9" height="3.0" fill="#2a3855"/><rect x="3271.6" y="430.0" width="42.9" height="3.0" fill="#2a3755"/><rect x="3271.6" y="259.0" width="42.9" height="3.0" fill="#2c2042"/><rect x="3314.5" y="520.0" width="42.9" height="3.0" fill="#f1dc24"/><rect x="3314.5" y="517.0" width="42.9" height="3.0" fill="#a7c92d"/><rect x="3314.5" y="514.0" width="42.9" height="3.0" fill="#52ae58"/><rect x="3314.5" y="511.0" width="42.9" height="3.0" fill="#218687"/><rect x="3314.5" y="508.0" width="42.9" height="3.0" fill="#208b86"/><rect x="3314.5" y="505.0" width="42.9" height="3.0" fill="#229482"/><rect x="3314.5" y="502.0" width="42.9" height="3.0" fill="#228387"/><rect x="3314.5" y="499.0" width="42.9" height="3.0" fill="#219283"/><rect x="3314.5" y="496.0" width="42.9" height="3.0" fill="#249c7f"/><rect x="3314.5" y="493.0" width="42.9" height="3.0" fill="#238087"/><rect x="3314.5" y="490.0" width="42.9" height="3.0" fill="#256677"/><rect x="3314.5" y="487.0" width="42.9" height="3.0" fill="#276077"/><rect x="3314.5" y="484.0" width="42.9" height="3.0" fill="#276277"/><rect x="3314.5" y="481.0" width="42.9" height="3.0" fill="#332251"/><rect x="3314.5" y="478.0" width="42.9" height="3.0" fill="#322b57"/><rect x="3314.5" y="472.0" width="42.9" height="3.0" fill="#332251"/><rect x="3314.5" y="469.0" width="42.9" height="3.0" fill="#33204f"/><rect x="3314.5" y="451.0" width="42.9" height="3.0" fill="#302049"/><rect x="3314.5" y="430.0" width="42.9" height="3.0" fill="#30254d"/><rect x="3357.4" y="520.0" width="42.9" height="3.0" fill="#f1dc24"/><rect x="3357.4" y="517.0" width="42.9" height="3.0" fill="#a7c92d"/><rect x="3357.4" y="514.0" width="42.9" height="3.0" fill="#3ea363"/><rect x="3357.4" y="511.0" width="42.9" height="3.0" fill="#229781"/><rect x="3357.4" y="508.0" width="42.9" height="3.0" fill="#229382"/><rect x="3357.4" y="505.0" width="42.9" height="3.0" fill="#229282"/><rect x="3357.4" y="502.0" width="42.9" height="3.0" fill="#238087"/><rect x="3357.4" y="499.0" width="42.9" height="3.0" fill="#218787"/><rect x="3357.4" y="496.0" width="42.9" height="3.0" fill="#229581"/><rect x="3357.4" y="493.0" width="42.9" height="3.0" fill="#276077"/><rect x="3357.4" y="490.0" width="42.9" height="3.0" fill="#2c5576"/><rect x="3357.4" y="487.0" width="42.9" height="3.0" fill="#256877"/><rect x="3357.4" y="484.0" width="42.9" height="3.0" fill="#2b3d5e"/><rect x="3357.4" y="481.0" width="42.9" height="3.0" fill="#2a405e"/><rect x="3357.4" y="478.0" width="42.9" height="3.0" fill="#312d58"/><rect x="3357.4" y="475.0" width="42.9" height="3.0" fill="#312f58"/><rect x="3357.4" y="472.0" width="42.9" height="3.0" fill="#303058"/><rect x="3357.4" y="454.0" width="42.9" height="3.0" fill="#2c3052"/><rect x="3357.4" y="439.0" width="42.9" height="3.0" fill="#2b3454"/><rect x="3357.4" y="427.0" width="42.9" height="3.0" fill="#30264e"/><rect x="3357.4" y="370.0" width="42.9" height="3.0" fill="#2d2f52"/><rect x="3400.3" y="520.0" width="42.9" height="3.0" fill="#f1dc24"/><rect x="3400.3" y="517.0" width="42.9" height="3.0" fill="#a7c92d"/><rect x="3400.3" y="514.0" width="42.9" height="3.0" fill="#52ae58"/><rect x="3400.3" y="511.0" width="42.9" height="3.0" fill="#228487"/><rect x="3400.3" y="508.0" width="42.9" height="3.0" fill="#208c86"/><rect x="3400.3" y="505.0" width="42.9" height="3.0" fill="#228187"/><rect x="3400.3" y="502.0" width="42.9" height="3.0" fill="#218e84"/><rect x="3400.3" y="499.0" width="42.9" height="3.0" fill="#229482"/><rect x="3400.3" y="496.0" width="42.9" height="3.0" fill="#238187"/><rect x="3400.3" y="493.0" width="42.9" height="3.0" fill="#228287"/><rect x="3400.3" y="490.0" width="42.9" height="3.0" fill="#2c5576"/><rect x="3400.3" y="487.0" width="42.9" height="3.0" fill="#256777"/><rect x="3400.3" y="484.0" width="42.9" height="3.0" fill="#2b5877"/><rect x="3400.3" y="481.0" width="42.9" height="3.0" fill="#2a5b77"/><rect x="3400.3" y="478.0" width="42.9" height="3.0" fill="#2f3259"/><rect x="3400.3" y="475.0" width="42.9" height="3.0" fill="#332252"/><rect x="3400.3" y="472.0" width="42.9" height="3.0" fill="#2c3b5e"/><rect x="3400.3" y="469.0" width="42.9" height="3.0" fill="#332150"/><rect x="3400.3" y="466.0" width="42.9" height="3.0" fill="#322b57"/><rect x="3400.3" y="463.0" width="42.9" height="3.0" fill="#303059"/><rect x="3400.3" y="460.0" width="42.9" height="3.0" fill="#2b3454"/><rect x="3400.3" y="457.0" width="42.9" height="3.0" fill="#2b3354"/><rect x="3400.3" y="451.0" width="42.9" height="3.0" fill="#2e2c50"/><rect x="3400.3" y="349.0" width="42.9" height="3.0" fill="#2e2a4f"/><rect x="3400.3" y="307.0" width="42.9" height="3.0" fill="#2c2042"/><rect x="3443.2" y="520.0" width="42.9" height="3.0" fill="#f1dc24"/><rect x="3443.2" y="517.0" width="42.9" height="3.0" fill="#a7c92d"/><rect x="3443.2" y="514.0" width="42.9" height="3.0" fill="#52ae58"/><rect x="3443.2" y="511.0" width="42.9" height="3.0" fill="#229681"/><rect x="3443.2" y="508.0" width="42.9" height="3.0" fill="#218687"/><rect x="3443.2" y="505.0" width="42.9" height="3.0" fill="#237f87"/><rect x="3443.2" y="502.0" width="42.9" height="3.0" fill="#239b7f"/><rect x="3443.2" y="499.0" width="42.9" height="3.0" fill="#218587"/><rect x="3443.2" y="496.0" width="42.9" height="3.0" fill="#208b86"/><rect x="3443.2" y="493.0" width="42.9" height="3.0" fill="#239a7f"/><rect x="3443.2" y="490.0" width="42.9" height="3.0" fill="#256777"/><rect x="3443.2" y="487.0" width="42.9" height="3.0" fill="#2c5676"/><rect x="3443.2" y="484.0" width="42.9" height="3.0" fill="#2a5b77"/><rect x="3443.2" y="481.0" width="42.9" height="3.0" fill="#2f335a"/><rect x="3443.2" y="478.0" width="42.9" height="3.0" fill="#332754"/><rect x="3443.2" y="475.0" width="42.9" height="3.0" fill="#312c57"/><rect x="3443.2" y="472.0" width="42.9" height="3.0" fill="#331f4e"/><rect x="3443.2" y="469.0" width="42.9" height="3.0" fill="#33204f"/><rect x="3443.2" y="433.0" width="42.9" height="3.0" fill="#2a3655"/><rect x="3443.2" y="352.0" width="42.9" height="3.0" fill="#30254d"/><rect x="3443.2" y="319.0" width="42.9" height="3.0" fill="#2c2042"/><rect x="3443.2" y="271.0" width="42.9" height="3.0" fill="#2c2042"/><rect x="3486.1" y="520.0" width="42.9" height="3.0" fill="#f1dc24"/><rect x="3486.1" y="517.0" width="42.9" height="3.0" fill="#a7c92d"/><rect x="3486.1" y="514.0" width="42.9" height="3.0" fill="#239a7f"/><rect x="3486.1" y="511.0" width="42.9" height="3.0" fill="#218f84"/><rect x="3486.1" y="508.0" width="42.9" height="3.0" fill="#208c85"/><rect x="3486.1" y="505.0" width="42.9" height="3.0" fill="#219183"/><rect x="3486.1" y="502.0" width="42.9" height="3.0" fill="#249d7f"/><rect x="3486.1" y="499.0" width="42.9" height="3.0" fill="#276177"/><rect x="3486.1" y="496.0" width="42.9" height="3.0" fill="#246a77"/><rect x="3486.1" y="493.0" width="42.9" height="3.0" fill="#322a56"/><rect x="3486.1" y="490.0" width="42.9" height="3.0" fill="#312e58"/><rect x="3486.1" y="487.0" width="42.9" height="3.0" fill="#312f58"/><rect x="3486.1" y="484.0" width="42.9" height="3.0" fill="#303059"/><rect x="3486.1" y="475.0" width="42.9" height="3.0" fill="#30274e"/><rect x="3529.0" y="520.0" width="21.0" height="3.0" fill="#f1dc24"/><rect x="3529.0" y="517.0" width="21.0" height="3.0" fill="#228387"/><rect x="3529.0" y="514.0" width="21.0" height="3.0" fill="#218f84"/><rect x="3529.0" y="511.0" width="21.0" height="3.0" fill="#2a5a77"/><rect x="3529.0" y="508.0" width="21.0" height="3.0" fill="#2e375c"/><rect x="3529.0" y="505.0" width="21.0" height="3.0" fill="#2f335a"/><rect x="3529.0" y="502.0" width="21.0" height="3.0" fill="#2f2a4f"/></g>
<line x1="762.0" y1="491.6" x2="3550.0" y2="491.6" stroke="#15161a" stroke-width="1.5" />
<line x1="762.0" y1="507.1" x2="3550.0" y2="507.1" stroke="#15161a" stroke-width="1.5" />
<line x1="762.0" y1="247.4" x2="3550.0" y2="247.4" stroke="#44464c" stroke-width="2" stroke-dasharray="3 3"/>
<line x1="762.0" y1="339.5" x2="3550.0" y2="339.5" stroke="#44464c" stroke-width="2" stroke-dasharray="3 3"/>
<line x1="762.0" y1="431.7" x2="3550.0" y2="431.7" stroke="#44464c" stroke-width="2" stroke-dasharray="3 3"/>
<line x1="762.0" y1="525.0" x2="3550.0" y2="525.0" stroke="#55575c" stroke-width="2" stroke-dasharray="3 3"/>
<line x1="762.0" y1="526.0" x2="762.0" y2="555.0" stroke="#212227" stroke-width="2" />
<line x1="890.7" y1="238.6" x2="890.7" y2="524.0" stroke="#44464c" stroke-width="2" stroke-dasharray="3 3" stroke-opacity="0.8"/>
<line x1="890.7" y1="526.0" x2="890.7" y2="555.0" stroke="#212227" stroke-width="2" />
<line x1="1019.4" y1="238.6" x2="1019.4" y2="524.0" stroke="#44464c" stroke-width="2" stroke-dasharray="3 3" stroke-opacity="0.8"/>
<line x1="1019.4" y1="526.0" x2="1019.4" y2="555.0" stroke="#212227" stroke-width="2" />
<line x1="1148.2" y1="238.6" x2="1148.2" y2="524.0" stroke="#44464c" stroke-width="2" stroke-dasharray="3 3" stroke-opacity="0.8"/>
<line x1="1148.2" y1="526.0" x2="1148.2" y2="555.0" stroke="#212227" stroke-width="2" />
<line x1="1276.9" y1="238.6" x2="1276.9" y2="524.0" stroke="#44464c" stroke-width="2" stroke-dasharray="3 3" stroke-opacity="0.8"/>
<line x1="1276.9" y1="526.0" x2="1276.9" y2="555.0" stroke="#212227" stroke-width="2" />
<line x1="1405.6" y1="238.6" x2="1405.6" y2="524.0" stroke="#44464c" stroke-width="2" stroke-dasharray="3 3" stroke-opacity="0.8"/>
<line x1="1405.6" y1="526.0" x2="1405.6" y2="555.0" stroke="#212227" stroke-width="2" />
<line x1="1534.3" y1="238.6" x2="1534.3" y2="524.0" stroke="#44464c" stroke-width="2" stroke-dasharray="3 3" stroke-opacity="0.8"/>
<line x1="1534.3" y1="526.0" x2="1534.3" y2="555.0" stroke="#212227" stroke-width="2" />
<line x1="1663.0" y1="238.6" x2="1663.0" y2="524.0" stroke="#44464c" stroke-width="2" stroke-dasharray="3 3" stroke-opacity="0.8"/>
<line x1="1663.0" y1="526.0" x2="1663.0" y2="555.0" stroke="#212227" stroke-width="2" />
<line x1="1791.8" y1="238.6" x2="1791.8" y2="524.0" stroke="#44464c" stroke-width="2" stroke-dasharray="3 3" stroke-opacity="0.8"/>
<line x1="1791.8" y1="526.0" x2="1791.8" y2="555.0" stroke="#212227" stroke-width="2" />
<line x1="1920.5" y1="238.6" x2="1920.5" y2="524.0" stroke="#44464c" stroke-width="2" stroke-dasharray="3 3" stroke-opacity="0.8"/>
<line x1="1920.5" y1="526.0" x2="1920.5" y2="555.0" stroke="#212227" stroke-width="2" />
<line x1="2049.2" y1="238.6" x2="2049.2" y2="524.0" stroke="#44464c" stroke-width="2" stroke-dasharray="3 3" stroke-opacity="0.8"/>
<line x1="2049.2" y1="526.0" x2="2049.2" y2="555.0" stroke="#212227" stroke-width="2" />
<line x1="2177.9" y1="238.6" x2="2177.9" y2="524.0" stroke="#44464c" stroke-width="2" stroke-dasharray="3 3" stroke-opacity="0.8"/>
<line x1="2177.9" y1="526.0" x2="2177.9" y2="555.0" stroke="#212227" stroke-width="2" />
<line x1="2306.6" y1="238.6" x2="2306.6" y2="524.0" stroke="#44464c" stroke-width="2" stroke-dasharray="3 3" stroke-opacity="0.8"/>
<line x1="2306.6" y1="526.0" x2="2306.6" y2="555.0" stroke="#212227" stroke-width="2" />
<line x1="2435.4" y1="238.6" x2="2435.4" y2="524.0" stroke="#44464c" stroke-width="2" stroke-dasharray="3 3" stroke-opacity="0.8"/>
<line x1="2435.4" y1="526.0" x2="2435.4" y2="555.0" stroke="#212227" stroke-width="2" />
<line x1="2564.1" y1="238.6" x2="2564.1" y2="524.0" stroke="#44464c" stroke-width="2" stroke-dasharray="3 3" stroke-opacity="0.8"/>
<line x1="2564.1" y1="526.0" x2="2564.1" y2="555.0" stroke="#212227" stroke-width="2" />
<line x1="2692.8" y1="238.6" x2="2692.8" y2="524.0" stroke="#44464c" stroke-width="2" stroke-dasharray="3 3" stroke-opacity="0.8"/>
<line x1="2692.8" y1="526.0" x2="2692.8" y2="555.0" stroke="#212227" stroke-width="2" />
<line x1="2821.5" y1="238.6" x2="2821.5" y2="524.0" stroke="#44464c" stroke-width="2" stroke-dasharray="3 3" stroke-opacity="0.8"/>
<line x1="2821.5" y1="526.0" x2="2821.5" y2="555.0" stroke="#212227" stroke-width="2" />
<line x1="2950.2" y1="238.6" x2="2950.2" y2="524.0" stroke="#44464c" stroke-width="2" stroke-dasharray="3 3" stroke-opacity="0.8"/>
<line x1="2950.2" y1="526.0" x2="2950.2" y2="555.0" stroke="#212227" stroke-width="2" />
<line x1="3079.0" y1="238.6" x2="3079.0" y2="524.0" stroke="#44464c" stroke-width="2" stroke-dasharray="3 3" stroke-opacity="0.8"/>
<line x1="3079.0" y1="526.0" x2="3079.0" y2="555.0" stroke="#212227" stroke-width="2" />
<line x1="3207.7" y1="238.6" x2="3207.7" y2="524.0" stroke="#44464c" stroke-width="2" stroke-dasharray="3 3" stroke-opacity="0.8"/>
<line x1="3207.7" y1="526.0" x2="3207.7" y2="555.0" stroke="#212227" stroke-width="2" />
<line x1="3336.4" y1="238.6" x2="3336.4" y2="524.0" stroke="#44464c" stroke-width="2" stroke-dasharray="3 3" stroke-opacity="0.8"/>
<line x1="3336.4" y1="526.0" x2="3336.4" y2="555.0" stroke="#212227" stroke-width="2" />
<line x1="3465.1" y1="238.6" x2="3465.1" y2="524.0" stroke="#44464c" stroke-width="2" stroke-dasharray="3 3" stroke-opacity="0.8"/>
<line x1="3465.1" y1="526.0" x2="3465.1" y2="555.0" stroke="#212227" stroke-width="2" />
<line x1="762.0" y1="238.6" x2="762.0" y2="525.0" stroke="#8a8a8c" stroke-width="2" />
<text x="731.0" y="254.2" font-size="24" fill="#8c8d90" font-weight="normal" text-anchor="end" font-family="'Liberation Mono', monospace" >600</text>
<text x="731.0" y="346.3" font-size="24" fill="#8c8d90" font-weight="normal" text-anchor="end" font-family="'Liberation Mono', monospace" >400</text>
<text x="731.0" y="438.5" font-size="24" fill="#8c8d90" font-weight="normal" text-anchor="end" font-family="'Liberation Mono', monospace" >200</text>
<text x="731.0" y="530.8" font-size="24" fill="#8c8d90" font-weight="normal" text-anchor="end" font-family="'Liberation Mono', monospace" >0</text>
<text x="762.0" y="574.0" font-size="24" fill="#8a8b8e" font-weight="normal" text-anchor="middle" font-family="'Liberation Mono', monospace" >3:30pm</text>
<text x="890.7" y="574.0" font-size="24" fill="#8a8b8e" font-weight="normal" text-anchor="middle" font-family="'Liberation Mono', monospace" >3:45pm</text>
<text x="1019.4" y="574.0" font-size="24" fill="#8a8b8e" font-weight="normal" text-anchor="middle" font-family="'Liberation Mono', monospace" >4:00pm</text>
<text x="1148.2" y="574.0" font-size="24" fill="#8a8b8e" font-weight="normal" text-anchor="middle" font-family="'Liberation Mono', monospace" >4:15pm</text>
<text x="1276.9" y="574.0" font-size="24" fill="#8a8b8e" font-weight="normal" text-anchor="middle" font-family="'Liberation Mono', monospace" >4:30pm</text>
<text x="1405.6" y="574.0" font-size="24" fill="#8a8b8e" font-weight="normal" text-anchor="middle" font-family="'Liberation Mono', monospace" >4:45pm</text>
<text x="1534.3" y="574.0" font-size="24" fill="#8a8b8e" font-weight="normal" text-anchor="middle" font-family="'Liberation Mono', monospace" >5:00pm</text>
<text x="1663.0" y="574.0" font-size="24" fill="#8a8b8e" font-weight="normal" text-anchor="middle" font-family="'Liberation Mono', monospace" >5:15pm</text>
<text x="1791.8" y="574.0" font-size="24" fill="#8a8b8e" font-weight="normal" text-anchor="middle" font-family="'Liberation Mono', monospace" >5:30pm</text>
<text x="1920.5" y="574.0" font-size="24" fill="#8a8b8e" font-weight="normal" text-anchor="middle" font-family="'Liberation Mono', monospace" >5:45pm</text>
<text x="2049.2" y="574.0" font-size="24" fill="#8a8b8e" font-weight="normal" text-anchor="middle" font-family="'Liberation Mono', monospace" >6:00pm</text>
<text x="2177.9" y="574.0" font-size="24" fill="#8a8b8e" font-weight="normal" text-anchor="middle" font-family="'Liberation Mono', monospace" >6:15pm</text>
<text x="2306.6" y="574.0" font-size="24" fill="#8a8b8e" font-weight="normal" text-anchor="middle" font-family="'Liberation Mono', monospace" >6:30pm</text>
<text x="2435.4" y="574.0" font-size="24" fill="#8a8b8e" font-weight="normal" text-anchor="middle" font-family="'Liberation Mono', monospace" >6:45pm</text>
<text x="2564.1" y="574.0" font-size="24" fill="#8a8b8e" font-weight="normal" text-anchor="middle" font-family="'Liberation Mono', monospace" >7:00pm</text>
<text x="2692.8" y="574.0" font-size="24" fill="#8a8b8e" font-weight="normal" text-anchor="middle" font-family="'Liberation Mono', monospace" >7:15pm</text>
<text x="2821.5" y="574.0" font-size="24" fill="#8a8b8e" font-weight="normal" text-anchor="middle" font-family="'Liberation Mono', monospace" >7:30pm</text>
<text x="2950.2" y="574.0" font-size="24" fill="#8a8b8e" font-weight="normal" text-anchor="middle" font-family="'Liberation Mono', monospace" >7:45pm</text>
<text x="3079.0" y="574.0" font-size="24" fill="#8a8b8e" font-weight="normal" text-anchor="middle" font-family="'Liberation Mono', monospace" >8:00pm</text>
<text x="3207.7" y="574.0" font-size="24" fill="#8a8b8e" font-weight="normal" text-anchor="middle" font-family="'Liberation Mono', monospace" >8:15pm</text>
<text x="3336.4" y="574.0" font-size="24" fill="#8a8b8e" font-weight="normal" text-anchor="middle" font-family="'Liberation Mono', monospace" >8:30pm</text>
<text x="3465.1" y="574.0" font-size="24" fill="#8a8b8e" font-weight="normal" text-anchor="middle" font-family="'Liberation Mono', monospace" >8:45pm</text>
<text x="762.0" y="609.5" font-size="24" fill="#8a8b8e" font-weight="normal" text-anchor="middle" font-family="'Liberation Mono', monospace" >5/27/25</text>
<rect x="993.0" y="280.5" width="2486.0" height="168.0" fill="none" stroke="#4ef07c" stroke-width="2.5" rx="0" />
<rect x="993.5" y="216.5" width="307.0" height="53.0" fill="#1c1d22" stroke="#596070" stroke-width="2.2" rx="5" />
<text x="1010.5" y="251.0" font-size="24" fill="#e6e7ea" font-weight="normal" text-anchor="start" font-family="'Liberation Mono', monospace" >Filter by Selection</text>
<g opacity="0.55">
<rect x="3165.5" y="626.5" width="42.0" height="41.0" fill="#25262b" stroke="#393a40" stroke-width="2" rx="6" />
<path d="M3189.5 640 L3182.5 647 L3189.5 654" fill="none" stroke="#c1c2c5" stroke-width="2.2" stroke-linecap="round" stroke-linejoin="round"/>
</g>
<rect x="3224.5" y="625.5" width="44.0" height="43.0" fill="#0bc28d" stroke="none" stroke-width="0" rx="6" />
<text x="3246.5" y="656.5" font-size="24" fill="#ffffff" font-weight="normal" text-anchor="middle" font-family="'Liberation Sans', sans-serif" >1</text>
<g opacity="1">
<rect x="3285.5" y="626.5" width="42.0" height="41.0" fill="#25262b" stroke="#393a40" stroke-width="2" rx="6" />
<text x="3306.5" y="656.5" font-size="24" fill="#c9cacd" font-weight="normal" text-anchor="middle" font-family="'Liberation Sans', sans-serif" >2</text>
</g>
<g opacity="1">
<rect x="3345.5" y="626.5" width="42.0" height="41.0" fill="#25262b" stroke="#393a40" stroke-width="2" rx="6" />
<text x="3366.5" y="656.5" font-size="24" fill="#c9cacd" font-weight="normal" text-anchor="middle" font-family="'Liberation Sans', sans-serif" >3</text>
</g>
<g opacity="1">
<rect x="3405.5" y="626.5" width="42.0" height="41.0" fill="#25262b" stroke="#393a40" stroke-width="2" rx="6" />
<text x="3426.5" y="656.5" font-size="24" fill="#c9cacd" font-weight="normal" text-anchor="middle" font-family="'Liberation Sans', sans-serif" >4</text>
</g>
<g opacity="1">
<rect x="3465.5" y="626.5" width="42.0" height="41.0" fill="#25262b" stroke="#393a40" stroke-width="2" rx="6" />
<text x="3486.5" y="656.5" font-size="24" fill="#c9cacd" font-weight="normal" text-anchor="middle" font-family="'Liberation Sans', sans-serif" >5</text>
</g>
<g opacity="1">
<rect x="3525.5" y="626.5" width="42.0" height="41.0" fill="#25262b" stroke="#393a40" stroke-width="2" rx="6" />
<path d="M3543.5 640 L3550.5 647 L3543.5 654" fill="none" stroke="#c1c2c5" stroke-width="2.2" stroke-linecap="round" stroke-linejoin="round"/>
</g>
<text x="1001.2" y="726.7" font-size="24" fill="#b3b4b8" font-weight="normal" text-anchor="middle" font-family="'Liberation Mono', monospace" >SpanAttributes...yment.card_type</text>
<rect x="923.5" y="798.2" width="110.0" height="116.8" fill="#06d9a0" stroke="none" stroke-width="0" rx="0" />
<rect x="1089.5" y="734.8" width="110.0" height="180.2" fill="#f6165b" stroke="none" stroke-width="0" rx="0" />
<rect x="1203.5" y="852.2" width="110.0" height="62.8" fill="#06d9a0" stroke="none" stroke-width="0" rx="0" />
<line x1="781.5" y1="735.5" x2="781.5" y2="916.0" stroke="#7c7c7c" stroke-width="2" />
<line x1="769.5" y1="915.0" x2="1341.5" y2="915.0" stroke="#7c7c7c" stroke-width="2" />
<line x1="769.5" y1="735.5" x2="781.5" y2="735.5" stroke="#7c7c7c" stroke-width="2" />
<text x="765.0" y="758.0" font-size="22" fill="#808080" font-weight="normal" text-anchor="end" font-family="'Liberation Mono', monospace" >100</text>
<line x1="769.5" y1="825.2" x2="781.5" y2="825.2" stroke="#7c7c7c" stroke-width="2" />
<text x="765.0" y="832.2" font-size="22" fill="#808080" font-weight="normal" text-anchor="end" font-family="'Liberation Mono', monospace" >50</text>
<line x1="769.5" y1="870.1" x2="781.5" y2="870.1" stroke="#7c7c7c" stroke-width="2" />
<text x="765.0" y="877.1" font-size="22" fill="#808080" font-weight="normal" text-anchor="end" font-family="'Liberation Mono', monospace" >25</text>
<text x="765.0" y="922.0" font-size="22" fill="#808080" font-weight="normal" text-anchor="end" font-family="'Liberation Mono', monospace" >0</text>
<line x1="921.5" y1="915.0" x2="921.5" y2="926.5" stroke="#7c7c7c" stroke-width="2" />
<line x1="1201.5" y1="915.0" x2="1201.5" y2="926.5" stroke="#7c7c7c" stroke-width="2" />
<text x="922.0" y="945.4" font-size="20" fill="#808080" font-weight="normal" text-anchor="middle" font-family="'Liberation Mono', monospace" >mastercard</text>
<text x="1202.0" y="945.4" font-size="20" fill="#808080" font-weight="normal" text-anchor="middle" font-family="'Liberation Mono', monospace" >visa</text>
<text x="1713.5" y="726.7" font-size="24" fill="#b3b4b8" font-weight="normal" text-anchor="middle" font-family="'Liberation Mono', monospace" >SpanName</text>
<rect x="1589.1" y="852.2" width="72.7" height="62.8" fill="#06d9a0" stroke="none" stroke-width="0" rx="0" />
<rect x="1699.1" y="912.3" width="72.7" height="2.7" fill="#f6165b" stroke="none" stroke-width="0" rx="0" />
<rect x="1775.8" y="885.0" width="72.7" height="30.0" fill="#06d9a0" stroke="none" stroke-width="0" rx="0" />
<rect x="1885.7" y="738.0" width="72.7" height="177.0" fill="#f6165b" stroke="none" stroke-width="0" rx="0" />
<rect x="1962.4" y="827.2" width="72.7" height="87.8" fill="#06d9a0" stroke="none" stroke-width="0" rx="0" />
<line x1="1493.8" y1="735.5" x2="1493.8" y2="916.0" stroke="#7c7c7c" stroke-width="2" />
<line x1="1481.8" y1="915.0" x2="2053.8" y2="915.0" stroke="#7c7c7c" stroke-width="2" />
<line x1="1481.8" y1="735.5" x2="1493.8" y2="735.5" stroke="#7c7c7c" stroke-width="2" />
<text x="1477.2" y="758.0" font-size="22" fill="#808080" font-weight="normal" text-anchor="end" font-family="'Liberation Mono', monospace" >100</text>
<line x1="1481.8" y1="825.2" x2="1493.8" y2="825.2" stroke="#7c7c7c" stroke-width="2" />
<text x="1477.2" y="832.2" font-size="22" fill="#808080" font-weight="normal" text-anchor="end" font-family="'Liberation Mono', monospace" >50</text>
<line x1="1481.8" y1="870.1" x2="1493.8" y2="870.1" stroke="#7c7c7c" stroke-width="2" />
<text x="1477.2" y="877.1" font-size="22" fill="#808080" font-weight="normal" text-anchor="end" font-family="'Liberation Mono', monospace" >25</text>
<text x="1477.2" y="922.0" font-size="22" fill="#808080" font-weight="normal" text-anchor="end" font-family="'Liberation Mono', monospace" >0</text>
<line x1="1960.3" y1="915.0" x2="1960.3" y2="926.5" stroke="#7c7c7c" stroke-width="2" />
<text x="2053.5" y="945.4" font-size="20" fill="#808080" font-weight="normal" text-anchor="end" font-family="'Liberation Mono', monospace" >grpc.oteldemo.PaymentService/Charge</text>
<text x="2425.8" y="726.7" font-size="24" fill="#b3b4b8" font-weight="normal" text-anchor="middle" font-family="'Liberation Mono', monospace" >SpanKind</text>
<rect x="2234.0" y="912.3" width="110.0" height="2.7" fill="#f6165b" stroke="none" stroke-width="0" rx="0" />
<rect x="2348.0" y="823.2" width="110.0" height="91.8" fill="#06d9a0" stroke="none" stroke-width="0" rx="0" />
<rect x="2514.0" y="738.0" width="110.0" height="177.0" fill="#f6165b" stroke="none" stroke-width="0" rx="0" />
<rect x="2628.0" y="827.2" width="110.0" height="87.8" fill="#06d9a0" stroke="none" stroke-width="0" rx="0" />
<line x1="2206.0" y1="735.5" x2="2206.0" y2="916.0" stroke="#7c7c7c" stroke-width="2" />
<line x1="2194.0" y1="915.0" x2="2766.0" y2="915.0" stroke="#7c7c7c" stroke-width="2" />
<line x1="2194.0" y1="735.5" x2="2206.0" y2="735.5" stroke="#7c7c7c" stroke-width="2" />
<text x="2189.5" y="758.0" font-size="22" fill="#808080" font-weight="normal" text-anchor="end" font-family="'Liberation Mono', monospace" >100</text>
<line x1="2194.0" y1="825.2" x2="2206.0" y2="825.2" stroke="#7c7c7c" stroke-width="2" />
<text x="2189.5" y="832.2" font-size="22" fill="#808080" font-weight="normal" text-anchor="end" font-family="'Liberation Mono', monospace" >50</text>
<line x1="2194.0" y1="870.1" x2="2206.0" y2="870.1" stroke="#7c7c7c" stroke-width="2" />
<text x="2189.5" y="877.1" font-size="22" fill="#808080" font-weight="normal" text-anchor="end" font-family="'Liberation Mono', monospace" >25</text>
<text x="2189.5" y="922.0" font-size="22" fill="#808080" font-weight="normal" text-anchor="end" font-family="'Liberation Mono', monospace" >0</text>
<line x1="2346.0" y1="915.0" x2="2346.0" y2="926.5" stroke="#7c7c7c" stroke-width="2" />
<line x1="2626.0" y1="915.0" x2="2626.0" y2="926.5" stroke="#7c7c7c" stroke-width="2" />
<text x="2346.0" y="945.4" font-size="20" fill="#808080" font-weight="normal" text-anchor="middle" font-family="'Liberation Mono', monospace" >Internal</text>
<text x="2626.0" y="945.4" font-size="20" fill="#808080" font-weight="normal" text-anchor="middle" font-family="'Liberation Mono', monospace" >Server</text>
<text x="3138.0" y="726.7" font-size="24" fill="#b3b4b8" font-weight="normal" text-anchor="middle" font-family="'Liberation Mono', monospace" >ScopeName</text>
<rect x="3013.6" y="852.2" width="72.7" height="62.8" fill="#06d9a0" stroke="none" stroke-width="0" rx="0" />
<rect x="3123.6" y="738.0" width="72.7" height="177.0" fill="#f6165b" stroke="none" stroke-width="0" rx="0" />
<rect x="3200.2" y="827.2" width="72.7" height="87.8" fill="#06d9a0" stroke="none" stroke-width="0" rx="0" />
<rect x="3310.2" y="912.3" width="72.7" height="2.7" fill="#f6165b" stroke="none" stroke-width="0" rx="0" />
<rect x="3386.9" y="885.0" width="72.7" height="30.0" fill="#06d9a0" stroke="none" stroke-width="0" rx="0" />
<line x1="2918.2" y1="735.5" x2="2918.2" y2="916.0" stroke="#7c7c7c" stroke-width="2" />
<line x1="2906.2" y1="915.0" x2="3478.2" y2="915.0" stroke="#7c7c7c" stroke-width="2" />
<line x1="2906.2" y1="735.5" x2="2918.2" y2="735.5" stroke="#7c7c7c" stroke-width="2" />
<text x="2901.8" y="758.0" font-size="22" fill="#808080" font-weight="normal" text-anchor="end" font-family="'Liberation Mono', monospace" >100</text>
<line x1="2906.2" y1="825.2" x2="2918.2" y2="825.2" stroke="#7c7c7c" stroke-width="2" />
<text x="2901.8" y="832.2" font-size="22" fill="#808080" font-weight="normal" text-anchor="end" font-family="'Liberation Mono', monospace" >50</text>
<line x1="2906.2" y1="870.1" x2="2918.2" y2="870.1" stroke="#7c7c7c" stroke-width="2" />
<text x="2901.8" y="877.1" font-size="22" fill="#808080" font-weight="normal" text-anchor="end" font-family="'Liberation Mono', monospace" >25</text>
<text x="2901.8" y="922.0" font-size="22" fill="#808080" font-weight="normal" text-anchor="end" font-family="'Liberation Mono', monospace" >0</text>
<line x1="3011.6" y1="915.0" x2="3011.6" y2="926.5" stroke="#7c7c7c" stroke-width="2" />
<line x1="3198.2" y1="915.0" x2="3198.2" y2="926.5" stroke="#7c7c7c" stroke-width="2" />
<line x1="3384.9" y1="915.0" x2="3384.9" y2="926.5" stroke="#7c7c7c" stroke-width="2" />
<text x="3011.4" y="945.4" font-size="20" fill="#808080" font-weight="normal" text-anchor="middle" font-family="'Liberation Mono', monospace" >@hyperdx/instrumentation-exception</text>
<text x="3384.8" y="945.4" font-size="20" fill="#808080" font-weight="normal" text-anchor="middle" font-family="'Liberation Mono', monospace" >payment</text>
<text x="1001.2" y="998.7" font-size="24" fill="#b3b4b8" font-weight="normal" text-anchor="middle" font-family="'Liberation Mono', monospace" >ScopeVersion</text>
<rect x="800.2" y="1184.2" width="72.7" height="2.8" fill="#f6165b" stroke="none" stroke-width="0" rx="0" />
<rect x="876.8" y="1157.0" width="72.7" height="30.0" fill="#06d9a0" stroke="none" stroke-width="0" rx="0" />
<rect x="1063.5" y="1123.9" width="72.7" height="63.1" fill="#06d9a0" stroke="none" stroke-width="0" rx="0" />
<rect x="1173.5" y="1009.7" width="72.7" height="177.3" fill="#f6165b" stroke="none" stroke-width="0" rx="0" />
<rect x="1250.2" y="1099.1" width="72.7" height="87.9" fill="#06d9a0" stroke="none" stroke-width="0" rx="0" />
<line x1="781.5" y1="1007.5" x2="781.5" y2="1188.0" stroke="#7c7c7c" stroke-width="2" />
<line x1="769.5" y1="1187.0" x2="1341.5" y2="1187.0" stroke="#7c7c7c" stroke-width="2" />
<line x1="769.5" y1="1007.5" x2="781.5" y2="1007.5" stroke="#7c7c7c" stroke-width="2" />
<text x="765.0" y="1030.0" font-size="22" fill="#808080" font-weight="normal" text-anchor="end" font-family="'Liberation Mono', monospace" >100</text>
<line x1="769.5" y1="1097.2" x2="781.5" y2="1097.2" stroke="#7c7c7c" stroke-width="2" />
<text x="765.0" y="1104.2" font-size="22" fill="#808080" font-weight="normal" text-anchor="end" font-family="'Liberation Mono', monospace" >50</text>
<line x1="769.5" y1="1142.1" x2="781.5" y2="1142.1" stroke="#7c7c7c" stroke-width="2" />
<text x="765.0" y="1149.1" font-size="22" fill="#808080" font-weight="normal" text-anchor="end" font-family="'Liberation Mono', monospace" >25</text>
<text x="765.0" y="1194.0" font-size="22" fill="#808080" font-weight="normal" text-anchor="end" font-family="'Liberation Mono', monospace" >0</text>
<line x1="874.8" y1="1187.0" x2="874.8" y2="1198.5" stroke="#7c7c7c" stroke-width="2" />
<line x1="1061.5" y1="1187.0" x2="1061.5" y2="1198.5" stroke="#7c7c7c" stroke-width="2" />
<line x1="1248.2" y1="1187.0" x2="1248.2" y2="1198.5" stroke="#7c7c7c" stroke-width="2" />
<text x="1062.0" y="1217.4" font-size="20" fill="#808080" font-weight="normal" text-anchor="middle" font-family="'Liberation Mono', monospace" >0.1.0</text>
<text x="1248.5" y="1217.4" font-size="20" fill="#808080" font-weight="normal" text-anchor="middle" font-family="'Liberation Mono', monospace" >0.51.1</text>
<text x="1713.5" y="998.7" font-size="24" fill="#b3b4b8" font-weight="normal" text-anchor="middle" font-family="'Liberation Mono', monospace" >Duration</text>
<line x1="1493.8" y1="1007.5" x2="1493.8" y2="1188.0" stroke="#7c7c7c" stroke-width="2" />
<line x1="1481.8" y1="1187.0" x2="2053.8" y2="1187.0" stroke="#7c7c7c" stroke-width="2" />
<line x1="1481.8" y1="1007.5" x2="1493.8" y2="1007.5" stroke="#7c7c7c" stroke-width="2" />
<text x="1477.2" y="1030.0" font-size="22" fill="#808080" font-weight="normal" text-anchor="end" font-family="'Liberation Mono', monospace" >36</text>
<line x1="1481.8" y1="1097.2" x2="1493.8" y2="1097.2" stroke="#7c7c7c" stroke-width="2" />
<text x="1477.2" y="1104.2" font-size="22" fill="#808080" font-weight="normal" text-anchor="end" font-family="'Liberation Mono', monospace" >18</text>
<line x1="1481.8" y1="1142.1" x2="1493.8" y2="1142.1" stroke="#7c7c7c" stroke-width="2" />
<text x="1477.2" y="1149.1" font-size="22" fill="#808080" font-weight="normal" text-anchor="end" font-family="'Liberation Mono', monospace" >9</text>
<text x="1477.2" y="1194.0" font-size="22" fill="#808080" font-weight="normal" text-anchor="end" font-family="'Liberation Mono', monospace" >0</text>
<line x1="1543.5" y1="1187.0" x2="1543.5" y2="1198.5" stroke="#7c7c7c" stroke-width="2" />
<line x1="1637.8" y1="1187.0" x2="1637.8" y2="1198.5" stroke="#7c7c7c" stroke-width="2" />
<line x1="1741.6" y1="1187.0" x2="1741.6" y2="1198.5" stroke="#7c7c7c" stroke-width="2" />
<line x1="1842.0" y1="1187.0" x2="1842.0" y2="1198.5" stroke="#7c7c7c" stroke-width="2" />
<line x1="1935.9" y1="1187.0" x2="1935.9" y2="1198.5" stroke="#7c7c7c" stroke-width="2" />
<line x1="2053.0" y1="1187.0" x2="2053.0" y2="1198.5" stroke="#7c7c7c" stroke-width="2" />
<text x="1543.5" y="1217.4" font-size="20" fill="#808080" font-weight="normal" text-anchor="middle" font-family="'Liberation Mono', monospace" >1333363</text>
<text x="1637.8" y="1217.4" font-size="20" fill="#808080" font-weight="normal" text-anchor="middle" font-family="'Liberation Mono', monospace" >1698314</text>
<text x="1741.6" y="1217.4" font-size="20" fill="#808080" font-weight="normal" text-anchor="middle" font-family="'Liberation Mono', monospace" >19961834</text>
<text x="1842.0" y="1217.4" font-size="20" fill="#808080" font-weight="normal" text-anchor="middle" font-family="'Liberation Mono', monospace" >2600849</text>
<text x="1935.9" y="1217.4" font-size="20" fill="#808080" font-weight="normal" text-anchor="middle" font-family="'Liberation Mono', monospace" >543017</text>
<text x="2053.5" y="1217.4" font-size="20" fill="#808080" font-weight="normal" text-anchor="end" font-family="'Liberation Mono', monospace" >999435</text>
<text x="2425.8" y="998.7" font-size="24" fill="#b3b4b8" font-weight="normal" text-anchor="middle" font-family="'Liberation Mono', monospace" >StatusCode</text>
<rect x="2348.0" y="1123.9" width="110.0" height="63.1" fill="#06d9a0" stroke="none" stroke-width="0" rx="0" />
<rect x="2514.0" y="1007.0" width="110.0" height="180.0" fill="#f6165b" stroke="none" stroke-width="0" rx="0" />
<rect x="2628.0" y="1070.0" width="110.0" height="117.0" fill="#06d9a0" stroke="none" stroke-width="0" rx="0" />
<line x1="2206.0" y1="1007.5" x2="2206.0" y2="1188.0" stroke="#7c7c7c" stroke-width="2" />
<line x1="2194.0" y1="1187.0" x2="2766.0" y2="1187.0" stroke="#7c7c7c" stroke-width="2" />
<line x1="2194.0" y1="1007.5" x2="2206.0" y2="1007.5" stroke="#7c7c7c" stroke-width="2" />
<text x="2189.5" y="1030.0" font-size="22" fill="#808080" font-weight="normal" text-anchor="end" font-family="'Liberation Mono', monospace" >100</text>
<line x1="2194.0" y1="1097.2" x2="2206.0" y2="1097.2" stroke="#7c7c7c" stroke-width="2" />
<text x="2189.5" y="1104.2" font-size="22" fill="#808080" font-weight="normal" text-anchor="end" font-family="'Liberation Mono', monospace" >50</text>
<line x1="2194.0" y1="1142.1" x2="2206.0" y2="1142.1" stroke="#7c7c7c" stroke-width="2" />
<text x="2189.5" y="1149.1" font-size="22" fill="#808080" font-weight="normal" text-anchor="end" font-family="'Liberation Mono', monospace" >25</text>
<text x="2189.5" y="1194.0" font-size="22" fill="#808080" font-weight="normal" text-anchor="end" font-family="'Liberation Mono', monospace" >0</text>
<line x1="2346.0" y1="1187.0" x2="2346.0" y2="1198.5" stroke="#7c7c7c" stroke-width="2" />
<line x1="2626.0" y1="1187.0" x2="2626.0" y2="1198.5" stroke="#7c7c7c" stroke-width="2" />
<text x="2346.0" y="1217.4" font-size="20" fill="#808080" font-weight="normal" text-anchor="middle" font-family="'Liberation Mono', monospace" >Error</text>
<text x="2626.0" y="1217.4" font-size="20" fill="#808080" font-weight="normal" text-anchor="middle" font-family="'Liberation Mono', monospace" >Unset</text>
<text x="3138.0" y="998.7" font-size="24" fill="#b3b4b8" font-weight="normal" text-anchor="middle" font-family="'Liberation Mono', monospace" >SpanAttributes...yment.timestamp</text>
<rect x="2919.2" y="1183" width="1.6" height="4" fill="#12a483"/><rect x="2921.9" y="1183" width="1.6" height="4" fill="#12a483"/><rect x="2924.6" y="1183" width="1.6" height="4" fill="#12a483"/><rect x="2927.3" y="1183" width="1.6" height="4" fill="#12a483"/><rect x="2930.0" y="1183" width="1.6" height="4" fill="#12a483"/><rect x="2932.7" y="1183" width="1.6" height="4" fill="#12a483"/><rect x="2935.4" y="1183" width="1.6" height="4" fill="#12a483"/><rect x="2938.1" y="1183" width="1.6" height="4" fill="#12a483"/><rect x="2940.8" y="1183" width="1.6" height="4" fill="#12a483"/><rect x="2943.5" y="1183" width="1.6" height="4" fill="#12a483"/><rect x="2946.2" y="1183" width="1.6" height="4" fill="#12a483"/><rect x="2948.9" y="1183" width="1.6" height="4" fill="#12a483"/><rect x="2951.6" y="1183" width="1.6" height="4" fill="#12a483"/><rect x="2954.3" y="1183" width="1.6" height="4" fill="#12a483"/><rect x="2957.0" y="1183" width="1.6" height="4" fill="#12a483"/><rect x="2959.7" y="1183" width="1.6" height="4" fill="#12a483"/><rect x="2962.4" y="1183" width="1.6" height="4" fill="#12a483"/><rect x="2965.1" y="1183" width="1.6" height="4" fill="#12a483"/><rect x="2967.8" y="1183" width="1.6" height="4" fill="#12a483"/><rect x="2970.5" y="1183" width="1.6" height="4" fill="#12a483"/><rect x="2973.2" y="1183" width="1.6" height="4" fill="#12a483"/><rect x="2975.9" y="1183" width="1.6" height="4" fill="#12a483"/><rect x="2978.6" y="1183" width="1.6" height="4" fill="#12a483"/><rect x="2981.3" y="1183" width="1.6" height="4" fill="#12a483"/><rect x="2984.0" y="1183" width="1.6" height="4" fill="#12a483"/><rect x="2986.7" y="1183" width="1.6" height="4" fill="#12a483"/><rect x="2989.4" y="1183" width="1.6" height="4" fill="#12a483"/><rect x="2992.1" y="1183" width="1.6" height="4" fill="#12a483"/><rect x="2994.8" y="1183" width="1.6" height="4" fill="#12a483"/><rect x="2997.5" y="1183" width="1.6" height="4" fill="#12a483"/><rect x="3000.2" y="1183" width="1.6" height="4" fill="#12a483"/><rect x="3002.9" y="1183" width="1.6" height="4" fill="#12a483"/><rect x="3005.6" y="1183" width="1.6" height="4" fill="#12a483"/><rect x="3008.3" y="1183" width="1.6" height="4" fill="#12a483"/><rect x="3011.0" y="1183" width="1.6" height="4" fill="#12a483"/><rect x="3013.7" y="1183" width="1.6" height="4" fill="#12a483"/><rect x="3016.4" y="1183" width="1.6" height="4" fill="#12a483"/><rect x="3019.1" y="1183" width="1.6" height="4" fill="#12a483"/><rect x="3021.8" y="1183" width="1.6" height="4" fill="#12a483"/><rect x="3024.5" y="1183" width="1.6" height="4" fill="#12a483"/><rect x="3027.2" y="1183" width="1.6" height="4" fill="#12a483"/><rect x="3029.9" y="1183" width="1.6" height="4" fill="#12a483"/><rect x="3032.6" y="1183" width="1.6" height="4" fill="#12a483"/><rect x="3035.3" y="1183" width="1.6" height="4" fill="#12a483"/><rect x="3038.0" y="1183" width="1.6" height="4" fill="#12a483"/><rect x="3040.7" y="1183" width="1.6" height="4" fill="#12a483"/><rect x="3043.4" y="1183" width="1.6" height="4" fill="#12a483"/><rect x="3046.1" y="1183" width="1.6" height="4" fill="#12a483"/><rect x="3048.8" y="1183" width="1.6" height="4" fill="#12a483"/><rect x="3051.5" y="1183" width="1.6" height="4" fill="#12a483"/><rect x="3054.2" y="1183" width="1.6" height="4" fill="#12a483"/><rect x="3056.9" y="1183" width="1.6" height="4" fill="#12a483"/><rect x="3059.6" y="1183" width="1.6" height="4" fill="#12a483"/><rect x="3062.3" y="1183" width="1.6" height="4" fill="#12a483"/><rect x="3065.0" y="1183" width="1.6" height="4" fill="#12a483"/><rect x="3067.7" y="1183" width="1.6" height="4" fill="#12a483"/><rect x="3070.4" y="1183" width="1.6" height="4" fill="#12a483"/><rect x="3073.1" y="1183" width="1.6" height="4" fill="#12a483"/><rect x="3075.8" y="1183" width="1.6" height="4" fill="#12a483"/><rect x="3078.5" y="1183" width="1.6" height="4" fill="#12a483"/><rect x="3081.2" y="1183" width="1.6" height="4" fill="#12a483"/><rect x="3083.9" y="1183" width="1.6" height="4" fill="#12a483"/><rect x="3086.6" y="1183" width="1.6" height="4" fill="#12a483"/><rect x="3089.3" y="1183" width="1.6" height="4" fill="#12a483"/><rect x="3092.0" y="1183" width="1.6" height="4" fill="#12a483"/><rect x="3094.7" y="1183" width="1.6" height="4" fill="#12a483"/><rect x="3097.4" y="1183" width="1.6" height="4" fill="#12a483"/><rect x="3100.1" y="1183" width="1.6" height="4" fill="#12a483"/><rect x="3102.8" y="1183" width="1.6" height="4" fill="#12a483"/><rect x="3105.5" y="1183" width="1.6" height="4" fill="#12a483"/><rect x="3108.2" y="1183" width="1.6" height="4" fill="#12a483"/><rect x="3110.9" y="1183" width="1.6" height="4" fill="#12a483"/><rect x="3113.6" y="1183" width="1.6" height="4" fill="#12a483"/><rect x="3116.3" y="1183" width="1.6" height="4" fill="#12a483"/><rect x="3119.0" y="1183" width="1.6" height="4" fill="#12a483"/><rect x="3121.7" y="1183" width="1.6" height="4" fill="#12a483"/><rect x="3124.4" y="1183" width="1.6" height="4" fill="#12a483"/><rect x="3127.1" y="1183" width="1.6" height="4" fill="#12a483"/><rect x="3129.8" y="1183" width="1.6" height="4" fill="#12a483"/><rect x="3132.5" y="1183" width="1.6" height="4" fill="#12a483"/><rect x="3135.2" y="1183" width="1.6" height="4" fill="#12a483"/><rect x="3137.9" y="1183" width="1.6" height="4" fill="#12a483"/><rect x="3140.6" y="1183" width="1.6" height="4" fill="#12a483"/><rect x="3143.3" y="1183" width="1.6" height="4" fill="#12a483"/><rect x="3146.0" y="1183" width="1.6" height="4" fill="#12a483"/><rect x="3148.7" y="1183" width="1.6" height="4" fill="#12a483"/><rect x="3151.4" y="1183" width="1.6" height="4" fill="#12a483"/><rect x="3154.1" y="1183" width="1.6" height="4" fill="#12a483"/><rect x="3156.8" y="1183" width="1.6" height="4" fill="#12a483"/><rect x="3159.5" y="1183" width="1.6" height="4" fill="#12a483"/><rect x="3162.2" y="1183" width="1.6" height="4" fill="#12a483"/><rect x="3164.9" y="1183" width="1.6" height="4" fill="#12a483"/><rect x="3167.6" y="1183" width="1.6" height="4" fill="#12a483"/><rect x="3170.3" y="1183" width="1.6" height="4" fill="#12a483"/><rect x="3173.0" y="1183" width="1.6" height="4" fill="#12a483"/><rect x="3175.7" y="1183" width="1.6" height="4" fill="#12a483"/><rect x="3178.4" y="1183" width="1.6" height="4" fill="#12a483"/><rect x="3181.1" y="1183" width="1.6" height="4" fill="#12a483"/><rect x="3183.8" y="1183" width="1.6" height="4" fill="#12a483"/><rect x="3186.5" y="1183" width="1.6" height="4" fill="#12a483"/><rect x="3189.2" y="1183" width="1.6" height="4" fill="#12a483"/><rect x="3191.9" y="1183" width="1.6" height="4" fill="#12a483"/><rect x="3194.6" y="1183" width="1.6" height="4" fill="#12a483"/><rect x="3197.3" y="1183" width="1.6" height="4" fill="#12a483"/><rect x="3200.0" y="1183" width="1.6" height="4" fill="#12a483"/><rect x="3202.7" y="1183" width="1.6" height="4" fill="#12a483"/><rect x="3205.4" y="1183" width="1.6" height="4" fill="#12a483"/><rect x="3208.1" y="1183" width="1.6" height="4" fill="#12a483"/><rect x="3210.8" y="1183" width="1.6" height="4" fill="#12a483"/><rect x="3213.5" y="1183" width="1.6" height="4" fill="#12a483"/><rect x="3216.2" y="1183" width="1.6" height="4" fill="#12a483"/><rect x="3218.9" y="1183" width="1.6" height="4" fill="#12a483"/><rect x="3221.6" y="1183" width="1.6" height="4" fill="#12a483"/><rect x="3224.3" y="1183" width="1.6" height="4" fill="#12a483"/><rect x="3227.0" y="1183" width="1.6" height="4" fill="#12a483"/><rect x="3229.7" y="1183" width="1.6" height="4" fill="#12a483"/><rect x="3232.4" y="1183" width="1.6" height="4" fill="#12a483"/><rect x="3235.1" y="1183" width="1.6" height="4" fill="#12a483"/><rect x="3237.8" y="1183" width="1.6" height="4" fill="#12a483"/><rect x="3240.5" y="1183" width="1.6" height="4" fill="#12a483"/><rect x="3243.2" y="1183" width="1.6" height="4" fill="#12a483"/><rect x="3245.9" y="1183" width="1.6" height="4" fill="#12a483"/><rect x="3248.6" y="1183" width="1.6" height="4" fill="#12a483"/><rect x="3251.3" y="1183" width="1.6" height="4" fill="#12a483"/><rect x="3254.0" y="1183" width="1.6" height="4" fill="#12a483"/><rect x="3256.7" y="1183" width="1.6" height="4" fill="#12a483"/><rect x="3259.4" y="1183" width="1.6" height="4" fill="#12a483"/><rect x="3262.1" y="1183" width="1.6" height="4" fill="#12a483"/><rect x="3264.8" y="1183" width="1.6" height="4" fill="#12a483"/><rect x="3267.5" y="1183" width="1.6" height="4" fill="#12a483"/><rect x="3270.2" y="1183" width="1.6" height="4" fill="#12a483"/><rect x="3272.9" y="1183" width="1.6" height="4" fill="#12a483"/><rect x="3275.6" y="1183" width="1.6" height="4" fill="#12a483"/><rect x="3278.3" y="1183" width="1.6" height="4" fill="#12a483"/><rect x="3281.0" y="1183" width="1.6" height="4" fill="#12a483"/><rect x="3283.7" y="1183" width="1.6" height="4" fill="#12a483"/><rect x="3286.4" y="1183" width="1.6" height="4" fill="#12a483"/><rect x="3289.1" y="1183" width="1.6" height="4" fill="#12a483"/><rect x="3291.8" y="1183" width="1.6" height="4" fill="#12a483"/><rect x="3294.5" y="1183" width="1.6" height="4" fill="#12a483"/><rect x="3297.2" y="1183" width="1.6" height="4" fill="#12a483"/><rect x="3299.9" y="1183" width="1.6" height="4" fill="#12a483"/><rect x="3302.6" y="1183" width="1.6" height="4" fill="#12a483"/><rect x="3305.3" y="1183" width="1.6" height="4" fill="#12a483"/><rect x="3308.0" y="1183" width="1.6" height="4" fill="#12a483"/><rect x="3310.7" y="1183" width="1.6" height="4" fill="#12a483"/><rect x="3313.4" y="1183" width="1.6" height="4" fill="#12a483"/><rect x="3316.1" y="1183" width="1.6" height="4" fill="#12a483"/><rect x="3318.8" y="1183" width="1.6" height="4" fill="#12a483"/><rect x="3321.5" y="1183" width="1.6" height="4" fill="#12a483"/><rect x="3324.2" y="1183" width="1.6" height="4" fill="#12a483"/><rect x="3326.9" y="1183" width="1.6" height="4" fill="#12a483"/><rect x="3329.6" y="1183" width="1.6" height="4" fill="#12a483"/><rect x="3332.3" y="1183" width="1.6" height="4" fill="#12a483"/><rect x="3335.0" y="1183" width="1.6" height="4" fill="#12a483"/><rect x="3337.7" y="1183" width="1.6" height="4" fill="#12a483"/><rect x="3340.4" y="1183" width="1.6" height="4" fill="#12a483"/><rect x="3343.1" y="1183" width="1.6" height="4" fill="#12a483"/><rect x="3345.8" y="1183" width="1.6" height="4" fill="#12a483"/><rect x="3348.5" y="1183" width="1.6" height="4" fill="#12a483"/><rect x="3351.2" y="1183" width="1.6" height="4" fill="#12a483"/><rect x="3353.9" y="1183" width="1.6" height="4" fill="#12a483"/><rect x="3356.6" y="1183" width="1.6" height="4" fill="#12a483"/><rect x="3359.3" y="1183" width="1.6" height="4" fill="#12a483"/><rect x="3362.0" y="1183" width="1.6" height="4" fill="#12a483"/><rect x="3364.7" y="1183" width="1.6" height="4" fill="#12a483"/><rect x="3367.4" y="1183" width="1.6" height="4" fill="#12a483"/><rect x="3370.1" y="1183" width="1.6" height="4" fill="#12a483"/><rect x="3372.8" y="1183" width="1.6" height="4" fill="#12a483"/><rect x="3375.5" y="1183" width="1.6" height="4" fill="#12a483"/><rect x="3378.2" y="1183" width="1.6" height="4" fill="#12a483"/><rect x="3380.9" y="1183" width="1.6" height="4" fill="#12a483"/><rect x="3383.6" y="1183" width="1.6" height="4" fill="#12a483"/><rect x="3386.3" y="1183" width="1.6" height="4" fill="#12a483"/><rect x="3389.0" y="1183" width="1.6" height="4" fill="#12a483"/><rect x="3391.7" y="1183" width="1.6" height="4" fill="#12a483"/><rect x="3394.4" y="1183" width="1.6" height="4" fill="#12a483"/><rect x="3397.1" y="1183" width="1.6" height="4" fill="#12a483"/><rect x="3399.8" y="1183" width="1.6" height="4" fill="#12a483"/><rect x="3402.5" y="1183" width="1.6" height="4" fill="#12a483"/><rect x="3405.2" y="1183" width="1.6" height="4" fill="#12a483"/><rect x="3407.9" y="1183" width="1.6" height="4" fill="#12a483"/><rect x="3410.6" y="1183" width="1.6" height="4" fill="#12a483"/><rect x="3413.3" y="1183" width="1.6" height="4" fill="#12a483"/><rect x="3416.0" y="1183" width="1.6" height="4" fill="#12a483"/><rect x="3418.7" y="1183" width="1.6" height="4" fill="#12a483"/><rect x="3421.4" y="1183" width="1.6" height="4" fill="#12a483"/><rect x="3424.1" y="1183" width="1.6" height="4" fill="#12a483"/><rect x="3426.8" y="1183" width="1.6" height="4" fill="#12a483"/><rect x="3429.5" y="1183" width="1.6" height="4" fill="#12a483"/><rect x="3432.2" y="1183" width="1.6" height="4" fill="#12a483"/><rect x="3434.9" y="1183" width="1.6" height="4" fill="#12a483"/><rect x="3437.6" y="1183" width="1.6" height="4" fill="#12a483"/><rect x="3440.3" y="1183" width="1.6" height="4" fill="#12a483"/><rect x="3443.0" y="1183" width="1.6" height="4" fill="#12a483"/><rect x="3445.7" y="1183" width="1.6" height="4" fill="#12a483"/><rect x="3448.4" y="1183" width="1.6" height="4" fill="#12a483"/><rect x="3451.1" y="1183" width="1.6" height="4" fill="#12a483"/><rect x="3453.8" y="1183" width="1.6" height="4" fill="#12a483"/><rect x="3456.5" y="1183" width="1.6" height="4" fill="#12a483"/><rect x="3459.2" y="1183" width="1.6" height="4" fill="#12a483"/><rect x="3461.9" y="1183" width="1.6" height="4" fill="#12a483"/><rect x="3464.6" y="1183" width="1.6" height="4" fill="#12a483"/><rect x="3467.3" y="1183" width="1.6" height="4" fill="#12a483"/><rect x="3470.0" y="1183" width="1.6" height="4" fill="#12a483"/><rect x="3472.7" y="1183" width="1.6" height="4" fill="#12a483"/><rect x="3475.4" y="1183" width="1.6" height="4" fill="#12a483"/><rect x="3478.1" y="1183" width="1.6" height="4" fill="#12a483"/>
<rect x="3069.8" y="1026.0" width="1.3" height="161.0" fill="#b81a4f" stroke="none" stroke-width="0" rx="0" />
<rect x="3071.8" y="1026.0" width="1.3" height="161.0" fill="#b81a4f" stroke="none" stroke-width="0" rx="0" />
<rect x="3078.7" y="1026.0" width="1.3" height="161.0" fill="#b81a4f" stroke="none" stroke-width="0" rx="0" />
<rect x="3084.7" y="1026.0" width="1.3" height="161.0" fill="#b81a4f" stroke="none" stroke-width="0" rx="0" />
<rect x="3086.5" y="1026.0" width="1.3" height="161.0" fill="#b81a4f" stroke="none" stroke-width="0" rx="0" />
<rect x="3093.7" y="1026.0" width="1.3" height="161.0" fill="#b81a4f" stroke="none" stroke-width="0" rx="0" />
<rect x="3101.5" y="1026.0" width="1.3" height="161.0" fill="#b81a4f" stroke="none" stroke-width="0" rx="0" />
<line x1="2918.2" y1="1007.5" x2="2918.2" y2="1188.0" stroke="#7c7c7c" stroke-width="2" />
<line x1="2906.2" y1="1187.0" x2="3478.2" y2="1187.0" stroke="#7c7c7c" stroke-width="2" />
<line x1="2906.2" y1="1007.5" x2="2918.2" y2="1007.5" stroke="#7c7c7c" stroke-width="2" />
<text x="2901.8" y="1030.0" font-size="22" fill="#808080" font-weight="normal" text-anchor="end" font-family="'Liberation Mono', monospace" >16</text>
<line x1="2906.2" y1="1097.2" x2="2918.2" y2="1097.2" stroke="#7c7c7c" stroke-width="2" />
<text x="2901.8" y="1104.2" font-size="22" fill="#808080" font-weight="normal" text-anchor="end" font-family="'Liberation Mono', monospace" >8</text>
<line x1="2906.2" y1="1142.1" x2="2918.2" y2="1142.1" stroke="#7c7c7c" stroke-width="2" />
<text x="2901.8" y="1149.1" font-size="22" fill="#808080" font-weight="normal" text-anchor="end" font-family="'Liberation Mono', monospace" >4</text>
<text x="2901.8" y="1194.0" font-size="22" fill="#808080" font-weight="normal" text-anchor="end" font-family="'Liberation Mono', monospace" >0</text>
<line x1="3066.8" y1="1187.0" x2="3066.8" y2="1198.5" stroke="#7c7c7c" stroke-width="2" />
<line x1="3233.4" y1="1187.0" x2="3233.4" y2="1198.5" stroke="#7c7c7c" stroke-width="2" />
<line x1="3476.6" y1="1187.0" x2="3476.6" y2="1198.5" stroke="#7c7c7c" stroke-width="2" />
<text x="3066.8" y="1217.4" font-size="20" fill="#808080" font-weight="normal" text-anchor="middle" font-family="'Liberation Mono', monospace" >1748192273433</text>
<text x="3233.4" y="1217.4" font-size="20" fill="#808080" font-weight="normal" text-anchor="middle" font-family="'Liberation Mono', monospace" >1748199880789</text>
<text x="3477.0" y="1217.4" font-size="20" fill="#808080" font-weight="normal" text-anchor="end" font-family="'Liberation Mono', monospace" >1748393738536</text>
<text x="1001.2" y="1270.7" font-size="24" fill="#b3b4b8" font-weight="normal" text-anchor="middle" font-family="'Liberation Mono', monospace" >SpanAttributes.cache.size</text>
<rect x="787.0" y="1444.7" width="1.6" height="14.3" fill="#0fae84"/><rect x="793.5" y="1444.7" width="1.6" height="14.3" fill="#0fae84"/><rect x="800.0" y="1444.7" width="1.6" height="14.3" fill="#0fae84"/><rect x="806.5" y="1444.7" width="1.6" height="14.3" fill="#0fae84"/><rect x="813.0" y="1444.7" width="1.6" height="14.3" fill="#0fae84"/><rect x="819.5" y="1444.7" width="1.6" height="14.3" fill="#0fae84"/><rect x="826.0" y="1444.7" width="1.6" height="14.3" fill="#0fae84"/><rect x="832.5" y="1444.7" width="1.6" height="14.3" fill="#0fae84"/><rect x="839.0" y="1444.7" width="1.6" height="14.3" fill="#0fae84"/><rect x="845.5" y="1444.7" width="1.6" height="14.3" fill="#0fae84"/><rect x="852.0" y="1444.7" width="1.6" height="14.3" fill="#0fae84"/><rect x="858.5" y="1444.7" width="1.6" height="14.3" fill="#0fae84"/><rect x="865.0" y="1444.7" width="1.6" height="14.3" fill="#0fae84"/><rect x="871.5" y="1444.7" width="1.6" height="14.3" fill="#0fae84"/><rect x="878.0" y="1444.7" width="1.6" height="14.3" fill="#0fae84"/><rect x="884.5" y="1444.7" width="1.6" height="14.3" fill="#0fae84"/><rect x="891.0" y="1444.7" width="1.6" height="14.3" fill="#0fae84"/><rect x="897.5" y="1444.7" width="1.6" height="14.3" fill="#0fae84"/><rect x="904.0" y="1444.7" width="1.6" height="14.3" fill="#0fae84"/><rect x="910.5" y="1444.7" width="1.6" height="14.3" fill="#0fae84"/><rect x="917.0" y="1444.7" width="1.6" height="14.3" fill="#0fae84"/><rect x="923.5" y="1444.7" width="1.6" height="14.3" fill="#0fae84"/><rect x="930.0" y="1444.7" width="1.6" height="14.3" fill="#0fae84"/><rect x="936.5" y="1444.7" width="1.6" height="14.3" fill="#0fae84"/><rect x="943.0" y="1444.7" width="1.6" height="14.3" fill="#0fae84"/><rect x="949.5" y="1444.7" width="1.6" height="14.3" fill="#0fae84"/><rect x="956.0" y="1444.7" width="1.6" height="14.3" fill="#0fae84"/><rect x="962.5" y="1444.7" width="1.6" height="14.3" fill="#0fae84"/><rect x="969.0" y="1444.7" width="1.6" height="14.3" fill="#0fae84"/><rect x="975.5" y="1444.7" width="1.6" height="14.3" fill="#0fae84"/><rect x="982.0" y="1444.7" width="1.6" height="14.3" fill="#0fae84"/><rect x="988.5" y="1444.7" width="1.6" height="14.3" fill="#0fae84"/><rect x="995.0" y="1444.7" width="1.6" height="14.3" fill="#0fae84"/><rect x="1001.5" y="1444.7" width="1.6" height="14.3" fill="#0fae84"/><rect x="1008.0" y="1444.7" width="1.6" height="14.3" fill="#0fae84"/><rect x="1014.5" y="1444.7" width="1.6" height="14.3" fill="#0fae84"/><rect x="1021.0" y="1444.7" width="1.6" height="14.3" fill="#0fae84"/><rect x="1027.5" y="1444.7" width="1.6" height="14.3" fill="#0fae84"/><rect x="1034.0" y="1444.7" width="1.6" height="14.3" fill="#0fae84"/><rect x="1040.5" y="1444.7" width="1.6" height="14.3" fill="#0fae84"/><rect x="1047.0" y="1444.7" width="1.6" height="14.3" fill="#0fae84"/><rect x="1053.5" y="1444.7" width="1.6" height="14.3" fill="#0fae84"/><rect x="1060.0" y="1444.7" width="1.6" height="14.3" fill="#0fae84"/><rect x="1066.5" y="1444.7" width="1.6" height="14.3" fill="#0fae84"/><rect x="1073.0" y="1444.7" width="1.6" height="14.3" fill="#0fae84"/><rect x="1079.5" y="1444.7" width="1.6" height="14.3" fill="#0fae84"/><rect x="1086.0" y="1444.7" width="1.6" height="14.3" fill="#0fae84"/><rect x="1092.5" y="1444.7" width="1.6" height="14.3" fill="#0fae84"/><rect x="1099.0" y="1444.7" width="1.6" height="14.3" fill="#0fae84"/><rect x="1105.5" y="1444.7" width="1.6" height="14.3" fill="#0fae84"/><rect x="1112.0" y="1444.7" width="1.6" height="14.3" fill="#0fae84"/><rect x="1118.5" y="1444.7" width="1.6" height="14.3" fill="#0fae84"/><rect x="1125.0" y="1444.7" width="1.6" height="14.3" fill="#0fae84"/><rect x="1131.5" y="1444.7" width="1.6" height="14.3" fill="#0fae84"/><rect x="1138.0" y="1444.7" width="1.6" height="14.3" fill="#0fae84"/><rect x="1144.5" y="1444.7" width="1.6" height="14.3" fill="#0fae84"/><rect x="1151.0" y="1444.7" width="1.6" height="14.3" fill="#0fae84"/><rect x="1157.5" y="1444.7" width="1.6" height="14.3" fill="#0fae84"/><rect x="1164.0" y="1444.7" width="1.6" height="14.3" fill="#0fae84"/><rect x="1170.5" y="1444.7" width="1.6" height="14.3" fill="#0fae84"/><rect x="1177.0" y="1444.7" width="1.6" height="14.3" fill="#0fae84"/><rect x="1183.5" y="1444.7" width="1.6" height="14.3" fill="#0fae84"/><rect x="1190.0" y="1444.7" width="1.6" height="14.3" fill="#0fae84"/><rect x="1196.5" y="1444.7" width="1.6" height="14.3" fill="#0fae84"/><rect x="1203.0" y="1444.7" width="1.6" height="14.3" fill="#0fae84"/><rect x="1209.5" y="1444.7" width="1.6" height="14.3" fill="#0fae84"/><rect x="1216.0" y="1444.7" width="1.6" height="14.3" fill="#0fae84"/><rect x="1222.5" y="1444.7" width="1.6" height="14.3" fill="#0fae84"/><rect x="1229.0" y="1444.7" width="1.6" height="14.3" fill="#0fae84"/><rect x="1235.5" y="1444.7" width="1.6" height="14.3" fill="#0fae84"/><rect x="1256.0" y="1444.7" width="1.6" height="14.3" fill="#0fae84"/><rect x="1262.5" y="1444.7" width="1.6" height="14.3" fill="#0fae84"/><rect x="1269.3" y="1444.7" width="1.6" height="14.3" fill="#0fae84"/><rect x="1282.3" y="1444.7" width="1.6" height="14.3" fill="#0fae84"/><rect x="1289.0" y="1444.7" width="1.6" height="14.3" fill="#0fae84"/><rect x="1308.7" y="1444.7" width="1.6" height="14.3" fill="#0fae84"/><rect x="1321.5" y="1444.7" width="1.6" height="14.3" fill="#0fae84"/><rect x="1328.3" y="1444.7" width="1.6" height="14.3" fill="#0fae84"/><rect x="1335.0" y="1444.7" width="1.6" height="14.3" fill="#0fae84"/>
<rect x="1237.9" y="1298.5" width="1.3" height="160.5" fill="#b81a4f" stroke="none" stroke-width="0" rx="0" />
<rect x="1244.8" y="1298.5" width="1.3" height="160.5" fill="#b81a4f" stroke="none" stroke-width="0" rx="0" />
<rect x="1270.8" y="1298.5" width="1.3" height="160.5" fill="#b81a4f" stroke="none" stroke-width="0" rx="0" />
<rect x="1289.8" y="1298.5" width="1.3" height="160.5" fill="#b81a4f" stroke="none" stroke-width="0" rx="0" />
<rect x="1296.6" y="1298.5" width="1.3" height="160.5" fill="#b81a4f" stroke="none" stroke-width="0" rx="0" />
<rect x="1309.9" y="1298.5" width="1.3" height="160.5" fill="#b81a4f" stroke="none" stroke-width="0" rx="0" />
<rect x="1335.8" y="1298.5" width="1.3" height="160.5" fill="#b81a4f" stroke="none" stroke-width="0" rx="0" />
<line x1="781.5" y1="1279.5" x2="781.5" y2="1460.0" stroke="#7c7c7c" stroke-width="2" />
<line x1="769.5" y1="1459.0" x2="1341.5" y2="1459.0" stroke="#7c7c7c" stroke-width="2" />
<line x1="769.5" y1="1279.5" x2="781.5" y2="1279.5" stroke="#7c7c7c" stroke-width="2" />
<text x="765.0" y="1302.0" font-size="22" fill="#808080" font-weight="normal" text-anchor="end" font-family="'Liberation Mono', monospace" >16</text>
<line x1="769.5" y1="1369.2" x2="781.5" y2="1369.2" stroke="#7c7c7c" stroke-width="2" />
<text x="765.0" y="1376.2" font-size="22" fill="#808080" font-weight="normal" text-anchor="end" font-family="'Liberation Mono', monospace" >8</text>
<line x1="769.5" y1="1414.1" x2="781.5" y2="1414.1" stroke="#7c7c7c" stroke-width="2" />
<text x="765.0" y="1421.1" font-size="22" fill="#808080" font-weight="normal" text-anchor="end" font-family="'Liberation Mono', monospace" >4</text>
<text x="765.0" y="1466.0" font-size="22" fill="#808080" font-weight="normal" text-anchor="end" font-family="'Liberation Mono', monospace" >0</text>
<line x1="810.9" y1="1459.0" x2="810.9" y2="1470.5" stroke="#7c7c7c" stroke-width="2" />
<line x1="882.9" y1="1459.0" x2="882.9" y2="1470.5" stroke="#7c7c7c" stroke-width="2" />
<line x1="954.6" y1="1459.0" x2="954.6" y2="1470.5" stroke="#7c7c7c" stroke-width="2" />
<line x1="1026.0" y1="1459.0" x2="1026.0" y2="1470.5" stroke="#7c7c7c" stroke-width="2" />
<line x1="1097.6" y1="1459.0" x2="1097.6" y2="1470.5" stroke="#7c7c7c" stroke-width="2" />
<line x1="1169.3" y1="1459.0" x2="1169.3" y2="1470.5" stroke="#7c7c7c" stroke-width="2" />
<line x1="1240.8" y1="1459.0" x2="1240.8" y2="1470.5" stroke="#7c7c7c" stroke-width="2" />
<line x1="1338.6" y1="1459.0" x2="1338.6" y2="1470.5" stroke="#7c7c7c" stroke-width="2" />
<text x="810.9" y="1489.4" font-size="20" fill="#808080" font-weight="normal" text-anchor="middle" font-family="'Liberation Mono', monospace" >89835</text>
<text x="882.9" y="1489.4" font-size="20" fill="#808080" font-weight="normal" text-anchor="middle" font-family="'Liberation Mono', monospace" >91063</text>
<text x="954.6" y="1489.4" font-size="20" fill="#808080" font-weight="normal" text-anchor="middle" font-family="'Liberation Mono', monospace" >92953</text>
<text x="1026.0" y="1489.4" font-size="20" fill="#808080" font-weight="normal" text-anchor="middle" font-family="'Liberation Mono', monospace" >94365</text>
<text x="1097.6" y="1489.4" font-size="20" fill="#808080" font-weight="normal" text-anchor="middle" font-family="'Liberation Mono', monospace" >96139</text>
<text x="1169.3" y="1489.4" font-size="20" fill="#808080" font-weight="normal" text-anchor="middle" font-family="'Liberation Mono', monospace" >97730</text>
<text x="1240.8" y="1489.4" font-size="20" fill="#808080" font-weight="normal" text-anchor="middle" font-family="'Liberation Mono', monospace" >98338</text>
<text x="1341.0" y="1489.4" font-size="20" fill="#808080" font-weight="normal" text-anchor="end" font-family="'Liberation Mono', monospace" >99900</text>
<text x="1713.5" y="1270.7" font-size="24" fill="#b3b4b8" font-weight="normal" text-anchor="middle" font-family="'Liberation Mono', monospace" >SpanAttributes.app.loyalty.level</text>
<rect x="1507.8" y="1298.0" width="54.0" height="161.0" fill="#f6165b" stroke="none" stroke-width="0" rx="0" />
<rect x="1565.8" y="1318.9" width="54.0" height="140.1" fill="#06d9a0" stroke="none" stroke-width="0" rx="0" />
<rect x="1647.8" y="1298.0" width="54.0" height="161.0" fill="#f6165b" stroke="none" stroke-width="0" rx="0" />
<rect x="1705.8" y="1317.0" width="54.0" height="142.0" fill="#06d9a0" stroke="none" stroke-width="0" rx="0" />
<rect x="1787.8" y="1298.0" width="54.0" height="161.0" fill="#f6165b" stroke="none" stroke-width="0" rx="0" />
<rect x="1845.8" y="1310.7" width="54.0" height="148.3" fill="#06d9a0" stroke="none" stroke-width="0" rx="0" />
<rect x="1927.8" y="1378.9" width="54.0" height="80.1" fill="#f6165b" stroke="none" stroke-width="0" rx="0" />
<rect x="1985.8" y="1327.0" width="54.0" height="132.0" fill="#06d9a0" stroke="none" stroke-width="0" rx="0" />
<line x1="1493.8" y1="1279.5" x2="1493.8" y2="1460.0" stroke="#7c7c7c" stroke-width="2" />
<line x1="1481.8" y1="1459.0" x2="2053.8" y2="1459.0" stroke="#7c7c7c" stroke-width="2" />
<line x1="1481.8" y1="1279.5" x2="1493.8" y2="1279.5" stroke="#7c7c7c" stroke-width="2" />
<text x="1477.2" y="1302.0" font-size="22" fill="#808080" font-weight="normal" text-anchor="end" font-family="'Liberation Mono', monospace" >32</text>
<line x1="1481.8" y1="1369.2" x2="1493.8" y2="1369.2" stroke="#7c7c7c" stroke-width="2" />
<text x="1477.2" y="1376.2" font-size="22" fill="#808080" font-weight="normal" text-anchor="end" font-family="'Liberation Mono', monospace" >16</text>
<line x1="1481.8" y1="1414.1" x2="1493.8" y2="1414.1" stroke="#7c7c7c" stroke-width="2" />
<text x="1477.2" y="1421.1" font-size="22" fill="#808080" font-weight="normal" text-anchor="end" font-family="'Liberation Mono', monospace" >8</text>
<text x="1477.2" y="1466.0" font-size="22" fill="#808080" font-weight="normal" text-anchor="end" font-family="'Liberation Mono', monospace" >0</text>
<line x1="1563.8" y1="1459.0" x2="1563.8" y2="1470.5" stroke="#7c7c7c" stroke-width="2" />
<line x1="1703.8" y1="1459.0" x2="1703.8" y2="1470.5" stroke="#7c7c7c" stroke-width="2" />
<line x1="1843.8" y1="1459.0" x2="1843.8" y2="1470.5" stroke="#7c7c7c" stroke-width="2" />
<line x1="1983.8" y1="1459.0" x2="1983.8" y2="1470.5" stroke="#7c7c7c" stroke-width="2" />
<text x="1563.8" y="1489.4" font-size="20" fill="#808080" font-weight="normal" text-anchor="middle" font-family="'Liberation Mono', monospace" >bronze</text>
<text x="1703.8" y="1489.4" font-size="20" fill="#808080" font-weight="normal" text-anchor="middle" font-family="'Liberation Mono', monospace" >gold</text>
<text x="1843.8" y="1489.4" font-size="20" fill="#808080" font-weight="normal" text-anchor="middle" font-family="'Liberation Mono', monospace" >platinum</text>
<text x="1983.8" y="1489.4" font-size="20" fill="#808080" font-weight="normal" text-anchor="middle" font-family="'Liberation Mono', monospace" >silver</text>
<text x="2425.8" y="1270.7" font-size="24" fill="#b3b4b8" font-weight="normal" text-anchor="middle" font-family="'Liberation Mono', monospace" >Timestamp</text>
<rect x="2206.0" y="1429.2" width="560.0" height="29.8" fill="#0f6e5a"/><rect x="2207.0" y="1429.2" width="1" height="29.8" fill="#0a4d40" fill-opacity="0.38"/><rect x="2210.0" y="1429.2" width="1" height="29.8" fill="#0a4d40" fill-opacity="0.56"/><rect x="2213.0" y="1429.2" width="1" height="29.8" fill="#0a4d40" fill-opacity="0.58"/><rect x="2215.5" y="1429.2" width="1" height="29.8" fill="#0a4d40" fill-opacity="0.34"/><rect x="2218.5" y="1429.2" width="1" height="29.8" fill="#0a4d40" fill-opacity="0.61"/><rect x="2221.5" y="1429.2" width="1" height="29.8" fill="#0a4d40" fill-opacity="0.61"/><rect x="2229.0" y="1429.2" width="1" height="29.8" fill="#0a4d40" fill-opacity="0.63"/><rect x="2234.5" y="1429.2" width="1" height="29.8" fill="#0a4d40" fill-opacity="0.52"/><rect x="2237.5" y="1429.2" width="1" height="29.8" fill="#0a4d40" fill-opacity="0.54"/><rect x="2244.5" y="1429.2" width="1" height="29.8" fill="#0a4d40" fill-opacity="0.61"/><rect x="2246.5" y="1429.2" width="1" height="29.8" fill="#0a4d40" fill-opacity="0.66"/><rect x="2249.5" y="1429.2" width="1" height="29.8" fill="#0a4d40" fill-opacity="0.53"/><rect x="2251.5" y="1429.2" width="1" height="29.8" fill="#0a4d40" fill-opacity="0.70"/><rect x="2253.0" y="1429.2" width="1" height="29.8" fill="#0a4d40" fill-opacity="0.58"/><rect x="2256.0" y="1429.2" width="1" height="29.8" fill="#0a4d40" fill-opacity="0.57"/><rect x="2264.0" y="1429.2" width="1" height="29.8" fill="#0a4d40" fill-opacity="0.46"/><rect x="2265.5" y="1429.2" width="1" height="29.8" fill="#0a4d40" fill-opacity="0.64"/><rect x="2267.5" y="1429.2" width="1" height="29.8" fill="#0a4d40" fill-opacity="0.45"/><rect x="2269.0" y="1429.2" width="1" height="29.8" fill="#0a4d40" fill-opacity="0.45"/><rect x="2271.0" y="1429.2" width="1" height="29.8" fill="#0a4d40" fill-opacity="0.79"/><rect x="2273.0" y="1429.2" width="1" height="29.8" fill="#0a4d40" fill-opacity="0.36"/><rect x="2274.5" y="1429.2" width="1" height="29.8" fill="#0a4d40" fill-opacity="0.46"/><rect x="2276.5" y="1429.2" width="1" height="29.8" fill="#0a4d40" fill-opacity="0.48"/><rect x="2278.5" y="1429.2" width="1" height="29.8" fill="#0a4d40" fill-opacity="0.45"/><rect x="2285.0" y="1429.2" width="1" height="29.8" fill="#0a4d40" fill-opacity="0.72"/><rect x="2286.5" y="1429.2" width="1" height="29.8" fill="#0a4d40" fill-opacity="0.62"/><rect x="2292.5" y="1429.2" width="1" height="29.8" fill="#0a4d40" fill-opacity="0.75"/><rect x="2296.0" y="1429.2" width="1" height="29.8" fill="#0a4d40" fill-opacity="0.55"/><rect x="2304.0" y="1429.2" width="1" height="29.8" fill="#0a4d40" fill-opacity="0.59"/><rect x="2307.0" y="1429.2" width="1" height="29.8" fill="#0a4d40" fill-opacity="0.45"/><rect x="2309.5" y="1429.2" width="1" height="29.8" fill="#0a4d40" fill-opacity="0.45"/><rect x="2312.5" y="1429.2" width="1" height="29.8" fill="#0a4d40" fill-opacity="0.63"/><rect x="2319.5" y="1429.2" width="1" height="29.8" fill="#0a4d40" fill-opacity="0.32"/><rect x="2321.5" y="1429.2" width="1" height="29.8" fill="#0a4d40" fill-opacity="0.38"/><rect x="2323.5" y="1429.2" width="1" height="29.8" fill="#0a4d40" fill-opacity="0.44"/><rect x="2331.0" y="1429.2" width="1" height="29.8" fill="#0a4d40" fill-opacity="0.59"/><rect x="2336.0" y="1429.2" width="1" height="29.8" fill="#0a4d40" fill-opacity="0.43"/><rect x="2339.0" y="1429.2" width="1" height="29.8" fill="#0a4d40" fill-opacity="0.76"/><rect x="2342.5" y="1429.2" width="1" height="29.8" fill="#0a4d40" fill-opacity="0.57"/><rect x="2352.5" y="1429.2" width="1" height="29.8" fill="#0a4d40" fill-opacity="0.60"/><rect x="2356.5" y="1429.2" width="1" height="29.8" fill="#0a4d40" fill-opacity="0.46"/><rect x="2361.0" y="1429.2" width="1" height="29.8" fill="#0a4d40" fill-opacity="0.42"/><rect x="2365.5" y="1429.2" width="1" height="29.8" fill="#0a4d40" fill-opacity="0.77"/><rect x="2367.5" y="1429.2" width="1" height="29.8" fill="#0a4d40" fill-opacity="0.70"/><rect x="2376.5" y="1429.2" width="1" height="29.8" fill="#0a4d40" fill-opacity="0.42"/><rect x="2378.0" y="1429.2" width="1" height="29.8" fill="#0a4d40" fill-opacity="0.34"/><rect x="2379.5" y="1429.2" width="1" height="29.8" fill="#0a4d40" fill-opacity="0.38"/><rect x="2386.5" y="1429.2" width="1" height="29.8" fill="#0a4d40" fill-opacity="0.60"/><rect x="2400.0" y="1429.2" width="1" height="29.8" fill="#0a4d40" fill-opacity="0.41"/><rect x="2404.0" y="1429.2" width="1" height="29.8" fill="#0a4d40" fill-opacity="0.37"/><rect x="2406.5" y="1429.2" width="1" height="29.8" fill="#0a4d40" fill-opacity="0.38"/><rect x="2409.0" y="1429.2" width="1" height="29.8" fill="#0a4d40" fill-opacity="0.70"/><rect x="2411.0" y="1429.2" width="1" height="29.8" fill="#0a4d40" fill-opacity="0.64"/><rect x="2414.0" y="1429.2" width="1" height="29.8" fill="#0a4d40" fill-opacity="0.51"/><rect x="2416.0" y="1429.2" width="1" height="29.8" fill="#0a4d40" fill-opacity="0.39"/><rect x="2418.5" y="1429.2" width="1" height="29.8" fill="#0a4d40" fill-opacity="0.43"/><rect x="2420.5" y="1429.2" width="1" height="29.8" fill="#0a4d40" fill-opacity="0.43"/><rect x="2423.5" y="1429.2" width="1" height="29.8" fill="#0a4d40" fill-opacity="0.66"/><rect x="2425.0" y="1429.2" width="1" height="29.8" fill="#0a4d40" fill-opacity="0.32"/><rect x="2434.5" y="1429.2" width="1" height="29.8" fill="#0a4d40" fill-opacity="0.74"/><rect x="2437.5" y="1429.2" width="1" height="29.8" fill="#0a4d40" fill-opacity="0.79"/><rect x="2441.5" y="1429.2" width="1" height="29.8" fill="#0a4d40" fill-opacity="0.57"/><rect x="2447.5" y="1429.2" width="1" height="29.8" fill="#0a4d40" fill-opacity="0.67"/><rect x="2449.0" y="1429.2" width="1" height="29.8" fill="#0a4d40" fill-opacity="0.53"/><rect x="2453.5" y="1429.2" width="1" height="29.8" fill="#0a4d40" fill-opacity="0.31"/><rect x="2456.5" y="1429.2" width="1" height="29.8" fill="#0a4d40" fill-opacity="0.50"/><rect x="2458.5" y="1429.2" width="1" height="29.8" fill="#0a4d40" fill-opacity="0.72"/><rect x="2469.5" y="1429.2" width="1" height="29.8" fill="#0a4d40" fill-opacity="0.52"/><rect x="2472.5" y="1429.2" width="1" height="29.8" fill="#0a4d40" fill-opacity="0.73"/><rect x="2475.5" y="1429.2" width="1" height="29.8" fill="#0a4d40" fill-opacity="0.55"/><rect x="2477.5" y="1429.2" width="1" height="29.8" fill="#0a4d40" fill-opacity="0.55"/><rect x="2479.0" y="1429.2" width="1" height="29.8" fill="#0a4d40" fill-opacity="0.59"/><rect x="2481.0" y="1429.2" width="1" height="29.8" fill="#0a4d40" fill-opacity="0.55"/><rect x="2489.0" y="1429.2" width="1" height="29.8" fill="#0a4d40" fill-opacity="0.37"/><rect x="2490.5" y="1429.2" width="1" height="29.8" fill="#0a4d40" fill-opacity="0.51"/><rect x="2493.0" y="1429.2" width="1" height="29.8" fill="#0a4d40" fill-opacity="0.36"/><rect x="2495.0" y="1429.2" width="1" height="29.8" fill="#0a4d40" fill-opacity="0.64"/><rect x="2498.0" y="1429.2" width="1" height="29.8" fill="#0a4d40" fill-opacity="0.33"/><rect x="2501.0" y="1429.2" width="1" height="29.8" fill="#0a4d40" fill-opacity="0.63"/><rect x="2504.0" y="1429.2" width="1" height="29.8" fill="#0a4d40" fill-opacity="0.67"/><rect x="2506.5" y="1429.2" width="1" height="29.8" fill="#0a4d40" fill-opacity="0.33"/><rect x="2519.0" y="1429.2" width="1" height="29.8" fill="#0a4d40" fill-opacity="0.64"/><rect x="2537.5" y="1429.2" width="1" height="29.8" fill="#0a4d40" fill-opacity="0.31"/><rect x="2540.5" y="1429.2" width="1" height="29.8" fill="#0a4d40" fill-opacity="0.78"/><rect x="2545.0" y="1429.2" width="1" height="29.8" fill="#0a4d40" fill-opacity="0.40"/><rect x="2547.0" y="1429.2" width="1" height="29.8" fill="#0a4d40" fill-opacity="0.53"/><rect x="2548.5" y="1429.2" width="1" height="29.8" fill="#0a4d40" fill-opacity="0.40"/><rect x="2551.5" y="1429.2" width="1" height="29.8" fill="#0a4d40" fill-opacity="0.51"/><rect x="2554.5" y="1429.2" width="1" height="29.8" fill="#0a4d40" fill-opacity="0.32"/><rect x="2559.0" y="1429.2" width="1" height="29.8" fill="#0a4d40" fill-opacity="0.74"/><rect x="2571.5" y="1429.2" width="1" height="29.8" fill="#0a4d40" fill-opacity="0.68"/><rect x="2574.5" y="1429.2" width="1" height="29.8" fill="#0a4d40" fill-opacity="0.59"/><rect x="2576.5" y="1429.2" width="1" height="29.8" fill="#0a4d40" fill-opacity="0.49"/><rect x="2578.5" y="1429.2" width="1" height="29.8" fill="#0a4d40" fill-opacity="0.63"/><rect x="2589.5" y="1429.2" width="1" height="29.8" fill="#0a4d40" fill-opacity="0.45"/><rect x="2593.5" y="1429.2" width="1" height="29.8" fill="#0a4d40" fill-opacity="0.50"/><rect x="2598.5" y="1429.2" width="1" height="29.8" fill="#0a4d40" fill-opacity="0.59"/><rect x="2601.0" y="1429.2" width="1" height="29.8" fill="#0a4d40" fill-opacity="0.51"/><rect x="2609.5" y="1429.2" width="1" height="29.8" fill="#0a4d40" fill-opacity="0.58"/><rect x="2616.5" y="1429.2" width="1" height="29.8" fill="#0a4d40" fill-opacity="0.40"/><rect x="2618.0" y="1429.2" width="1" height="29.8" fill="#0a4d40" fill-opacity="0.34"/><rect x="2621.0" y="1429.2" width="1" height="29.8" fill="#0a4d40" fill-opacity="0.42"/><rect x="2627.0" y="1429.2" width="1" height="29.8" fill="#0a4d40" fill-opacity="0.43"/><rect x="2634.0" y="1429.2" width="1" height="29.8" fill="#0a4d40" fill-opacity="0.71"/><rect x="2636.0" y="1429.2" width="1" height="29.8" fill="#0a4d40" fill-opacity="0.41"/><rect x="2637.5" y="1429.2" width="1" height="29.8" fill="#0a4d40" fill-opacity="0.44"/><rect x="2641.5" y="1429.2" width="1" height="29.8" fill="#0a4d40" fill-opacity="0.31"/><rect x="2647.5" y="1429.2" width="1" height="29.8" fill="#0a4d40" fill-opacity="0.78"/><rect x="2649.0" y="1429.2" width="1" height="29.8" fill="#0a4d40" fill-opacity="0.77"/><rect x="2651.0" y="1429.2" width="1" height="29.8" fill="#0a4d40" fill-opacity="0.79"/><rect x="2652.5" y="1429.2" width="1" height="29.8" fill="#0a4d40" fill-opacity="0.41"/><rect x="2655.5" y="1429.2" width="1" height="29.8" fill="#0a4d40" fill-opacity="0.40"/><rect x="2657.0" y="1429.2" width="1" height="29.8" fill="#0a4d40" fill-opacity="0.73"/><rect x="2660.0" y="1429.2" width="1" height="29.8" fill="#0a4d40" fill-opacity="0.79"/><rect x="2662.0" y="1429.2" width="1" height="29.8" fill="#0a4d40" fill-opacity="0.48"/><rect x="2664.0" y="1429.2" width="1" height="29.8" fill="#0a4d40" fill-opacity="0.77"/><rect x="2668.5" y="1429.2" width="1" height="29.8" fill="#0a4d40" fill-opacity="0.66"/><rect x="2678.0" y="1429.2" width="1" height="29.8" fill="#0a4d40" fill-opacity="0.55"/><rect x="2684.5" y="1429.2" width="1" height="29.8" fill="#0a4d40" fill-opacity="0.52"/><rect x="2686.0" y="1429.2" width="1" height="29.8" fill="#0a4d40" fill-opacity="0.63"/><rect x="2690.5" y="1429.2" width="1" height="29.8" fill="#0a4d40" fill-opacity="0.36"/><rect x="2698.0" y="1429.2" width="1" height="29.8" fill="#0a4d40" fill-opacity="0.60"/><rect x="2710.0" y="1429.2" width="1" height="29.8" fill="#0a4d40" fill-opacity="0.59"/><rect x="2712.0" y="1429.2" width="1" height="29.8" fill="#0a4d40" fill-opacity="0.44"/><rect x="2717.0" y="1429.2" width="1" height="29.8" fill="#0a4d40" fill-opacity="0.70"/><rect x="2718.5" y="1429.2" width="1" height="29.8" fill="#0a4d40" fill-opacity="0.32"/><rect x="2720.5" y="1429.2" width="1" height="29.8" fill="#0a4d40" fill-opacity="0.47"/><rect x="2725.0" y="1429.2" width="1" height="29.8" fill="#0a4d40" fill-opacity="0.46"/><rect x="2728.5" y="1429.2" width="1" height="29.8" fill="#0a4d40" fill-opacity="0.61"/><rect x="2731.0" y="1429.2" width="1" height="29.8" fill="#0a4d40" fill-opacity="0.54"/><rect x="2734.0" y="1429.2" width="1" height="29.8" fill="#0a4d40" fill-opacity="0.36"/><rect x="2737.0" y="1429.2" width="1" height="29.8" fill="#0a4d40" fill-opacity="0.79"/><rect x="2739.5" y="1429.2" width="1" height="29.8" fill="#0a4d40" fill-opacity="0.44"/><rect x="2742.0" y="1429.2" width="1" height="29.8" fill="#0a4d40" fill-opacity="0.54"/><rect x="2752.0" y="1429.2" width="1" height="29.8" fill="#0a4d40" fill-opacity="0.52"/><rect x="2760.0" y="1429.2" width="1" height="29.8" fill="#0a4d40" fill-opacity="0.56"/><rect x="2763.5" y="1429.2" width="1" height="29.8" fill="#0a4d40" fill-opacity="0.50"/><rect x="2238" y="1390.3" width="510" height="38.9" fill="#c2185b" fill-opacity="0.1"/><rect x="2238.0" y="1390.3" width="2" height="68.7" fill="#d81b60" fill-opacity="0.37"/><rect x="2242.0" y="1390.3" width="2" height="68.7" fill="#d81b60" fill-opacity="0.37"/><rect x="2244.0" y="1390.3" width="1.5" height="68.7" fill="#d81b60" fill-opacity="0.40"/><rect x="2249.0" y="1390.3" width="1" height="68.7" fill="#d81b60" fill-opacity="0.41"/><rect x="2250.0" y="1390.3" width="1" height="68.7" fill="#d81b60" fill-opacity="0.30"/><rect x="2256.0" y="1390.3" width="1" height="68.7" fill="#d81b60" fill-opacity="0.26"/><rect x="2257.0" y="1390.3" width="1.5" height="68.7" fill="#d81b60" fill-opacity="0.20"/><rect x="2264.0" y="1390.3" width="1.5" height="68.7" fill="#d81b60" fill-opacity="0.19"/><rect x="2269.5" y="1390.3" width="1" height="68.7" fill="#d81b60" fill-opacity="0.27"/><rect x="2275.5" y="1390.3" width="1.5" height="68.7" fill="#d81b60" fill-opacity="0.20"/><rect x="2278.0" y="1390.3" width="1.5" height="68.7" fill="#d81b60" fill-opacity="0.30"/><rect x="2280.0" y="1390.3" width="2" height="68.7" fill="#d81b60" fill-opacity="0.16"/><rect x="2287.5" y="1390.3" width="1" height="68.7" fill="#d81b60" fill-opacity="0.40"/><rect x="2291.5" y="1390.3" width="2.5" height="68.7" fill="#d81b60" fill-opacity="0.27"/><rect x="2296.0" y="1390.3" width="2" height="68.7" fill="#d81b60" fill-opacity="0.25"/><rect x="2300.0" y="1390.3" width="2" height="68.7" fill="#d81b60" fill-opacity="0.25"/><rect x="2305.0" y="1390.3" width="2.5" height="68.7" fill="#d81b60" fill-opacity="0.12"/><rect x="2314.0" y="1390.3" width="2" height="68.7" fill="#d81b60" fill-opacity="0.39"/><rect x="2322.5" y="1390.3" width="2.5" height="68.7" fill="#d81b60" fill-opacity="0.15"/><rect x="2325.5" y="1390.3" width="1" height="68.7" fill="#d81b60" fill-opacity="0.22"/><rect x="2327.5" y="1390.3" width="1" height="68.7" fill="#d81b60" fill-opacity="0.25"/><rect x="2329.0" y="1390.3" width="1" height="68.7" fill="#d81b60" fill-opacity="0.17"/><rect x="2331.0" y="1390.3" width="2" height="68.7" fill="#d81b60" fill-opacity="0.25"/><rect x="2334.5" y="1390.3" width="1" height="68.7" fill="#d81b60" fill-opacity="0.37"/><rect x="2338.0" y="1390.3" width="2" height="68.7" fill="#d81b60" fill-opacity="0.27"/><rect x="2348.0" y="1390.3" width="2.5" height="68.7" fill="#d81b60" fill-opacity="0.32"/><rect x="2355.0" y="1390.3" width="1.5" height="68.7" fill="#d81b60" fill-opacity="0.39"/><rect x="2358.0" y="1390.3" width="1" height="68.7" fill="#d81b60" fill-opacity="0.35"/><rect x="2359.5" y="1390.3" width="1" height="68.7" fill="#d81b60" fill-opacity="0.28"/><rect x="2364.5" y="1390.3" width="1.5" height="68.7" fill="#d81b60" fill-opacity="0.41"/><rect x="2367.0" y="1390.3" width="2" height="68.7" fill="#d81b60" fill-opacity="0.36"/><rect x="2371.0" y="1390.3" width="1.5" height="68.7" fill="#d81b60" fill-opacity="0.18"/><rect x="2378.0" y="1390.3" width="1" height="68.7" fill="#d81b60" fill-opacity="0.41"/><rect x="2383.0" y="1390.3" width="1" height="68.7" fill="#d81b60" fill-opacity="0.25"/><rect x="2385.5" y="1390.3" width="1.5" height="68.7" fill="#d81b60" fill-opacity="0.25"/><rect x="2388.0" y="1390.3" width="1" height="68.7" fill="#d81b60" fill-opacity="0.22"/><rect x="2389.5" y="1390.3" width="1.5" height="68.7" fill="#d81b60" fill-opacity="0.13"/><rect x="2393.0" y="1390.3" width="1.5" height="68.7" fill="#d81b60" fill-opacity="0.36"/><rect x="2396.5" y="1390.3" width="1.5" height="68.7" fill="#d81b60" fill-opacity="0.28"/><rect x="2398.5" y="1390.3" width="1" height="68.7" fill="#d81b60" fill-opacity="0.28"/><rect x="2401.0" y="1390.3" width="1" height="68.7" fill="#d81b60" fill-opacity="0.42"/><rect x="2407.5" y="1390.3" width="2.5" height="68.7" fill="#d81b60" fill-opacity="0.35"/><rect x="2413.0" y="1390.3" width="1.5" height="68.7" fill="#d81b60" fill-opacity="0.20"/><rect x="2419.5" y="1390.3" width="1" height="68.7" fill="#d81b60" fill-opacity="0.17"/><rect x="2428.0" y="1390.3" width="1.5" height="68.7" fill="#d81b60" fill-opacity="0.19"/><rect x="2429.5" y="1390.3" width="1" height="68.7" fill="#d81b60" fill-opacity="0.40"/><rect x="2431.0" y="1390.3" width="1" height="68.7" fill="#d81b60" fill-opacity="0.32"/><rect x="2436.0" y="1390.3" width="2" height="68.7" fill="#d81b60" fill-opacity="0.25"/><rect x="2439.5" y="1390.3" width="2.5" height="68.7" fill="#d81b60" fill-opacity="0.23"/><rect x="2449.5" y="1390.3" width="1" height="68.7" fill="#d81b60" fill-opacity="0.34"/><rect x="2451.0" y="1390.3" width="2.5" height="68.7" fill="#d81b60" fill-opacity="0.23"/><rect x="2454.5" y="1390.3" width="2" height="68.7" fill="#d81b60" fill-opacity="0.34"/><rect x="2463.0" y="1390.3" width="2" height="68.7" fill="#d81b60" fill-opacity="0.42"/><rect x="2472.0" y="1390.3" width="2" height="68.7" fill="#d81b60" fill-opacity="0.23"/><rect x="2475.0" y="1390.3" width="2.5" height="68.7" fill="#d81b60" fill-opacity="0.12"/><rect x="2481.0" y="1390.3" width="1" height="68.7" fill="#d81b60" fill-opacity="0.23"/><rect x="2487.5" y="1390.3" width="2.5" height="68.7" fill="#d81b60" fill-opacity="0.28"/><rect x="2492.5" y="1390.3" width="1.5" height="68.7" fill="#d81b60" fill-opacity="0.21"/><rect x="2506.0" y="1390.3" width="2" height="68.7" fill="#d81b60" fill-opacity="0.22"/><rect x="2509.0" y="1390.3" width="1" height="68.7" fill="#d81b60" fill-opacity="0.20"/><rect x="2513.0" y="1390.3" width="1" height="68.7" fill="#d81b60" fill-opacity="0.13"/><rect x="2514.0" y="1390.3" width="1" height="68.7" fill="#d81b60" fill-opacity="0.40"/><rect x="2522.5" y="1390.3" width="2" height="68.7" fill="#d81b60" fill-opacity="0.34"/><rect x="2531.0" y="1390.3" width="1.5" height="68.7" fill="#d81b60" fill-opacity="0.19"/><rect x="2539.5" y="1390.3" width="2.5" height="68.7" fill="#d81b60" fill-opacity="0.12"/><rect x="2546.0" y="1390.3" width="2.5" height="68.7" fill="#d81b60" fill-opacity="0.27"/><rect x="2549.5" y="1390.3" width="1.5" height="68.7" fill="#d81b60" fill-opacity="0.13"/><rect x="2553.0" y="1390.3" width="2.5" height="68.7" fill="#d81b60" fill-opacity="0.15"/><rect x="2556.0" y="1390.3" width="1" height="68.7" fill="#d81b60" fill-opacity="0.14"/><rect x="2566.5" y="1390.3" width="1" height="68.7" fill="#d81b60" fill-opacity="0.33"/><rect x="2568.5" y="1390.3" width="1" height="68.7" fill="#d81b60" fill-opacity="0.17"/><rect x="2570.5" y="1390.3" width="2.5" height="68.7" fill="#d81b60" fill-opacity="0.12"/><rect x="2573.0" y="1390.3" width="2" height="68.7" fill="#d81b60" fill-opacity="0.29"/><rect x="2584.5" y="1390.3" width="1" height="68.7" fill="#d81b60" fill-opacity="0.34"/><rect x="2588.5" y="1390.3" width="1" height="68.7" fill="#d81b60" fill-opacity="0.13"/><rect x="2591.5" y="1390.3" width="1" height="68.7" fill="#d81b60" fill-opacity="0.28"/><rect x="2594.5" y="1390.3" width="2.5" height="68.7" fill="#d81b60" fill-opacity="0.25"/><rect x="2605.5" y="1390.3" width="1" height="68.7" fill="#d81b60" fill-opacity="0.27"/><rect x="2607.0" y="1390.3" width="1" height="68.7" fill="#d81b60" fill-opacity="0.16"/><rect x="2613.0" y="1390.3" width="1" height="68.7" fill="#d81b60" fill-opacity="0.29"/><rect x="2615.5" y="1390.3" width="1.5" height="68.7" fill="#d81b60" fill-opacity="0.19"/><rect x="2623.0" y="1390.3" width="1" height="68.7" fill="#d81b60" fill-opacity="0.24"/><rect x="2624.5" y="1390.3" width="2.5" height="68.7" fill="#d81b60" fill-opacity="0.42"/><rect x="2628.5" y="1390.3" width="2" height="68.7" fill="#d81b60" fill-opacity="0.28"/><rect x="2631.5" y="1390.3" width="2" height="68.7" fill="#d81b60" fill-opacity="0.13"/><rect x="2635.0" y="1390.3" width="1.5" height="68.7" fill="#d81b60" fill-opacity="0.37"/><rect x="2638.5" y="1390.3" width="1" height="68.7" fill="#d81b60" fill-opacity="0.27"/><rect x="2649.5" y="1390.3" width="1.5" height="68.7" fill="#d81b60" fill-opacity="0.38"/><rect x="2651.5" y="1390.3" width="1" height="68.7" fill="#d81b60" fill-opacity="0.18"/><rect x="2652.5" y="1390.3" width="1" height="68.7" fill="#d81b60" fill-opacity="0.36"/><rect x="2655.0" y="1390.3" width="1" height="68.7" fill="#d81b60" fill-opacity="0.32"/><rect x="2659.0" y="1390.3" width="1" height="68.7" fill="#d81b60" fill-opacity="0.23"/><rect x="2662.0" y="1390.3" width="1" height="68.7" fill="#d81b60" fill-opacity="0.38"/><rect x="2666.0" y="1390.3" width="1" height="68.7" fill="#d81b60" fill-opacity="0.15"/><rect x="2672.5" y="1390.3" width="1.5" height="68.7" fill="#d81b60" fill-opacity="0.20"/><rect x="2674.5" y="1390.3" width="2.5" height="68.7" fill="#d81b60" fill-opacity="0.33"/><rect x="2682.5" y="1390.3" width="1" height="68.7" fill="#d81b60" fill-opacity="0.19"/><rect x="2683.5" y="1390.3" width="1" height="68.7" fill="#d81b60" fill-opacity="0.22"/><rect x="2689.0" y="1390.3" width="1.5" height="68.7" fill="#d81b60" fill-opacity="0.36"/><rect x="2694.5" y="1390.3" width="2" height="68.7" fill="#d81b60" fill-opacity="0.27"/><rect x="2697.0" y="1390.3" width="1" height="68.7" fill="#d81b60" fill-opacity="0.23"/><rect x="2698.0" y="1390.3" width="1" height="68.7" fill="#d81b60" fill-opacity="0.25"/><rect x="2702.0" y="1390.3" width="2.5" height="68.7" fill="#d81b60" fill-opacity="0.17"/><rect x="2704.5" y="1390.3" width="1" height="68.7" fill="#d81b60" fill-opacity="0.18"/><rect x="2707.0" y="1390.3" width="1.5" height="68.7" fill="#d81b60" fill-opacity="0.16"/><rect x="2710.5" y="1390.3" width="1.5" height="68.7" fill="#d81b60" fill-opacity="0.20"/><rect x="2713.0" y="1390.3" width="1.5" height="68.7" fill="#d81b60" fill-opacity="0.42"/><rect x="2720.5" y="1390.3" width="1.5" height="68.7" fill="#d81b60" fill-opacity="0.39"/><rect x="2724.0" y="1390.3" width="1" height="68.7" fill="#d81b60" fill-opacity="0.29"/><rect x="2728.0" y="1390.3" width="2" height="68.7" fill="#d81b60" fill-opacity="0.19"/><rect x="2730.5" y="1390.3" width="2.5" height="68.7" fill="#d81b60" fill-opacity="0.32"/><rect x="2737.0" y="1390.3" width="1.5" height="68.7" fill="#d81b60" fill-opacity="0.27"/><rect x="2740.0" y="1390.3" width="1" height="68.7" fill="#d81b60" fill-opacity="0.29"/><rect x="2741.5" y="1390.3" width="2.5" height="68.7" fill="#d81b60" fill-opacity="0.29"/><rect x="2744.5" y="1390.3" width="1" height="68.7" fill="#d81b60" fill-opacity="0.26"/><rect x="2238.0" y="1321" width="1.2" height="69.3" fill="#4f1d34"/><rect x="2246.1" y="1321" width="1.2" height="69.3" fill="#4f1d34"/>
<line x1="2206.0" y1="1279.5" x2="2206.0" y2="1460.0" stroke="#7c7c7c" stroke-width="2" />
<line x1="2194.0" y1="1459.0" x2="2766.0" y2="1459.0" stroke="#7c7c7c" stroke-width="2" />
<line x1="2194.0" y1="1279.5" x2="2206.0" y2="1279.5" stroke="#7c7c7c" stroke-width="2" />
<text x="2189.5" y="1302.0" font-size="22" fill="#808080" font-weight="normal" text-anchor="end" font-family="'Liberation Mono', monospace" >0.6</text>
<line x1="2194.0" y1="1369.2" x2="2206.0" y2="1369.2" stroke="#7c7c7c" stroke-width="2" />
<text x="2189.5" y="1376.2" font-size="22" fill="#808080" font-weight="normal" text-anchor="end" font-family="'Liberation Mono', monospace" >0.3</text>
<line x1="2194.0" y1="1414.1" x2="2206.0" y2="1414.1" stroke="#7c7c7c" stroke-width="2" />
<text x="2189.5" y="1421.1" font-size="22" fill="#808080" font-weight="normal" text-anchor="end" font-family="'Liberation Mono', monospace" >0.15</text>
<text x="2189.5" y="1466.0" font-size="22" fill="#808080" font-weight="normal" text-anchor="end" font-family="'Liberation Mono', monospace" >0</text>
<line x1="2765.8" y1="1459.0" x2="2765.8" y2="1470.5" stroke="#7c7c7c" stroke-width="2" />
<text x="2766.0" y="1489.4" font-size="20" fill="#808080" font-weight="normal" text-anchor="end" font-family="'Liberation Mono', monospace" >2025-05-28T03:59:14.900820000Z</text>
<text x="3138.0" y="1270.7" font-size="24" fill="#b3b4b8" font-weight="normal" text-anchor="middle" font-family="'Liberation Mono', monospace" >TraceId</text>
<rect x="2918.25" y="1429.2" width="560.0" height="29.8" fill="#0f6e5a"/><rect x="2920.8" y="1429.2" width="1" height="29.8" fill="#0a4d40" fill-opacity="0.57"/><rect x="2922.8" y="1429.2" width="1" height="29.8" fill="#0a4d40" fill-opacity="0.66"/><rect x="2931.8" y="1429.2" width="1" height="29.8" fill="#0a4d40" fill-opacity="0.42"/><rect x="2941.8" y="1429.2" width="1" height="29.8" fill="#0a4d40" fill-opacity="0.47"/><rect x="2944.8" y="1429.2" width="1" height="29.8" fill="#0a4d40" fill-opacity="0.51"/><rect x="2947.8" y="1429.2" width="1" height="29.8" fill="#0a4d40" fill-opacity="0.30"/><rect x="2953.8" y="1429.2" width="1" height="29.8" fill="#0a4d40" fill-opacity="0.43"/><rect x="2955.2" y="1429.2" width="1" height="29.8" fill="#0a4d40" fill-opacity="0.46"/><rect x="2961.8" y="1429.2" width="1" height="29.8" fill="#0a4d40" fill-opacity="0.40"/><rect x="2964.2" y="1429.2" width="1" height="29.8" fill="#0a4d40" fill-opacity="0.74"/><rect x="2968.2" y="1429.2" width="1" height="29.8" fill="#0a4d40" fill-opacity="0.50"/><rect x="2969.8" y="1429.2" width="1" height="29.8" fill="#0a4d40" fill-opacity="0.62"/><rect x="2979.2" y="1429.2" width="1" height="29.8" fill="#0a4d40" fill-opacity="0.78"/><rect x="2981.2" y="1429.2" width="1" height="29.8" fill="#0a4d40" fill-opacity="0.78"/><rect x="2983.8" y="1429.2" width="1" height="29.8" fill="#0a4d40" fill-opacity="0.59"/><rect x="2986.2" y="1429.2" width="1" height="29.8" fill="#0a4d40" fill-opacity="0.60"/><rect x="2987.8" y="1429.2" width="1" height="29.8" fill="#0a4d40" fill-opacity="0.35"/><rect x="2990.8" y="1429.2" width="1" height="29.8" fill="#0a4d40" fill-opacity="0.44"/><rect x="2995.2" y="1429.2" width="1" height="29.8" fill="#0a4d40" fill-opacity="0.75"/><rect x="2997.8" y="1429.2" width="1" height="29.8" fill="#0a4d40" fill-opacity="0.77"/><rect x="2999.8" y="1429.2" width="1" height="29.8" fill="#0a4d40" fill-opacity="0.54"/><rect x="3002.8" y="1429.2" width="1" height="29.8" fill="#0a4d40" fill-opacity="0.52"/><rect x="3011.2" y="1429.2" width="1" height="29.8" fill="#0a4d40" fill-opacity="0.44"/><rect x="3018.2" y="1429.2" width="1" height="29.8" fill="#0a4d40" fill-opacity="0.57"/><rect x="3026.2" y="1429.2" width="1" height="29.8" fill="#0a4d40" fill-opacity="0.32"/><rect x="3030.2" y="1429.2" width="1" height="29.8" fill="#0a4d40" fill-opacity="0.64"/><rect x="3033.2" y="1429.2" width="1" height="29.8" fill="#0a4d40" fill-opacity="0.37"/><rect x="3040.2" y="1429.2" width="1" height="29.8" fill="#0a4d40" fill-opacity="0.38"/><rect x="3047.8" y="1429.2" width="1" height="29.8" fill="#0a4d40" fill-opacity="0.54"/><rect x="3056.8" y="1429.2" width="1" height="29.8" fill="#0a4d40" fill-opacity="0.35"/><rect x="3058.2" y="1429.2" width="1" height="29.8" fill="#0a4d40" fill-opacity="0.73"/><rect x="3061.8" y="1429.2" width="1" height="29.8" fill="#0a4d40" fill-opacity="0.66"/><rect x="3072.8" y="1429.2" width="1" height="29.8" fill="#0a4d40" fill-opacity="0.70"/><rect x="3077.2" y="1429.2" width="1" height="29.8" fill="#0a4d40" fill-opacity="0.52"/><rect x="3078.8" y="1429.2" width="1" height="29.8" fill="#0a4d40" fill-opacity="0.42"/><rect x="3082.8" y="1429.2" width="1" height="29.8" fill="#0a4d40" fill-opacity="0.43"/><rect x="3086.8" y="1429.2" width="1" height="29.8" fill="#0a4d40" fill-opacity="0.74"/><rect x="3088.2" y="1429.2" width="1" height="29.8" fill="#0a4d40" fill-opacity="0.68"/><rect x="3090.2" y="1429.2" width="1" height="29.8" fill="#0a4d40" fill-opacity="0.58"/><rect x="3096.8" y="1429.2" width="1" height="29.8" fill="#0a4d40" fill-opacity="0.71"/><rect x="3105.8" y="1429.2" width="1" height="29.8" fill="#0a4d40" fill-opacity="0.65"/><rect x="3118.8" y="1429.2" width="1" height="29.8" fill="#0a4d40" fill-opacity="0.78"/><rect x="3122.8" y="1429.2" width="1" height="29.8" fill="#0a4d40" fill-opacity="0.48"/><rect x="3136.8" y="1429.2" width="1" height="29.8" fill="#0a4d40" fill-opacity="0.56"/><rect x="3139.2" y="1429.2" width="1" height="29.8" fill="#0a4d40" fill-opacity="0.53"/><rect x="3148.2" y="1429.2" width="1" height="29.8" fill="#0a4d40" fill-opacity="0.75"/><rect x="3153.8" y="1429.2" width="1" height="29.8" fill="#0a4d40" fill-opacity="0.72"/><rect x="3156.2" y="1429.2" width="1" height="29.8" fill="#0a4d40" fill-opacity="0.37"/><rect x="3160.8" y="1429.2" width="1" height="29.8" fill="#0a4d40" fill-opacity="0.55"/><rect x="3163.8" y="1429.2" width="1" height="29.8" fill="#0a4d40" fill-opacity="0.66"/><rect x="3171.8" y="1429.2" width="1" height="29.8" fill="#0a4d40" fill-opacity="0.59"/><rect x="3175.8" y="1429.2" width="1" height="29.8" fill="#0a4d40" fill-opacity="0.79"/><rect x="3179.8" y="1429.2" width="1" height="29.8" fill="#0a4d40" fill-opacity="0.43"/><rect x="3183.2" y="1429.2" width="1" height="29.8" fill="#0a4d40" fill-opacity="0.46"/><rect x="3184.8" y="1429.2" width="1" height="29.8" fill="#0a4d40" fill-opacity="0.69"/><rect x="3186.8" y="1429.2" width="1" height="29.8" fill="#0a4d40" fill-opacity="0.63"/><rect x="3193.8" y="1429.2" width="1" height="29.8" fill="#0a4d40" fill-opacity="0.35"/><rect x="3201.8" y="1429.2" width="1" height="29.8" fill="#0a4d40" fill-opacity="0.34"/><rect x="3204.2" y="1429.2" width="1" height="29.8" fill="#0a4d40" fill-opacity="0.56"/><rect x="3210.2" y="1429.2" width="1" height="29.8" fill="#0a4d40" fill-opacity="0.51"/><rect x="3214.8" y="1429.2" width="1" height="29.8" fill="#0a4d40" fill-opacity="0.43"/><rect x="3216.2" y="1429.2" width="1" height="29.8" fill="#0a4d40" fill-opacity="0.49"/><rect x="3217.8" y="1429.2" width="1" height="29.8" fill="#0a4d40" fill-opacity="0.78"/><rect x="3224.2" y="1429.2" width="1" height="29.8" fill="#0a4d40" fill-opacity="0.71"/><rect x="3229.8" y="1429.2" width="1" height="29.8" fill="#0a4d40" fill-opacity="0.64"/><rect x="3238.8" y="1429.2" width="1" height="29.8" fill="#0a4d40" fill-opacity="0.49"/><rect x="3245.2" y="1429.2" width="1" height="29.8" fill="#0a4d40" fill-opacity="0.48"/><rect x="3259.8" y="1429.2" width="1" height="29.8" fill="#0a4d40" fill-opacity="0.48"/><rect x="3267.2" y="1429.2" width="1" height="29.8" fill="#0a4d40" fill-opacity="0.33"/><rect x="3270.2" y="1429.2" width="1" height="29.8" fill="#0a4d40" fill-opacity="0.68"/><rect x="3275.8" y="1429.2" width="1" height="29.8" fill="#0a4d40" fill-opacity="0.78"/><rect x="3281.8" y="1429.2" width="1" height="29.8" fill="#0a4d40" fill-opacity="0.67"/><rect x="3283.8" y="1429.2" width="1" height="29.8" fill="#0a4d40" fill-opacity="0.38"/><rect x="3285.8" y="1429.2" width="1" height="29.8" fill="#0a4d40" fill-opacity="0.58"/><rect x="3288.8" y="1429.2" width="1" height="29.8" fill="#0a4d40" fill-opacity="0.38"/><rect x="3291.2" y="1429.2" width="1" height="29.8" fill="#0a4d40" fill-opacity="0.76"/><rect x="3293.8" y="1429.2" width="1" height="29.8" fill="#0a4d40" fill-opacity="0.55"/><rect x="3301.2" y="1429.2" width="1" height="29.8" fill="#0a4d40" fill-opacity="0.63"/><rect x="3306.8" y="1429.2" width="1" height="29.8" fill="#0a4d40" fill-opacity="0.53"/><rect x="3312.8" y="1429.2" width="1" height="29.8" fill="#0a4d40" fill-opacity="0.57"/><rect x="3320.2" y="1429.2" width="1" height="29.8" fill="#0a4d40" fill-opacity="0.67"/><rect x="3323.8" y="1429.2" width="1" height="29.8" fill="#0a4d40" fill-opacity="0.65"/><rect x="3325.2" y="1429.2" width="1" height="29.8" fill="#0a4d40" fill-opacity="0.51"/><rect x="3328.2" y="1429.2" width="1" height="29.8" fill="#0a4d40" fill-opacity="0.56"/><rect x="3331.2" y="1429.2" width="1" height="29.8" fill="#0a4d40" fill-opacity="0.66"/><rect x="3337.2" y="1429.2" width="1" height="29.8" fill="#0a4d40" fill-opacity="0.77"/><rect x="3338.8" y="1429.2" width="1" height="29.8" fill="#0a4d40" fill-opacity="0.32"/><rect x="3343.2" y="1429.2" width="1" height="29.8" fill="#0a4d40" fill-opacity="0.62"/><rect x="3347.2" y="1429.2" width="1" height="29.8" fill="#0a4d40" fill-opacity="0.54"/><rect x="3351.2" y="1429.2" width="1" height="29.8" fill="#0a4d40" fill-opacity="0.53"/><rect x="3354.2" y="1429.2" width="1" height="29.8" fill="#0a4d40" fill-opacity="0.71"/><rect x="3356.2" y="1429.2" width="1" height="29.8" fill="#0a4d40" fill-opacity="0.71"/><rect x="3361.2" y="1429.2" width="1" height="29.8" fill="#0a4d40" fill-opacity="0.50"/><rect x="3373.2" y="1429.2" width="1" height="29.8" fill="#0a4d40" fill-opacity="0.41"/><rect x="3376.2" y="1429.2" width="1" height="29.8" fill="#0a4d40" fill-opacity="0.41"/><rect x="3381.2" y="1429.2" width="1" height="29.8" fill="#0a4d40" fill-opacity="0.76"/><rect x="3384.2" y="1429.2" width="1" height="29.8" fill="#0a4d40" fill-opacity="0.52"/><rect x="3393.8" y="1429.2" width="1" height="29.8" fill="#0a4d40" fill-opacity="0.57"/><rect x="3395.8" y="1429.2" width="1" height="29.8" fill="#0a4d40" fill-opacity="0.72"/><rect x="3401.8" y="1429.2" width="1" height="29.8" fill="#0a4d40" fill-opacity="0.41"/><rect x="3404.8" y="1429.2" width="1" height="29.8" fill="#0a4d40" fill-opacity="0.55"/><rect x="3406.8" y="1429.2" width="1" height="29.8" fill="#0a4d40" fill-opacity="0.66"/><rect x="3409.2" y="1429.2" width="1" height="29.8" fill="#0a4d40" fill-opacity="0.56"/><rect x="3418.2" y="1429.2" width="1" height="29.8" fill="#0a4d40" fill-opacity="0.71"/><rect x="3424.2" y="1429.2" width="1" height="29.8" fill="#0a4d40" fill-opacity="0.61"/><rect x="3433.2" y="1429.2" width="1" height="29.8" fill="#0a4d40" fill-opacity="0.33"/><rect x="3440.2" y="1429.2" width="1" height="29.8" fill="#0a4d40" fill-opacity="0.40"/><rect x="3446.8" y="1429.2" width="1" height="29.8" fill="#0a4d40" fill-opacity="0.45"/><rect x="3451.8" y="1429.2" width="1" height="29.8" fill="#0a4d40" fill-opacity="0.38"/><rect x="3454.8" y="1429.2" width="1" height="29.8" fill="#0a4d40" fill-opacity="0.47"/><rect x="3457.8" y="1429.2" width="1" height="29.8" fill="#0a4d40" fill-opacity="0.50"/><rect x="3462.8" y="1429.2" width="1" height="29.8" fill="#0a4d40" fill-opacity="0.45"/><rect x="3465.2" y="1429.2" width="1" height="29.8" fill="#0a4d40" fill-opacity="0.68"/><rect x="3467.8" y="1429.2" width="1" height="29.8" fill="#0a4d40" fill-opacity="0.43"/><rect x="3473.2" y="1429.2" width="1" height="29.8" fill="#0a4d40" fill-opacity="0.49"/><rect x="2923.6" y="1390.3" width="553.0" height="38.9" fill="#c2185b" fill-opacity="0.1"/><rect x="2925.6" y="1390.3" width="2.5" height="68.7" fill="#d81b60" fill-opacity="0.25"/><rect x="2929.1" y="1390.3" width="2" height="68.7" fill="#d81b60" fill-opacity="0.27"/><rect x="2931.1" y="1390.3" width="1" height="68.7" fill="#d81b60" fill-opacity="0.14"/><rect x="2934.1" y="1390.3" width="1" height="68.7" fill="#d81b60" fill-opacity="0.23"/><rect x="2940.6" y="1390.3" width="1" height="68.7" fill="#d81b60" fill-opacity="0.34"/><rect x="2943.6" y="1390.3" width="1" height="68.7" fill="#d81b60" fill-opacity="0.33"/><rect x="2946.1" y="1390.3" width="2.5" height="68.7" fill="#d81b60" fill-opacity="0.22"/><rect x="2951.6" y="1390.3" width="1" height="68.7" fill="#d81b60" fill-opacity="0.35"/><rect x="2958.1" y="1390.3" width="1" height="68.7" fill="#d81b60" fill-opacity="0.33"/><rect x="2959.1" y="1390.3" width="1" height="68.7" fill="#d81b60" fill-opacity="0.32"/><rect x="2963.1" y="1390.3" width="1" height="68.7" fill="#d81b60" fill-opacity="0.16"/><rect x="2966.6" y="1390.3" width="1" height="68.7" fill="#d81b60" fill-opacity="0.27"/><rect x="2969.1" y="1390.3" width="1" height="68.7" fill="#d81b60" fill-opacity="0.22"/><rect x="2972.1" y="1390.3" width="1" height="68.7" fill="#d81b60" fill-opacity="0.13"/><rect x="2976.1" y="1390.3" width="1" height="68.7" fill="#d81b60" fill-opacity="0.16"/><rect x="2979.1" y="1390.3" width="1.5" height="68.7" fill="#d81b60" fill-opacity="0.42"/><rect x="2986.1" y="1390.3" width="2" height="68.7" fill="#d81b60" fill-opacity="0.30"/><rect x="2988.1" y="1390.3" width="1.5" height="68.7" fill="#d81b60" fill-opacity="0.28"/><rect x="2992.6" y="1390.3" width="1" height="68.7" fill="#d81b60" fill-opacity="0.13"/><rect x="3003.6" y="1390.3" width="1" height="68.7" fill="#d81b60" fill-opacity="0.32"/><rect x="3005.1" y="1390.3" width="2.5" height="68.7" fill="#d81b60" fill-opacity="0.14"/><rect x="3009.6" y="1390.3" width="1.5" height="68.7" fill="#d81b60" fill-opacity="0.15"/><rect x="3011.6" y="1390.3" width="2.5" height="68.7" fill="#d81b60" fill-opacity="0.19"/><rect x="3016.1" y="1390.3" width="1" height="68.7" fill="#d81b60" fill-opacity="0.39"/><rect x="3018.1" y="1390.3" width="1" height="68.7" fill="#d81b60" fill-opacity="0.17"/><rect x="3019.1" y="1390.3" width="1" height="68.7" fill="#d81b60" fill-opacity="0.29"/><rect x="3031.1" y="1390.3" width="1" height="68.7" fill="#d81b60" fill-opacity="0.27"/><rect x="3032.6" y="1390.3" width="2" height="68.7" fill="#d81b60" fill-opacity="0.18"/><rect x="3035.1" y="1390.3" width="1" height="68.7" fill="#d81b60" fill-opacity="0.21"/><rect x="3036.1" y="1390.3" width="1.5" height="68.7" fill="#d81b60" fill-opacity="0.31"/><rect x="3041.1" y="1390.3" width="1" height="68.7" fill="#d81b60" fill-opacity="0.25"/><rect x="3042.6" y="1390.3" width="2" height="68.7" fill="#d81b60" fill-opacity="0.36"/><rect x="3047.6" y="1390.3" width="1.5" height="68.7" fill="#d81b60" fill-opacity="0.32"/><rect x="3051.1" y="1390.3" width="1" height="68.7" fill="#d81b60" fill-opacity="0.13"/><rect x="3053.6" y="1390.3" width="2.5" height="68.7" fill="#d81b60" fill-opacity="0.25"/><rect x="3067.6" y="1390.3" width="1" height="68.7" fill="#d81b60" fill-opacity="0.24"/><rect x="3073.6" y="1390.3" width="1" height="68.7" fill="#d81b60" fill-opacity="0.21"/><rect x="3079.6" y="1390.3" width="2" height="68.7" fill="#d81b60" fill-opacity="0.26"/><rect x="3090.6" y="1390.3" width="1" height="68.7" fill="#d81b60" fill-opacity="0.20"/><rect x="3094.6" y="1390.3" width="2" height="68.7" fill="#d81b60" fill-opacity="0.16"/><rect x="3101.1" y="1390.3" width="1" height="68.7" fill="#d81b60" fill-opacity="0.32"/><rect x="3104.1" y="1390.3" width="1" height="68.7" fill="#d81b60" fill-opacity="0.30"/><rect x="3112.1" y="1390.3" width="1" height="68.7" fill="#d81b60" fill-opacity="0.30"/><rect x="3113.6" y="1390.3" width="2" height="68.7" fill="#d81b60" fill-opacity="0.13"/><rect x="3120.1" y="1390.3" width="2" height="68.7" fill="#d81b60" fill-opacity="0.23"/><rect x="3123.6" y="1390.3" width="1" height="68.7" fill="#d81b60" fill-opacity="0.30"/><rect x="3124.6" y="1390.3" width="1" height="68.7" fill="#d81b60" fill-opacity="0.27"/><rect x="3131.1" y="1390.3" width="1" height="68.7" fill="#d81b60" fill-opacity="0.16"/><rect x="3132.1" y="1390.3" width="2.5" height="68.7" fill="#d81b60" fill-opacity="0.12"/><rect x="3135.1" y="1390.3" width="1" height="68.7" fill="#d81b60" fill-opacity="0.42"/><rect x="3136.6" y="1390.3" width="1" height="68.7" fill="#d81b60" fill-opacity="0.35"/><rect x="3138.6" y="1390.3" width="1" height="68.7" fill="#d81b60" fill-opacity="0.32"/><rect x="3140.1" y="1390.3" width="2" height="68.7" fill="#d81b60" fill-opacity="0.39"/><rect x="3145.1" y="1390.3" width="2" height="68.7" fill="#d81b60" fill-opacity="0.39"/><rect x="3147.1" y="1390.3" width="1.5" height="68.7" fill="#d81b60" fill-opacity="0.31"/><rect x="3148.6" y="1390.3" width="2" height="68.7" fill="#d81b60" fill-opacity="0.37"/><rect x="3157.6" y="1390.3" width="2.5" height="68.7" fill="#d81b60" fill-opacity="0.36"/><rect x="3164.1" y="1390.3" width="1" height="68.7" fill="#d81b60" fill-opacity="0.31"/><rect x="3166.6" y="1390.3" width="1" height="68.7" fill="#d81b60" fill-opacity="0.31"/><rect x="3171.1" y="1390.3" width="1.5" height="68.7" fill="#d81b60" fill-opacity="0.33"/><rect x="3179.1" y="1390.3" width="1.5" height="68.7" fill="#d81b60" fill-opacity="0.29"/><rect x="3180.6" y="1390.3" width="1" height="68.7" fill="#d81b60" fill-opacity="0.25"/><rect x="3188.6" y="1390.3" width="2" height="68.7" fill="#d81b60" fill-opacity="0.22"/><rect x="3193.6" y="1390.3" width="2.5" height="68.7" fill="#d81b60" fill-opacity="0.26"/><rect x="3201.6" y="1390.3" width="2" height="68.7" fill="#d81b60" fill-opacity="0.23"/><rect x="3206.6" y="1390.3" width="2.5" height="68.7" fill="#d81b60" fill-opacity="0.14"/><rect x="3211.1" y="1390.3" width="1" height="68.7" fill="#d81b60" fill-opacity="0.42"/><rect x="3212.6" y="1390.3" width="1.5" height="68.7" fill="#d81b60" fill-opacity="0.29"/><rect x="3218.6" y="1390.3" width="1" height="68.7" fill="#d81b60" fill-opacity="0.22"/><rect x="3226.1" y="1390.3" width="1" height="68.7" fill="#d81b60" fill-opacity="0.37"/><rect x="3227.1" y="1390.3" width="2" height="68.7" fill="#d81b60" fill-opacity="0.19"/><rect x="3229.1" y="1390.3" width="2" height="68.7" fill="#d81b60" fill-opacity="0.16"/><rect x="3231.1" y="1390.3" width="1.5" height="68.7" fill="#d81b60" fill-opacity="0.40"/><rect x="3240.1" y="1390.3" width="2.5" height="68.7" fill="#d81b60" fill-opacity="0.23"/><rect x="3246.1" y="1390.3" width="2" height="68.7" fill="#d81b60" fill-opacity="0.31"/><rect x="3251.1" y="1390.3" width="1.5" height="68.7" fill="#d81b60" fill-opacity="0.19"/><rect x="3258.6" y="1390.3" width="2.5" height="68.7" fill="#d81b60" fill-opacity="0.14"/><rect x="3264.1" y="1390.3" width="1" height="68.7" fill="#d81b60" fill-opacity="0.14"/><rect x="3266.1" y="1390.3" width="2" height="68.7" fill="#d81b60" fill-opacity="0.34"/><rect x="3271.1" y="1390.3" width="1" height="68.7" fill="#d81b60" fill-opacity="0.14"/><rect x="3274.1" y="1390.3" width="1" height="68.7" fill="#d81b60" fill-opacity="0.13"/><rect x="3279.1" y="1390.3" width="1" height="68.7" fill="#d81b60" fill-opacity="0.13"/><rect x="3290.1" y="1390.3" width="1" height="68.7" fill="#d81b60" fill-opacity="0.21"/><rect x="3292.1" y="1390.3" width="1" height="68.7" fill="#d81b60" fill-opacity="0.30"/><rect x="3295.1" y="1390.3" width="2.5" height="68.7" fill="#d81b60" fill-opacity="0.34"/><rect x="3306.6" y="1390.3" width="2.5" height="68.7" fill="#d81b60" fill-opacity="0.34"/><rect x="3309.6" y="1390.3" width="2" height="68.7" fill="#d81b60" fill-opacity="0.13"/><rect x="3313.1" y="1390.3" width="2" height="68.7" fill="#d81b60" fill-opacity="0.30"/><rect x="3316.1" y="1390.3" width="1.5" height="68.7" fill="#d81b60" fill-opacity="0.34"/><rect x="3317.6" y="1390.3" width="1" height="68.7" fill="#d81b60" fill-opacity="0.26"/><rect x="3324.1" y="1390.3" width="1" height="68.7" fill="#d81b60" fill-opacity="0.31"/><rect x="3329.6" y="1390.3" width="1.5" height="68.7" fill="#d81b60" fill-opacity="0.21"/><rect x="3332.6" y="1390.3" width="2.5" height="68.7" fill="#d81b60" fill-opacity="0.16"/><rect x="3335.1" y="1390.3" width="2" height="68.7" fill="#d81b60" fill-opacity="0.18"/><rect x="3339.1" y="1390.3" width="1" height="68.7" fill="#d81b60" fill-opacity="0.24"/><rect x="3340.1" y="1390.3" width="1.5" height="68.7" fill="#d81b60" fill-opacity="0.37"/><rect x="3342.1" y="1390.3" width="1.5" height="68.7" fill="#d81b60" fill-opacity="0.19"/><rect x="3343.6" y="1390.3" width="1" height="68.7" fill="#d81b60" fill-opacity="0.25"/><rect x="3346.6" y="1390.3" width="1" height="68.7" fill="#d81b60" fill-opacity="0.27"/><rect x="3349.6" y="1390.3" width="2" height="68.7" fill="#d81b60" fill-opacity="0.34"/><rect x="3366.1" y="1390.3" width="2.5" height="68.7" fill="#d81b60" fill-opacity="0.25"/><rect x="3368.6" y="1390.3" width="2" height="68.7" fill="#d81b60" fill-opacity="0.16"/><rect x="3374.1" y="1390.3" width="1" height="68.7" fill="#d81b60" fill-opacity="0.33"/><rect x="3378.1" y="1390.3" width="2.5" height="68.7" fill="#d81b60" fill-opacity="0.28"/><rect x="3382.1" y="1390.3" width="1" height="68.7" fill="#d81b60" fill-opacity="0.37"/><rect x="3386.1" y="1390.3" width="1" height="68.7" fill="#d81b60" fill-opacity="0.41"/><rect x="3395.6" y="1390.3" width="1.5" height="68.7" fill="#d81b60" fill-opacity="0.37"/><rect x="3402.1" y="1390.3" width="2" height="68.7" fill="#d81b60" fill-opacity="0.16"/><rect x="3405.1" y="1390.3" width="1" height="68.7" fill="#d81b60" fill-opacity="0.31"/><rect x="3407.6" y="1390.3" width="1" height="68.7" fill="#d81b60" fill-opacity="0.24"/><rect x="3409.1" y="1390.3" width="2.5" height="68.7" fill="#d81b60" fill-opacity="0.29"/><rect x="3417.6" y="1390.3" width="1" height="68.7" fill="#d81b60" fill-opacity="0.27"/><rect x="3419.6" y="1390.3" width="2" height="68.7" fill="#d81b60" fill-opacity="0.23"/><rect x="3424.6" y="1390.3" width="1" height="68.7" fill="#d81b60" fill-opacity="0.26"/><rect x="3436.1" y="1390.3" width="2.5" height="68.7" fill="#d81b60" fill-opacity="0.25"/><rect x="3440.6" y="1390.3" width="1" height="68.7" fill="#d81b60" fill-opacity="0.40"/><rect x="3442.1" y="1390.3" width="2" height="68.7" fill="#d81b60" fill-opacity="0.30"/><rect x="3446.1" y="1390.3" width="2" height="68.7" fill="#d81b60" fill-opacity="0.19"/><rect x="3448.1" y="1390.3" width="1.5" height="68.7" fill="#d81b60" fill-opacity="0.35"/><rect x="3456.6" y="1390.3" width="1" height="68.7" fill="#d81b60" fill-opacity="0.22"/><rect x="3458.1" y="1390.3" width="1" height="68.7" fill="#d81b60" fill-opacity="0.25"/><rect x="3462.1" y="1390.3" width="1" height="68.7" fill="#d81b60" fill-opacity="0.14"/><rect x="3464.1" y="1390.3" width="1" height="68.7" fill="#d81b60" fill-opacity="0.39"/><rect x="3468.1" y="1390.3" width="1" height="68.7" fill="#d81b60" fill-opacity="0.14"/><rect x="3473.6" y="1390.3" width="1" height="68.7" fill="#d81b60" fill-opacity="0.36"/><rect x="2986.9" y="1321" width="1.2" height="69.3" fill="#4f1d34"/><rect x="2997.0" y="1321" width="1.2" height="69.3" fill="#4f1d34"/><rect x="3010.8" y="1321" width="1.2" height="69.3" fill="#4f1d34"/><rect x="3039.9" y="1321" width="1.2" height="69.3" fill="#4f1d34"/><rect x="3078.7" y="1321" width="1.2" height="69.3" fill="#4f1d34"/><rect x="3124.7" y="1321" width="1.2" height="69.3" fill="#4f1d34"/><rect x="3239.6" y="1321" width="1.2" height="69.3" fill="#4f1d34"/>
<line x1="2918.2" y1="1279.5" x2="2918.2" y2="1460.0" stroke="#7c7c7c" stroke-width="2" />
<line x1="2906.2" y1="1459.0" x2="3478.2" y2="1459.0" stroke="#7c7c7c" stroke-width="2" />
<line x1="2906.2" y1="1279.5" x2="2918.2" y2="1279.5" stroke="#7c7c7c" stroke-width="2" />
<text x="2901.8" y="1302.0" font-size="22" fill="#808080" font-weight="normal" text-anchor="end" font-family="'Liberation Mono', monospace" >0.6</text>
<line x1="2906.2" y1="1369.2" x2="2918.2" y2="1369.2" stroke="#7c7c7c" stroke-width="2" />
<text x="2901.8" y="1376.2" font-size="22" fill="#808080" font-weight="normal" text-anchor="end" font-family="'Liberation Mono', monospace" >0.3</text>
<line x1="2906.2" y1="1414.1" x2="2918.2" y2="1414.1" stroke="#7c7c7c" stroke-width="2" />
<text x="2901.8" y="1421.1" font-size="22" fill="#808080" font-weight="normal" text-anchor="end" font-family="'Liberation Mono', monospace" >0.15</text>
<text x="2901.8" y="1466.0" font-size="22" fill="#808080" font-weight="normal" text-anchor="end" font-family="'Liberation Mono', monospace" >0</text>
<line x1="3476.6" y1="1459.0" x2="3476.6" y2="1470.5" stroke="#7c7c7c" stroke-width="2" />
<text x="3477.0" y="1489.4" font-size="20" fill="#808080" font-weight="normal" text-anchor="end" font-family="'Liberation Mono', monospace" >ff860334facdb23d3f430ff5b5050f4f</text></svg>
</body></html>
